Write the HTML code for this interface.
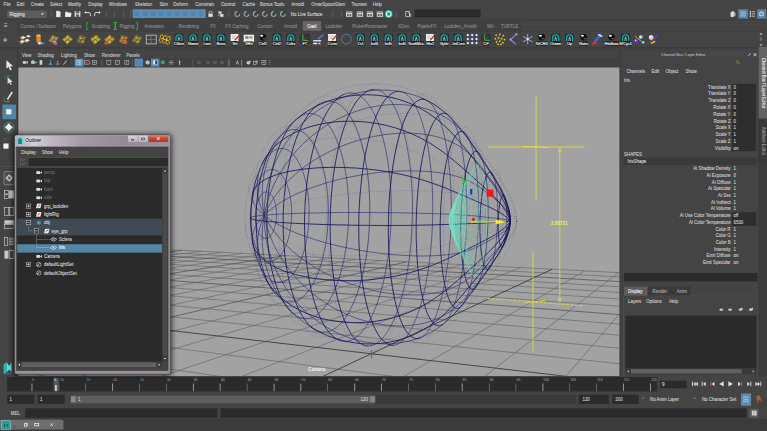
<!DOCTYPE html>
<html><head><meta charset="utf-8"><title>Maya</title>
<style>

html,body{margin:0;padding:0;background:#444;overflow:hidden}
body{width:767px;height:431px;position:relative}
#ui{position:absolute;left:0;top:0;width:1920px;height:1080px;transform-origin:0 0;transform:scale(0.399479,0.399074);opacity:.999;background:#444;font-family:"Liberation Sans",sans-serif;font-size:11px;color:#c4c4c4;overflow:hidden}
#ui div,#ui span,#ui svg{position:absolute;box-sizing:border-box}
.t{white-space:nowrap;transform:translateY(-50%) scaleX(.925);transform-origin:0 50%;line-height:1;-webkit-text-stroke:0.25px;font-size:12px}
.r{text-align:right;transform-origin:100% 50%}
.d{color:#8a8a8a}
.sep{background:#5a5a5a;width:2px}
#vp{left:45.6px;top:169.1px;width:1505.5px;height:772.5px}

</style></head><body>
<div id="ui">
<span class="t" style="left:9.3px;top:10.8px;color:#cfcfcf">File</span>
<span class="t" style="left:41.8px;top:10.8px;color:#cfcfcf">Edit</span>
<span class="t" style="left:77.1px;top:10.8px;color:#cfcfcf">Create</span>
<span class="t" style="left:125.2px;top:10.8px;color:#cfcfcf">Select</span>
<span class="t" style="left:170.2px;top:10.8px;color:#cfcfcf">Modify</span>
<span class="t" style="left:221.0px;top:10.8px;color:#cfcfcf">Display</span>
<span class="t" style="left:272.9px;top:10.8px;color:#cfcfcf">Windows</span>
<span class="t" style="left:338.4px;top:10.8px;color:#cfcfcf">Skeleton</span>
<span class="t" style="left:398.8px;top:10.8px;color:#cfcfcf">Skin</span>
<span class="t" style="left:433.8px;top:10.8px;color:#cfcfcf">Deform</span>
<span class="t" style="left:489.4px;top:10.8px;color:#cfcfcf">Constrain</span>
<span class="t" style="left:553.2px;top:10.8px;color:#cfcfcf">Control</span>
<span class="t" style="left:606.5px;top:10.8px;color:#cfcfcf">Cache</span>
<span class="t" style="left:650.8px;top:10.8px;color:#cfcfcf">Bonus Tools</span>
<span class="t" style="left:729.2px;top:10.8px;color:#cfcfcf">Arnold</span>
<span class="t" style="left:779.3px;top:10.8px;color:#cfcfcf">OmarSpoonSlam</span>
<span class="t" style="left:880.4px;top:10.8px;color:#cfcfcf">Tsunest</span>
<span class="t" style="left:933.0px;top:10.8px;color:#cfcfcf">Help</span>
<div style="left:18.0px;top:25.6px;width:98.9px;height:19.0px;background:#5d5d5d;border-radius:2px"></div>
<span class="t" style="left:23.8px;top:35.1px;color:#e0e0e0">Rigging</span>
<svg style="left:102.1px;top:32.6px;width:8px;height:6px" viewBox="0 0 8 6"><path d="M0 0H8L4 5Z" fill="#ddd"/></svg>
<div style="left:126.7px;top:26.3px;width:2.0px;height:17.5px;background:#606060"></div>
<div style="left:264.8px;top:26.3px;width:2.0px;height:17.5px;background:#606060"></div>
<div style="left:285.4px;top:26.3px;width:2.0px;height:17.5px;background:#606060"></div>
<div style="left:308.4px;top:26.3px;width:2.0px;height:17.5px;background:#606060"></div>
<div style="left:325.4px;top:26.3px;width:2.0px;height:17.5px;background:#606060"></div>
<svg style="left:137.4px;top:25.6px;width:18px;height:18px" viewBox="0 0 20 20"><path d="M4 1H12L16 5V19H4Z" fill="#e8e8e8"/><path d="M12 1V5H16" fill="#aaa"/></svg>
<svg style="left:162.0px;top:25.6px;width:18px;height:18px" viewBox="0 0 20 20"><path d="M1 4H8L10 6H18V18H1Z" fill="#d8d8d8"/><path d="M4 9H19L16 18H1Z" fill="#f0f0f0"/></svg>
<svg style="left:185.0px;top:25.6px;width:18px;height:18px" viewBox="0 0 20 20"><path d="M2 2H18V18H2Z" fill="#e0e0e0"/><rect x="5" y="2" width="10" height="6" fill="#555"/><rect x="6" y="11" width="8" height="7" fill="#555"/></svg>
<svg style="left:210.0px;top:25.6px;width:18px;height:18px" viewBox="0 0 20 20"><path d="M3 6H14Q18 6 18 11V16" stroke="#e0e0e0" stroke-width="2.6" fill="none"/><path d="M1 6L6 2V10Z" fill="#e0e0e0"/></svg>
<svg style="left:234.6px;top:25.6px;width:18px;height:18px" viewBox="0 0 20 20"><path d="M17 6H6Q2 6 2 11V16" stroke="#e0e0e0" stroke-width="2.6" fill="none"/><path d="M19 6L14 2V10Z" fill="#e0e0e0"/></svg>
<div style="left:331.7px;top:23.1px;width:183.2px;height:21.5px;background:#5b8cb3;border-radius:1px"></div>
<div style="left:335.4px;top:26.1px;width:15.0px;height:15.5px;background:#4f80a8;border:1px solid #74a4ca;opacity:.7"></div>
<div style="left:355.5px;top:26.1px;width:15.0px;height:15.5px;background:#4f80a8;border:1px solid #74a4ca;opacity:.7"></div>
<div style="left:375.5px;top:26.1px;width:15.0px;height:15.5px;background:#4f80a8;border:1px solid #74a4ca;opacity:.7"></div>
<div style="left:395.5px;top:26.1px;width:15.0px;height:15.5px;background:#4f80a8;border:1px solid #74a4ca;opacity:.7"></div>
<div style="left:415.5px;top:26.1px;width:15.0px;height:15.5px;background:#4f80a8;border:1px solid #74a4ca;opacity:.7"></div>
<div style="left:435.6px;top:26.1px;width:15.0px;height:15.5px;background:#4f80a8;border:1px solid #74a4ca;opacity:.7"></div>
<div style="left:455.6px;top:26.1px;width:15.0px;height:15.5px;background:#4f80a8;border:1px solid #74a4ca;opacity:.7"></div>
<div style="left:475.6px;top:26.1px;width:15.0px;height:15.5px;background:#4f80a8;border:1px solid #74a4ca;opacity:.7"></div>
<div style="left:495.6px;top:26.1px;width:15.0px;height:15.5px;background:#4f80a8;border:1px solid #74a4ca;opacity:.7"></div>
<svg style="left:517.9px;top:25.6px;width:18px;height:18px" viewBox="0 0 20 20"><rect x="4" y="9" width="12" height="9" fill="#e0e0e0"/><path d="M6 9V6Q6 2 10 2Q14 2 14 6V9" stroke="#e0e0e0" stroke-width="2" fill="none"/></svg>
<svg style="left:544.2px;top:25.6px;width:18px;height:18px" viewBox="0 0 20 20"><rect x="3" y="3" width="9" height="6" fill="#ddd"/><rect x="8" y="10" width="9" height="8" fill="#ddd"/><rect x="3" y="12" width="3" height="3" fill="#ddd"/></svg>
<div style="left:571.5px;top:26.3px;width:2.0px;height:17.5px;background:#606060"></div>
<svg style="left:585.0px;top:25.6px;width:18px;height:18px" viewBox="0 0 20 20"><path d="M5 5A7 7 0 1 1 5 15" stroke="#a8b8b8" stroke-width="2.6" fill="none" transform="rotate(135 10 10)"/><circle cx="6" cy="6" r="2.4" fill="#6aa"/></svg>
<svg style="left:608.1px;top:25.6px;width:18px;height:18px" viewBox="0 0 20 20"><path d="M5 5A7 7 0 1 1 5 15" stroke="#a8b8b8" stroke-width="2.6" fill="none" transform="rotate(135 10 10)"/><circle cx="6" cy="6" r="2.4" fill="#6aa"/></svg>
<svg style="left:630.6px;top:25.6px;width:18px;height:18px" viewBox="0 0 20 20"><path d="M5 5A7 7 0 1 1 5 15" stroke="#a8b8b8" stroke-width="2.6" fill="none" transform="rotate(135 10 10)"/><circle cx="6" cy="6" r="2.4" fill="#6aa"/></svg>
<svg style="left:653.6px;top:25.6px;width:18px;height:18px" viewBox="0 0 20 20"><path d="M5 5A7 7 0 1 1 5 15" stroke="#a8b8b8" stroke-width="2.6" fill="none" transform="rotate(135 10 10)"/><circle cx="6" cy="6" r="2.4" fill="#6aa"/></svg>
<svg style="left:676.4px;top:25.6px;width:18px;height:18px" viewBox="0 0 20 20"><path d="M5 5A7 7 0 1 1 5 15" stroke="#a8b8b8" stroke-width="2.6" fill="none" transform="rotate(135 10 10)"/><circle cx="6" cy="6" r="2.4" fill="#6aa"/></svg>
<svg style="left:699.4px;top:25.6px;width:18px;height:18px" viewBox="0 0 20 20"><path d="M5 5A7 7 0 1 1 5 15" stroke="#a8b8b8" stroke-width="2.6" fill="none" transform="rotate(135 10 10)"/><circle cx="6" cy="6" r="2.4" fill="#6aa"/></svg>
<span class="t" style="left:727.7px;top:35.1px;color:#d8d8d8">No Live Surface</span>
<div style="left:831.8px;top:26.3px;width:2.0px;height:17.5px;background:#606060"></div>
<div style="left:853.6px;top:26.3px;width:2.0px;height:17.5px;background:#606060"></div>
<div style="left:991.3px;top:26.3px;width:2.0px;height:17.5px;background:#606060"></div>
<svg style="left:865.4px;top:25.6px;width:18px;height:18px" viewBox="0 0 20 20"><rect x="1" y="3" width="18" height="15" fill="#d8d8d8"/><rect x="1" y="3" width="18" height="4" fill="#888"/><rect x="4" y="10" width="5" height="6" fill="#666"/><rect x="11" y="10" width="5" height="6" fill="#666"/></svg>
<svg style="left:891.7px;top:25.6px;width:18px;height:18px" viewBox="0 0 20 20"><rect x="1" y="3" width="18" height="15" fill="#d8d8d8"/><rect x="1" y="3" width="18" height="4" fill="#888"/><rect x="4" y="10" width="5" height="6" fill="#666"/><rect x="11" y="10" width="5" height="6" fill="#666"/></svg>
<svg style="left:917.2px;top:25.6px;width:18px;height:18px" viewBox="0 0 20 20"><rect x="1" y="3" width="18" height="15" fill="#d8d8d8"/><rect x="1" y="3" width="18" height="4" fill="#888"/><rect x="4" y="10" width="5" height="6" fill="#666"/><rect x="11" y="10" width="5" height="6" fill="#666"/></svg>
<svg style="left:942.2px;top:25.6px;width:18px;height:18px" viewBox="0 0 20 20"><rect x="1" y="3" width="18" height="15" fill="#d8d8d8"/><rect x="1" y="3" width="18" height="4" fill="#888"/><rect x="4" y="10" width="5" height="6" fill="#666"/><rect x="11" y="10" width="5" height="6" fill="#666"/></svg>
<svg style="left:962.0px;top:23.6px;width:22px;height:22px" viewBox="0 0 20 20"><circle cx="10" cy="10" r="9" fill="#1fa58e"/><circle cx="10" cy="10" r="5.5" fill="none" stroke="#e8fff8" stroke-width="2.4"/></svg>
<svg style="left:1013.6px;top:25.6px;width:18px;height:18px" viewBox="0 0 20 20"><rect x="2" y="3" width="10" height="14" fill="none" stroke="#ddd" stroke-width="2"/><path d="M9 7L17 12L13 13L15 18" stroke="#ddd" stroke-width="2" fill="none"/></svg>
<div style="left:1037.6px;top:24.1px;width:165.2px;height:20.0px;background:#2b2b2b;border-radius:1px"></div>
<svg style="left:1825.9px;top:25.6px;width:18px;height:18px" viewBox="0 0 20 20"><path d="M3 6L10 2L13 4V17L6 19L3 17Z" fill="#d8d8d8"/><path d="M13 4L17 7V15L13 17" fill="#aaa"/></svg>
<div style="left:1847.9px;top:23.1px;width:25.0px;height:24.1px;background:#587d9f"></div>
<svg style="left:1851.4px;top:25.6px;width:18px;height:18px" viewBox="0 0 20 20"><rect x="2" y="3" width="16" height="3" fill="#a9c6de"/><rect x="2" y="8.5" width="16" height="3" fill="#a9c6de"/><rect x="2" y="14" width="16" height="3" fill="#a9c6de"/></svg>
<svg style="left:1873.5px;top:25.6px;width:18px;height:18px" viewBox="0 0 20 20"><rect x="3" y="2" width="4" height="4" fill="#e0e0e0"/><rect x="3" y="8" width="4" height="4" fill="#e0e0e0"/><rect x="3" y="14" width="4" height="4" fill="#e0e0e0"/><rect x="9" y="3" width="9" height="2" fill="#e0e0e0"/><rect x="9" y="9" width="9" height="2" fill="#e0e0e0"/><rect x="9" y="15" width="9" height="2" fill="#e0e0e0"/></svg>
<div style="left:1894.5px;top:23.1px;width:23.0px;height:24.1px;background:#587d9f"></div>
<svg style="left:1897.0px;top:25.6px;width:18px;height:18px" viewBox="0 0 20 20"><path d="M10 2L17 6V14L10 18L3 14V6Z" fill="#a9c6de"/><circle cx="10" cy="10" r="3" fill="#4a6f92"/></svg>
<div style="left:0.0px;top:48.4px;width:1920.0px;height:1.3px;background:#3a3a3a"></div>
<span class="t" style="left:10.8px;top:64.1px;font-size:9px;color:#bbb">&#9776;</span>
<svg style="left:6.3px;top:92.7px;width:14px;height:14px" viewBox="0 0 14 14"><circle cx="7" cy="7" r="3.6" fill="none" stroke="#ccc" stroke-width="2.4" stroke-dasharray="2.2 1.6"/><circle cx="7" cy="7" r="2.6" fill="none" stroke="#ccc" stroke-width="1.6"/></svg>
<div style="left:42.6px;top:52.1px;width:1263.1px;height:26.1px;background:#404040"></div>
<div style="left:757.5px;top:52.6px;width:46.6px;height:24.1px;background:#686868;border-radius:2px 2px 0 0"></div>
<span class="t" style="left:50.8px;top:64.6px;color:#8c8c8c">Curves / Surfaces</span>
<span class="t" style="left:157.7px;top:64.6px;color:#8c8c8c">Polygons</span>
<span class="t" style="left:228.5px;top:64.6px;color:#8c8c8c">Sculpting</span>
<span class="t" style="left:298.6px;top:64.6px;color:#8c8c8c">Rigging</span>
<span class="t" style="left:361.0px;top:64.6px;color:#8c8c8c">Animation</span>
<span class="t" style="left:447.1px;top:64.6px;color:#8c8c8c">Rendering</span>
<span class="t" style="left:526.4px;top:64.6px;color:#8c8c8c">FX</span>
<span class="t" style="left:564.0px;top:64.6px;color:#8c8c8c">FX Caching</span>
<span class="t" style="left:644.1px;top:64.6px;color:#8c8c8c">Custom</span>
<span class="t" style="left:711.4px;top:64.6px;color:#8c8c8c">Arnold</span>
<span class="t" style="left:769.0px;top:64.6px;color:#f0f0f0">Gael</span>
<span class="t" style="left:815.1px;top:64.6px;color:#8c8c8c">Lookdev</span>
<span class="t" style="left:882.4px;top:64.6px;color:#8c8c8c">PickerPoromaster</span>
<span class="t" style="left:996.3px;top:64.6px;color:#8c8c8c">XGen</span>
<span class="t" style="left:1044.6px;top:64.6px;color:#8c8c8c">PipelinFX</span>
<span class="t" style="left:1111.9px;top:64.6px;color:#8c8c8c">Lookdev_Arnold</span>
<span class="t" style="left:1219.1px;top:64.6px;color:#8c8c8c">Wit</span>
<span class="t" style="left:1254.1px;top:64.6px;color:#8c8c8c">TURTLE</span>
<svg style="left:216.3px;top:54.6px;width:6px;height:20px" viewBox="0 0 6 20"><path d="M5 1H1V19H5" stroke="#22e022" stroke-width="2" fill="none"/></svg>
<svg style="left:283.1px;top:54.6px;width:6px;height:20px" viewBox="0 0 6 20"><path d="M1 1H5V19H1" stroke="#22e022" stroke-width="2" fill="none"/></svg>
<svg style="left:288.1px;top:54.6px;width:6px;height:20px" viewBox="0 0 6 20"><path d="M5 1H1V19H5" stroke="#22e022" stroke-width="2" fill="none"/></svg>
<svg style="left:339.2px;top:54.6px;width:6px;height:20px" viewBox="0 0 6 20"><path d="M1 1H5V19H1" stroke="#22e022" stroke-width="2" fill="none"/></svg>
<div style="left:42.6px;top:78.2px;width:1864.9px;height:1.3px;background:#3a3a3a"></div>
<div style="left:1305.7px;top:61.1px;width:613.3px;height:1.3px;background:#4e4e4e"></div>
<svg style="left:1900.0px;top:81.0px;width:10px;height:36px" viewBox="0 0 10 36"><path d="M1 6L5 1L9 6Z M1 30L5 35L9 30Z" fill="#bbb"/><rect x="2" y="13" width="6" height="2" fill="#999"/><rect x="2" y="18" width="6" height="2" fill="#999"/></svg>
<svg style="left:47.1px;top:81.5px;width:34px;height:34px" viewBox="0 0 34 34"><path d="M4 12L11 8L18 12L11 16Z M14 19L21 15L28 19L21 23Z M2 22L9 18L16 22L9 26Z M18 9L24 6L30 9L24 12Z" fill="#f3ead2"/><path d="M4 12L11 16V19L4 15Z M14 19L21 23V26L14 22Z M2 22L9 26V29L2 25Z" fill="#c69b58"/></svg>
<svg style="left:82.0px;top:81.5px;width:34px;height:34px" viewBox="0 0 34 34"><rect x="9" y="5" width="11" height="20" rx="4" fill="#e8862a"/><ellipse cx="14.5" cy="7" rx="5.5" ry="2.6" fill="#f8b66a"/><path d="M20 22L30 26L22 31L17 27Z" fill="#4f8fd0"/><path d="M12 26L18 23L22 26L16 30Z" fill="#f3f3f3"/></svg>
<svg style="left:116.9px;top:81.5px;width:34px;height:34px" viewBox="0 0 34 34"><g transform="rotate(0 17 17)"><path d="M4 21L14 5L30 12L20 29Z" fill="#9c8f5a"/><path d="M4 21L14 5L30 12L20 29Z M9 13L25 20.5 M12 25L22 8.5" stroke="#5f5430" stroke-width="1.8" fill="none"/><path d="M12 14L16 12L19 14L15 16Z M17 22L21 20L23 22L19 24Z" fill="#e6dc9a" opacity=".75"/></g><path d="M20 22L27 25L24 31L18 29Z" fill="#c35fc0"/></svg>
<svg style="left:151.8px;top:81.5px;width:34px;height:34px" viewBox="0 0 34 34"><g transform="rotate(18 17 17)"><path d="M4 21L14 5L30 12L20 29Z" fill="#b8a838"/><path d="M4 21L14 5L30 12L20 29Z M9 13L25 20.5 M12 25L22 8.5" stroke="#5a5220" stroke-width="1.8" fill="none"/><path d="M12 14L16 12L19 14L15 16Z M17 22L21 20L23 22L19 24Z" fill="#e6dc9a" opacity=".75"/></g></svg>
<svg style="left:186.8px;top:81.5px;width:34px;height:34px" viewBox="0 0 34 34"><g transform="rotate(-8 17 17)"><path d="M4 21L14 5L30 12L20 29Z" fill="#7f7840"/><path d="M4 21L14 5L30 12L20 29Z M9 13L25 20.5 M12 25L22 8.5" stroke="#5a5428" stroke-width="1.8" fill="none"/><path d="M12 14L16 12L19 14L15 16Z M17 22L21 20L23 22L19 24Z" fill="#e6dc9a" opacity=".75"/></g></svg>
<svg style="left:221.7px;top:81.5px;width:34px;height:34px" viewBox="0 0 34 34"><g transform="rotate(22 17 17)"><path d="M4 21L14 5L30 12L20 29Z" fill="#b5a53a"/><path d="M4 21L14 5L30 12L20 29Z M9 13L25 20.5 M12 25L22 8.5" stroke="#5f5622" stroke-width="1.8" fill="none"/><path d="M12 14L16 12L19 14L15 16Z M17 22L21 20L23 22L19 24Z" fill="#e6dc9a" opacity=".75"/></g></svg>
<svg style="left:256.6px;top:81.5px;width:34px;height:34px" viewBox="0 0 34 34"><g transform="rotate(15 17 17)"><path d="M4 21L14 5L30 12L20 29Z" fill="#b89a3a"/><path d="M4 21L14 5L30 12L20 29Z M9 13L25 20.5 M12 25L22 8.5" stroke="#6a5222" stroke-width="1.8" fill="none"/><path d="M12 14L16 12L19 14L15 16Z M17 22L21 20L23 22L19 24Z" fill="#e6dc9a" opacity=".75"/></g><path d="M6 22L14 26L10 31L4 28Z" fill="#c8632a"/></svg>
<svg style="left:291.5px;top:81.5px;width:34px;height:34px" viewBox="0 0 34 34"><g transform="rotate(-12 17 17)"><path d="M4 21L14 5L30 12L20 29Z" fill="#a8803c"/><path d="M4 21L14 5L30 12L20 29Z M9 13L25 20.5 M12 25L22 8.5" stroke="#6a4422" stroke-width="1.8" fill="none"/><path d="M12 14L16 12L19 14L15 16Z M17 22L21 20L23 22L19 24Z" fill="#e6dc9a" opacity=".75"/></g><path d="M16 20L28 22L24 29L14 27Z" fill="#c8632a"/></svg>
<svg style="left:326.4px;top:81.5px;width:34px;height:34px" viewBox="0 0 34 34"><g transform="rotate(0 17 17)"><path d="M4 21L14 5L30 12L20 29Z" fill="#8c8240"/><path d="M4 21L14 5L30 12L20 29Z M9 13L25 20.5 M12 25L22 8.5" stroke="#5c5426" stroke-width="1.8" fill="none"/><path d="M12 14L16 12L19 14L15 16Z M17 22L21 20L23 22L19 24Z" fill="#e6dc9a" opacity=".75"/></g></svg>
<svg style="left:361.4px;top:81.5px;width:34px;height:34px" viewBox="0 0 34 34"><rect x="5" y="6" width="25" height="22" fill="none" stroke="#d8d8d8" stroke-width="1.8"/><path d="M5 17H30M17 6V28" stroke="#9a9a9a" stroke-width="1.2"/></svg>
<svg style="left:396.3px;top:81.5px;width:34px;height:34px" viewBox="0 0 34 34"><g transform="rotate(14 17 17)"><path d="M4 8H29V26H4Z M4 17H29 M12 8V26 M21 8V26" stroke="#e0c030" stroke-width="2.6" fill="none"/><g fill="#7a5a10"><circle cx="4" cy="8" r="2.6"/><circle cx="12" cy="8" r="2.6"/><circle cx="21" cy="8" r="2.6"/><circle cx="29" cy="8" r="2.6"/><circle cx="4" cy="17" r="2.6"/><circle cx="29" cy="17" r="2.6"/><circle cx="4" cy="26" r="2.6"/><circle cx="12" cy="26" r="2.6"/><circle cx="21" cy="26" r="2.6"/><circle cx="29" cy="26" r="2.6"/></g></g></svg>
<svg style="left:431.2px;top:81.5px;width:34px;height:34px" viewBox="0 0 34 34"><g transform="translate(17 13) scale(.84) translate(-17 -14)"><rect x="3" y="1" width="28" height="27" rx="4" fill="#263034"/><path d="M8 25V14A9 9 0 0 1 26 14V25" stroke="#12a6a2" stroke-width="4" fill="none"/><path d="M14 23L17 11L20 23" stroke="#a8ece8" stroke-width="2" fill="none"/></g></svg><span class="t" style="left:448.2px;top:109.3px;font-size:10.5px;color:#fff;background:rgba(20,20,20,.55);padding:1px 0;letter-spacing:-0.2px;transform:translate(-50%,-50%) scaleX(.925);transform-origin:50% 50%">Clktrn</span>
<svg style="left:466.1px;top:81.5px;width:34px;height:34px" viewBox="0 0 34 34"><g transform="translate(17 13) scale(.84) translate(-17 -14)"><rect x="3" y="1" width="28" height="27" rx="4" fill="#263034"/><path d="M8 25V14A9 9 0 0 1 26 14V25" stroke="#12a6a2" stroke-width="4" fill="none"/><path d="M14 23L17 11L20 23" stroke="#a8ece8" stroke-width="2" fill="none"/></g></svg><span class="t" style="left:483.1px;top:109.3px;font-size:10.5px;color:#fff;background:rgba(20,20,20,.55);padding:1px 0;letter-spacing:-0.2px;transform:translate(-50%,-50%) scaleX(.925);transform-origin:50% 50%">Name</span>
<svg style="left:501.0px;top:81.5px;width:34px;height:34px" viewBox="0 0 34 34"><g transform="translate(17 13) scale(.84) translate(-17 -14)"><rect x="3" y="1" width="28" height="27" rx="4" fill="#263034"/><path d="M8 25V14A9 9 0 0 1 26 14V25" stroke="#12a6a2" stroke-width="4" fill="none"/><path d="M14 23L17 11L20 23" stroke="#a8ece8" stroke-width="2" fill="none"/></g></svg><span class="t" style="left:518.0px;top:109.3px;font-size:10.5px;color:#fff;background:rgba(20,20,20,.55);padding:1px 0;letter-spacing:-0.2px;transform:translate(-50%,-50%) scaleX(.925);transform-origin:50% 50%">Last</span>
<svg style="left:536.0px;top:81.5px;width:34px;height:34px" viewBox="0 0 34 34"><g transform="translate(17 13) scale(.84) translate(-17 -14)"><rect x="3" y="1" width="28" height="27" rx="4" fill="#263034"/><path d="M8 25V14A9 9 0 0 1 26 14V25" stroke="#12a6a2" stroke-width="4" fill="none"/><path d="M14 23L17 11L20 23" stroke="#a8ece8" stroke-width="2" fill="none"/></g></svg><span class="t" style="left:553.0px;top:109.3px;font-size:10.5px;color:#fff;background:rgba(20,20,20,.55);padding:1px 0;letter-spacing:-0.2px;transform:translate(-50%,-50%) scaleX(.925);transform-origin:50% 50%">Boss</span>
<svg style="left:570.9px;top:81.5px;width:34px;height:34px" viewBox="0 0 34 34"><g transform="translate(17 12) scale(.82) translate(-17 -14)"><path d="M4 3H28V25H4Z" fill="#f2f2f2"/><path d="M8 9H22M8 13H18M8 17H20" stroke="#999" stroke-width="1.4"/><path d="M16 20L28 6L31 9L19 23L15 24Z" fill="#c0392b"/><path d="M16 20L19 23L15 24Z" fill="#f1d9a0"/></g></svg><span class="t" style="left:587.9px;top:109.3px;font-size:10.5px;color:#fff;background:rgba(20,20,20,.55);padding:1px 0;letter-spacing:-0.2px;transform:translate(-50%,-50%) scaleX(.925);transform-origin:50% 50%">Srt</span>
<svg style="left:605.8px;top:81.5px;width:34px;height:34px" viewBox="0 0 34 34"><rect x="4" y="5" width="26" height="18" fill="#ececec"/><rect x="8" y="9" width="8" height="6" fill="#777"/><rect x="18" y="9" width="8" height="6" fill="#999"/></svg><span class="t" style="left:622.8px;top:109.3px;font-size:10.5px;color:#fff;background:rgba(20,20,20,.55);padding:1px 0;letter-spacing:-0.2px;transform:translate(-50%,-50%) scaleX(.925);transform-origin:50% 50%">SRtt</span>
<svg style="left:640.7px;top:81.5px;width:34px;height:34px" viewBox="0 0 34 34"><g transform="translate(17 11) scale(.85) translate(-17 -12)"><circle cx="17" cy="12" r="10" fill="#111"/><ellipse cx="13.5" cy="8" rx="4.5" ry="3.2" fill="#f4f4f4"/><ellipse cx="21" cy="17" rx="5" ry="2.2" fill="#777" opacity=".7"/></g></svg><span class="t" style="left:657.7px;top:109.3px;font-size:10.5px;color:#fff;background:rgba(20,20,20,.55);padding:1px 0;letter-spacing:-0.2px;transform:translate(-50%,-50%) scaleX(.925);transform-origin:50% 50%">Ctrl1</span>
<svg style="left:675.7px;top:81.5px;width:34px;height:34px" viewBox="0 0 34 34"><g transform="translate(17 13) scale(.84) translate(-17 -14)"><rect x="3" y="1" width="28" height="27" rx="4" fill="#263034"/><path d="M8 25V14A9 9 0 0 1 26 14V25" stroke="#12a6a2" stroke-width="4" fill="none"/><path d="M14 23L17 11L20 23" stroke="#a8ece8" stroke-width="2" fill="none"/></g></svg><span class="t" style="left:692.7px;top:109.3px;font-size:10.5px;color:#fff;background:rgba(20,20,20,.55);padding:1px 0;letter-spacing:-0.2px;transform:translate(-50%,-50%) scaleX(.925);transform-origin:50% 50%">Ctrl2</span>
<svg style="left:710.6px;top:81.5px;width:34px;height:34px" viewBox="0 0 34 34"><g transform="translate(17 13) scale(.84) translate(-17 -14)"><rect x="3" y="1" width="28" height="27" rx="4" fill="#263034"/><path d="M8 25V14A9 9 0 0 1 26 14V25" stroke="#12a6a2" stroke-width="4" fill="none"/><path d="M14 23L17 11L20 23" stroke="#a8ece8" stroke-width="2" fill="none"/></g></svg><span class="t" style="left:727.6px;top:109.3px;font-size:10.5px;color:#fff;background:rgba(20,20,20,.55);padding:1px 0;letter-spacing:-0.2px;transform:translate(-50%,-50%) scaleX(.925);transform-origin:50% 50%">Colrs</span>
<svg style="left:745.5px;top:81.5px;width:34px;height:34px" viewBox="0 0 34 34"><rect x="4" y="2" width="26" height="26" fill="#38303a"/><path d="M12 4V20H26" stroke="#4c4" stroke-width="2.4" fill="none"/><path d="M12 20L22 12" stroke="#c33" stroke-width="2.4"/></svg><span class="t" style="left:762.5px;top:109.3px;font-size:10.5px;color:#fff;background:rgba(20,20,20,.55);padding:1px 0;letter-spacing:-0.2px;transform:translate(-50%,-50%) scaleX(.925);transform-origin:50% 50%">FT</span>
<svg style="left:780.4px;top:81.5px;width:34px;height:34px" viewBox="0 0 34 34"><path d="M4 18H24V22H4Z" fill="#d8d8d8"/><path d="M4 25H14V29H4Z" fill="#f0f0f0"/><path d="M16 16L29 5" stroke="#5b78d8" stroke-width="3.4"/><path d="M17 25H22V29H17Z" fill="#ddd"/></svg>
<svg style="left:815.3px;top:81.5px;width:34px;height:34px" viewBox="0 0 34 34"><g transform="translate(17 12) scale(.82) translate(-17 -14)"><path d="M4 3H28V25H4Z" fill="#f2f2f2"/><path d="M8 9H22M8 13H18M8 17H20" stroke="#999" stroke-width="1.4"/><path d="M16 20L28 6L31 9L19 23L15 24Z" fill="#c0392b"/><path d="M16 20L19 23L15 24Z" fill="#f1d9a0"/></g></svg><span class="t" style="left:832.3px;top:109.3px;font-size:10.5px;color:#fff;background:rgba(20,20,20,.55);padding:1px 0;letter-spacing:-0.2px;transform:translate(-50%,-50%) scaleX(.925);transform-origin:50% 50%">Conn</span>
<svg style="left:850.3px;top:81.5px;width:34px;height:34px" viewBox="0 0 34 34"><circle cx="17" cy="16" r="12" fill="none" stroke="#4f7fb8" stroke-width="2.2"/></svg>
<svg style="left:885.2px;top:81.5px;width:34px;height:34px" viewBox="0 0 34 34"><g transform="translate(17 13) scale(.84) translate(-17 -14)"><rect x="3" y="1" width="28" height="27" rx="4" fill="#263034"/><path d="M8 25V14A9 9 0 0 1 26 14V25" stroke="#12a6a2" stroke-width="4" fill="none"/><path d="M14 23L17 11L20 23" stroke="#a8ece8" stroke-width="2" fill="none"/></g></svg><span class="t" style="left:902.2px;top:109.3px;font-size:10.5px;color:#fff;background:rgba(20,20,20,.55);padding:1px 0;letter-spacing:-0.2px;transform:translate(-50%,-50%) scaleX(.925);transform-origin:50% 50%">Cvl</span>
<svg style="left:920.1px;top:81.5px;width:34px;height:34px" viewBox="0 0 34 34"><g transform="translate(17 13) scale(.84) translate(-17 -14)"><rect x="3" y="1" width="28" height="27" rx="4" fill="#263034"/><path d="M8 25V14A9 9 0 0 1 26 14V25" stroke="#12a6a2" stroke-width="4" fill="none"/><path d="M14 23L17 11L20 23" stroke="#a8ece8" stroke-width="2" fill="none"/></g></svg><span class="t" style="left:937.1px;top:109.3px;font-size:10.5px;color:#fff;background:rgba(20,20,20,.55);padding:1px 0;letter-spacing:-0.2px;transform:translate(-50%,-50%) scaleX(.925);transform-origin:50% 50%">bcl6</span>
<svg style="left:955.0px;top:81.5px;width:34px;height:34px" viewBox="0 0 34 34"><g transform="translate(17 13) scale(.84) translate(-17 -14)"><rect x="3" y="1" width="28" height="27" rx="4" fill="#263034"/><path d="M8 25V14A9 9 0 0 1 26 14V25" stroke="#12a6a2" stroke-width="4" fill="none"/><path d="M14 23L17 11L20 23" stroke="#a8ece8" stroke-width="2" fill="none"/></g></svg><span class="t" style="left:972.0px;top:109.3px;font-size:10.5px;color:#fff;background:rgba(20,20,20,.55);padding:1px 0;letter-spacing:-0.2px;transform:translate(-50%,-50%) scaleX(.925);transform-origin:50% 50%">bcl5</span>
<svg style="left:989.9px;top:81.5px;width:34px;height:34px" viewBox="0 0 34 34"><g transform="translate(17 13) scale(.84) translate(-17 -14)"><rect x="3" y="1" width="28" height="27" rx="4" fill="#263034"/><path d="M8 25V14A9 9 0 0 1 26 14V25" stroke="#12a6a2" stroke-width="4" fill="none"/><path d="M14 23L17 11L20 23" stroke="#a8ece8" stroke-width="2" fill="none"/></g></svg><span class="t" style="left:1006.9px;top:109.3px;font-size:10.5px;color:#fff;background:rgba(20,20,20,.55);padding:1px 0;letter-spacing:-0.2px;transform:translate(-50%,-50%) scaleX(.925);transform-origin:50% 50%">bcl5</span>
<svg style="left:1024.9px;top:81.5px;width:34px;height:34px" viewBox="0 0 34 34"><g transform="translate(17 13) scale(.84) translate(-17 -14)"><rect x="3" y="1" width="28" height="27" rx="4" fill="#263034"/><path d="M8 25V14A9 9 0 0 1 26 14V25" stroke="#12a6a2" stroke-width="4" fill="none"/><path d="M14 23L17 11L20 23" stroke="#a8ece8" stroke-width="2" fill="none"/></g></svg><span class="t" style="left:1041.9px;top:109.3px;font-size:10.5px;color:#fff;background:rgba(20,20,20,.55);padding:1px 0;letter-spacing:-0.2px;transform:translate(-50%,-50%) scaleX(.925);transform-origin:50% 50%">SoeftMut.</span>
<svg style="left:1059.8px;top:81.5px;width:34px;height:34px" viewBox="0 0 34 34"><g transform="translate(17 12) scale(.82) translate(-17 -14)"><path d="M4 3H28V25H4Z" fill="#f2f2f2"/><path d="M8 9H22M8 13H18M8 17H20" stroke="#999" stroke-width="1.4"/><path d="M16 20L28 6L31 9L19 23L15 24Z" fill="#c0392b"/><path d="M16 20L19 23L15 24Z" fill="#f1d9a0"/></g></svg><span class="t" style="left:1076.8px;top:109.3px;font-size:10.5px;color:#fff;background:rgba(20,20,20,.55);padding:1px 0;letter-spacing:-0.2px;transform:translate(-50%,-50%) scaleX(.925);transform-origin:50% 50%">Hts1</span>
<svg style="left:1094.7px;top:81.5px;width:34px;height:34px" viewBox="0 0 34 34"><g transform="translate(17 13) scale(.84) translate(-17 -14)"><rect x="3" y="1" width="28" height="27" rx="4" fill="#263034"/><path d="M8 25V14A9 9 0 0 1 26 14V25" stroke="#12a6a2" stroke-width="4" fill="none"/><path d="M14 23L17 11L20 23" stroke="#a8ece8" stroke-width="2" fill="none"/></g></svg><span class="t" style="left:1111.7px;top:109.3px;font-size:10.5px;color:#fff;background:rgba(20,20,20,.55);padding:1px 0;letter-spacing:-0.2px;transform:translate(-50%,-50%) scaleX(.925);transform-origin:50% 50%">Splitr</span>
<svg style="left:1129.6px;top:81.5px;width:34px;height:34px" viewBox="0 0 34 34"><g transform="translate(17 13) scale(.84) translate(-17 -14)"><rect x="3" y="1" width="28" height="27" rx="4" fill="#263034"/><path d="M8 25V14A9 9 0 0 1 26 14V25" stroke="#12a6a2" stroke-width="4" fill="none"/><path d="M14 23L17 11L20 23" stroke="#a8ece8" stroke-width="2" fill="none"/></g></svg><span class="t" style="left:1146.6px;top:109.3px;font-size:10.5px;color:#fff;background:rgba(20,20,20,.55);padding:1px 0;letter-spacing:-0.2px;transform:translate(-50%,-50%) scaleX(.925);transform-origin:50% 50%">JntCors</span>
<svg style="left:1164.5px;top:81.5px;width:34px;height:34px" viewBox="0 0 34 34"><path d="M6 6H28V26H6Z M6 16H28 M17 6V26" stroke="#4f67c8" stroke-width="1.6" fill="none"/><g fill="#f4f4f4"><circle cx="6" cy="6" r="2.8"/><circle cx="17" cy="6" r="2.8"/><circle cx="28" cy="6" r="2.8"/><circle cx="6" cy="16" r="2.8"/><circle cx="17" cy="16" r="2.8"/><circle cx="28" cy="16" r="2.8"/><circle cx="6" cy="26" r="2.8"/><circle cx="17" cy="26" r="2.8"/><circle cx="28" cy="26" r="2.8"/></g></svg>
<svg style="left:1199.5px;top:81.5px;width:34px;height:34px" viewBox="0 0 34 34"><rect x="5" y="3" width="24" height="25" fill="#3a3238"/><path d="M13 4V19H27" stroke="#3c3" stroke-width="2.2" fill="none"/><path d="M13 19L6 26" stroke="#c33" stroke-width="2.4"/><path d="M13 19L22 10" stroke="#55c" stroke-width="2"/></svg><span class="t" style="left:1216.5px;top:109.3px;font-size:10.5px;color:#fff;background:rgba(20,20,20,.55);padding:1px 0;letter-spacing:-0.2px;transform:translate(-50%,-50%) scaleX(.925);transform-origin:50% 50%">CP</span>
<svg style="left:1234.4px;top:81.5px;width:34px;height:34px" viewBox="0 0 34 34"><g fill="#e8d040"><circle cx="8" cy="6" r="2.2"/><circle cx="17" cy="4" r="2.2"/><circle cx="26" cy="7" r="2.2"/><circle cx="6" cy="15" r="2.2"/><circle cx="14" cy="13" r="2.2"/><circle cx="22" cy="15" r="2.2"/><circle cx="29" cy="17" r="2.2"/><circle cx="9" cy="23" r="2.2"/><circle cx="17" cy="21" r="2.2"/><circle cx="25" cy="25" r="2.2"/><circle cx="13" cy="29" r="2.2"/><circle cx="20" cy="29" r="2.2"/></g><path d="M8 6L14 13L9 23M17 4L14 13L22 15L17 21L25 25M26 7L22 15" stroke="#a8962c" stroke-width="1" fill="none"/></svg>
<svg style="left:1269.3px;top:81.5px;width:34px;height:34px" viewBox="0 0 34 34"><path d="M24 4L9 17L22 29" stroke="#8d7fe0" stroke-width="3" fill="none"/><circle cx="24" cy="4" r="2.4" fill="#b7b0ee"/><circle cx="9" cy="17" r="2.4" fill="#b7b0ee"/></svg>
<svg style="left:1304.2px;top:81.5px;width:34px;height:34px" viewBox="0 0 34 34"><path d="M17 3V29 M5 9L29 23 M5 23L29 9" stroke="#9fc0f0" stroke-width="2.2"/><circle cx="17" cy="16" r="2.6" fill="#e8f0ff"/></svg>
<svg style="left:1339.1px;top:81.5px;width:34px;height:34px" viewBox="0 0 34 34"><g transform="translate(17 11) scale(.85) translate(-17 -12)"><circle cx="17" cy="12" r="10" fill="#111"/><ellipse cx="13.5" cy="8" rx="4.5" ry="3.2" fill="#f4f4f4"/><ellipse cx="21" cy="17" rx="5" ry="2.2" fill="#777" opacity=".7"/></g></svg><span class="t" style="left:1356.1px;top:109.3px;font-size:10.5px;color:#fff;background:rgba(20,20,20,.55);padding:1px 0;letter-spacing:-0.2px;transform:translate(-50%,-50%) scaleX(.925);transform-origin:50% 50%">NrCRtl</span>
<svg style="left:1374.1px;top:81.5px;width:34px;height:34px" viewBox="0 0 34 34"><g transform="translate(17 13) scale(.84) translate(-17 -14)"><rect x="3" y="1" width="28" height="27" rx="4" fill="#263034"/><path d="M8 25V14A9 9 0 0 1 26 14V25" stroke="#12a6a2" stroke-width="4" fill="none"/><path d="M14 23L17 11L20 23" stroke="#a8ece8" stroke-width="2" fill="none"/></g></svg><span class="t" style="left:1391.1px;top:109.3px;font-size:10.5px;color:#fff;background:rgba(20,20,20,.55);padding:1px 0;letter-spacing:-0.2px;transform:translate(-50%,-50%) scaleX(.925);transform-origin:50% 50%">Ozaen</span>
<svg style="left:1409.0px;top:81.5px;width:34px;height:34px" viewBox="0 0 34 34"><g transform="translate(17 13) scale(.84) translate(-17 -14)"><rect x="3" y="1" width="28" height="27" rx="4" fill="#263034"/><path d="M8 25V14A9 9 0 0 1 26 14V25" stroke="#12a6a2" stroke-width="4" fill="none"/><path d="M14 23L17 11L20 23" stroke="#a8ece8" stroke-width="2" fill="none"/></g></svg><span class="t" style="left:1426.0px;top:109.3px;font-size:10.5px;color:#fff;background:rgba(20,20,20,.55);padding:1px 0;letter-spacing:-0.2px;transform:translate(-50%,-50%) scaleX(.925);transform-origin:50% 50%">Up</span>
<svg style="left:1443.9px;top:81.5px;width:34px;height:34px" viewBox="0 0 34 34"><g transform="translate(17 11) scale(.85) translate(-17 -12)"><circle cx="17" cy="12" r="10" fill="#111"/><ellipse cx="13.5" cy="8" rx="4.5" ry="3.2" fill="#f4f4f4"/><ellipse cx="21" cy="17" rx="5" ry="2.2" fill="#777" opacity=".7"/></g></svg><span class="t" style="left:1460.9px;top:109.3px;font-size:10.5px;color:#fff;background:rgba(20,20,20,.55);padding:1px 0;letter-spacing:-0.2px;transform:translate(-50%,-50%) scaleX(.925);transform-origin:50% 50%">Nstro</span>
<svg style="left:1478.8px;top:81.5px;width:34px;height:34px" viewBox="0 0 34 34"><path d="M8 26L24 6" stroke="#3c68d8" stroke-width="6" stroke-linecap="round"/><path d="M20 5L27 9" stroke="#d0d8ff" stroke-width="4" stroke-linecap="round"/><path d="M5 28L13 24" stroke="#d83030" stroke-width="5" stroke-linecap="round"/></svg>
<svg style="left:1513.7px;top:81.5px;width:34px;height:34px" viewBox="0 0 34 34"><g transform="translate(17 11) scale(.85) translate(-17 -12)"><circle cx="17" cy="12" r="10" fill="#111"/><ellipse cx="13.5" cy="8" rx="4.5" ry="3.2" fill="#f4f4f4"/><ellipse cx="21" cy="17" rx="5" ry="2.2" fill="#777" opacity=".7"/></g></svg><span class="t" style="left:1530.7px;top:109.3px;font-size:10.5px;color:#fff;background:rgba(20,20,20,.55);padding:1px 0;letter-spacing:-0.2px;transform:translate(-50%,-50%) scaleX(.925);transform-origin:50% 50%">Hddlsas</span>
<svg style="left:1548.7px;top:81.5px;width:34px;height:34px" viewBox="0 0 34 34"><g transform="translate(17 13) scale(.84) translate(-17 -14)"><rect x="3" y="1" width="28" height="27" rx="4" fill="#263034"/><path d="M8 25V14A9 9 0 0 1 26 14V25" stroke="#12a6a2" stroke-width="4" fill="none"/><path d="M14 23L17 11L20 23" stroke="#a8ece8" stroke-width="2" fill="none"/></g></svg><span class="t" style="left:1565.7px;top:109.3px;font-size:10.5px;color:#fff;background:rgba(20,20,20,.55);padding:1px 0;letter-spacing:-0.2px;transform:translate(-50%,-50%) scaleX(.925);transform-origin:50% 50%">M'Cyc1</span>
<svg style="left:1583.6px;top:81.5px;width:34px;height:34px" viewBox="0 0 34 34"><path d="M6 24L28 6" stroke="#d04040" stroke-width="2"/><path d="M5 8L27 26" stroke="#e0d040" stroke-width="1.6"/><circle cx="9" cy="21" r="5.5" fill="#6a34c8"/><circle cx="20" cy="11" r="4.5" fill="#a7e6f8"/><circle cx="7" cy="19" r="1.8" fill="#fff"/><circle cx="26" cy="24" r="3.4" fill="#7ad4f0"/></svg>
<svg style="left:1618.5px;top:81.5px;width:34px;height:34px" viewBox="0 0 34 34"><path d="M5 26L27 8" stroke="#d04040" stroke-width="2"/><circle cx="11" cy="12" r="6" fill="#a7e6f8"/><circle cx="9" cy="10" r="2" fill="#fff"/><circle cx="23" cy="10" r="4.2" fill="#5a34c8"/><path d="M12 26L20 22" stroke="#e8c030" stroke-width="4" stroke-linecap="round"/></svg>
<div style="left:0.0px;top:119.3px;width:1920.0px;height:1.5px;background:#363636"></div>
<div style="left:44.1px;top:120.8px;width:1.5px;height:821.9px;background:#333"></div>
<div style="left:44.8px;top:146.3px;width:1506.5px;height:22.8px;background:#404040"></div>
<span class="t" style="left:54.8px;top:137.6px;color:#c8c8c8">View</span>
<span class="t" style="left:93.6px;top:137.6px;color:#c8c8c8">Shading</span>
<span class="t" style="left:152.7px;top:137.6px;color:#c8c8c8">Lighting</span>
<span class="t" style="left:210.3px;top:137.6px;color:#c8c8c8">Show</span>
<span class="t" style="left:254.6px;top:137.6px;color:#c8c8c8">Renderer</span>
<span class="t" style="left:316.2px;top:137.6px;color:#c8c8c8">Panels</span>
<svg style="left:56.3px;top:149.4px;width:15px;height:15px" viewBox="0 0 18 18"><rect x="1" y="5" width="11" height="8" fill="#cfcfcf"/><path d="M12 9L17 5V13Z" fill="#cfcfcf"/></svg>
<svg style="left:77.1px;top:149.4px;width:15px;height:15px" viewBox="0 0 18 18"><rect x="1" y="5" width="11" height="8" fill="#b8d0c8"/><path d="M12 9L17 5V13Z" fill="#b8d0c8"/><rect x="3" y="2" width="6" height="3" fill="#8cc"/></svg>
<svg style="left:95.1px;top:149.4px;width:15px;height:15px" viewBox="0 0 18 18"><rect x="5" y="2" width="8" height="14" fill="#cfcfcf"/></svg>
<svg style="left:118.9px;top:149.4px;width:15px;height:15px" viewBox="0 0 18 18"><path d="M9 2V12M3 15H15M5 12H13" stroke="#5aa0c8" stroke-width="2.4" fill="none"/></svg>
<svg style="left:137.2px;top:149.4px;width:15px;height:15px" viewBox="0 0 18 18"><path d="M9 3V13M3 14H15" stroke="#b0b8b0" stroke-width="2" fill="none"/></svg>
<svg style="left:155.2px;top:149.4px;width:15px;height:15px" viewBox="0 0 18 18"><path d="M3 15L13 3L15 5L5 16Z" fill="#cfcfcf"/></svg>
<div style="left:176.5px;top:149.1px;width:1.5px;height:16.0px;background:#666"></div>
<div style="left:187.2px;top:147.3px;width:21.5px;height:19.5px;background:#5b8cb3"></div>
<svg style="left:190.3px;top:149.4px;width:15px;height:15px" viewBox="0 0 18 18"><rect x="3" y="3" width="12" height="12" fill="none" stroke="#d0e4f4" stroke-width="1.6"/><rect x="6" y="6" width="6" height="6" fill="#a8c8e4"/></svg>
<svg style="left:210.3px;top:149.4px;width:15px;height:15px" viewBox="0 0 18 18"><rect x="2" y="4" width="14" height="10" fill="none" stroke="#cfcfcf" stroke-width="1.6"/><rect x="4" y="8" width="10" height="4" fill="#b04040"/></svg>
<svg style="left:228.8px;top:149.4px;width:15px;height:15px" viewBox="0 0 18 18"><rect x="3" y="3" width="12" height="12" fill="none" stroke="#cfcfcf" stroke-width="1.6"/><rect x="7" y="7" width="4" height="4" fill="#cfcfcf"/></svg>
<div style="left:254.1px;top:149.1px;width:1.5px;height:16.0px;background:#666"></div>
<svg style="left:265.4px;top:149.4px;width:15px;height:15px" viewBox="0 0 18 18"><rect x="3" y="3" width="12" height="12" fill="none" stroke="#cfcfcf" stroke-width="1.5"/></svg>
<svg style="left:287.4px;top:149.4px;width:15px;height:15px" viewBox="0 0 18 18"><rect x="3" y="3" width="12" height="12" fill="none" stroke="#cfcfcf" stroke-width="1.5"/><path d="M6 12L12 6" stroke="#cfcfcf" stroke-width="1.4"/></svg>
<svg style="left:309.7px;top:149.4px;width:15px;height:15px" viewBox="0 0 18 18"><rect x="3" y="3" width="12" height="12" fill="none" stroke="#cfcfcf" stroke-width="1.5"/><path d="M9 5V13" stroke="#cfcfcf" stroke-width="1.6"/></svg>
<div style="left:331.2px;top:149.1px;width:1.5px;height:16.0px;background:#666"></div>
<div style="left:336.9px;top:147.3px;width:21.5px;height:19.5px;background:#5b8cb3"></div>
<svg style="left:340.0px;top:149.4px;width:15px;height:15px" viewBox="0 0 18 18"><path d="M9 2L15 5.5V12.5L9 16L3 12.5V5.5Z" fill="none" stroke="#4a7aa0" stroke-width="1.4"/></svg>
<svg style="left:362.0px;top:149.4px;width:15px;height:15px" viewBox="0 0 18 18"><path d="M9 2L15 5.5V12.5L9 16L3 12.5V5.5Z" fill="#c8d0d0"/><path d="M9 9V16M3 5.5L9 9L15 5.5" stroke="#777" stroke-width="1" fill="none"/></svg>
<div style="left:378.0px;top:147.3px;width:20.5px;height:19.5px;background:#5b8cb3"></div>
<svg style="left:380.5px;top:149.4px;width:15px;height:15px" viewBox="0 0 18 18"><rect x="3" y="3" width="12" height="12" fill="#e8f0f8"/><path d="M9 3A6 6 0 0 1 9 15Z" fill="#335"/></svg>
<svg style="left:399.5px;top:149.4px;width:15px;height:15px" viewBox="0 0 18 18"><circle cx="9" cy="9" r="6.5" fill="#4f8f88"/></svg>
<svg style="left:421.3px;top:149.4px;width:15px;height:15px" viewBox="0 0 18 18"><circle cx="9" cy="9" r="2.4" fill="#cfcfcf"/><path d="M9 1V5M9 13V17M1 9H5M13 9H17M3.5 3.5L6 6M12 12L14.5 14.5M3.5 14.5L6 12M12 6L14.5 3.5" stroke="#cfcfcf" stroke-width="1.6"/></svg>
<svg style="left:442.1px;top:149.4px;width:15px;height:15px" viewBox="0 0 18 18"><path d="M9 2L12 8H6Z" fill="#cfcfcf"/><rect x="7.5" y="8" width="3" height="8" fill="#cfcfcf"/></svg>
<div style="left:480.6px;top:149.1px;width:1.5px;height:16.0px;background:#777"></div>
<svg style="left:490.6px;top:149.4px;width:15px;height:15px" viewBox="0 0 18 18"><rect x="4" y="4" width="10" height="10" fill="#585858"/></svg>
<svg style="left:512.7px;top:149.4px;width:15px;height:15px" viewBox="0 0 18 18"><rect x="4" y="4" width="10" height="10" fill="#585858"/></svg>
<svg style="left:530.7px;top:149.4px;width:15px;height:15px" viewBox="0 0 18 18"><rect x="4" y="4" width="10" height="10" fill="#585858"/></svg>
<svg style="left:548.2px;top:149.4px;width:15px;height:15px" viewBox="0 0 18 18"><rect x="4" y="4" width="10" height="10" fill="#585858"/></svg>
<div style="left:572.2px;top:149.1px;width:1.5px;height:16.0px;background:#999"></div>
<svg style="left:585.8px;top:149.4px;width:15px;height:15px" viewBox="0 0 18 18"><path d="M6 15L10 4L13 15" stroke="#cfcfcf" stroke-width="2" fill="none"/></svg>
<div style="left:604.0px;top:149.1px;width:1.5px;height:16.0px;background:#999"></div>
<svg style="left:614.6px;top:149.4px;width:15px;height:15px" viewBox="0 0 18 18"><circle cx="8" cy="10" r="5.5" fill="#cfcfcf"/><circle cx="12" cy="7" r="4" fill="#9ab"/></svg>
<svg style="left:633.3px;top:149.4px;width:15px;height:15px" viewBox="0 0 18 18"><rect x="2" y="6" width="9" height="9" fill="none" stroke="#cfcfcf" stroke-width="1.6"/><rect x="7" y="3" width="8" height="8" fill="#7a9"/></svg>
<svg style="left:652.6px;top:149.4px;width:15px;height:15px" viewBox="0 0 18 18"><rect x="3" y="3" width="12" height="12" fill="none" stroke="#cfcfcf" stroke-width="1.6"/><rect x="7" y="7" width="4" height="4" fill="#cfcfcf"/></svg>
<svg style="left:667.9px;top:149.4px;width:15px;height:15px" viewBox="0 0 18 18"><circle cx="9" cy="4" r="1.3" fill="#cfcfcf"/><circle cx="9" cy="9" r="1.3" fill="#cfcfcf"/><circle cx="9" cy="14" r="1.3" fill="#cfcfcf"/></svg>
<svg style="left:13.0px;top:149.9px;width:22px;height:28px" viewBox="0 0 22 28"><path d="M3 1V22L8.5 17.5L12.5 26.5L16.5 24.5L12.5 16H20Z" fill="#e6e6e6"/></svg>
<svg style="left:7.0px;top:186.5px;width:28px;height:30px" viewBox="0 0 28 30"><path d="M12 6V23L16.5 19.5L19.5 26L22.5 24.5L19.5 18.5H25Z" fill="#dcdcdc"/><path d="M20 5A9 5 0 1 0 7 12" stroke="#3fa8a0" stroke-width="2" fill="none" stroke-dasharray="3 2"/></svg>
<svg style="left:8.5px;top:225.6px;width:26px;height:32px" viewBox="0 0 26 32"><path d="M8 22L20 3L23.5 5.5L11 24.5Z" fill="#e0e0e0"/><path d="M4 20A8 5 0 1 0 16 26" stroke="#3fa8a0" stroke-width="2" fill="none"/></svg>
<div style="left:5.5px;top:262.1px;width:34.5px;height:37.1px;background:#5285a6;border-radius:3px"></div>
<svg style="left:14.3px;top:272.4px;width:16px;height:16px" viewBox="0 0 16 16"><rect x="1.5" y="1.5" width="13" height="13" fill="#f0f0f0"/></svg>
<svg style="left:6.0px;top:303.2px;width:32px;height:32px" viewBox="0 0 32 32"><circle cx="16" cy="16" r="12.5" fill="none" stroke="#3fa8a0" stroke-width="2"/><path d="M16 6L26 16L16 26L6 16Z" fill="#f0f0f0"/></svg>
<svg style="left:7.5px;top:344.8px;width:14px;height:8px" viewBox="0 0 14 8"><path d="M3 7V1M8 7V1" stroke="#999" stroke-width="1.2" stroke-dasharray="2 1.5"/></svg>
<svg style="left:6.5px;top:357.8px;width:16px;height:16px" viewBox="0 0 16 16"><rect x="1.5" y="1.5" width="13" height="13" fill="#f0f0f0"/></svg>
<div style="left:4.0px;top:417.0px;width:36.0px;height:1.3px;background:#6a6a6a"></div>
<div style="left:8.5px;top:428.5px;width:28.5px;height:35.1px;border:2px solid #8c8c8c;background:#4c4c4c;border-radius:3px"></div>
<svg style="left:12.8px;top:436.0px;width:20px;height:20px" viewBox="0 0 20 20"><circle cx="10" cy="10" r="6" fill="none" stroke="#e8e8e8" stroke-width="2.4"/><path d="M10 1V19M1 10H19" stroke="#e8e8e8" stroke-width="2"/><circle cx="10" cy="10" r="2.6" fill="#4c4c4c"/></svg>
<svg style="left:8.5px;top:474.1px;width:28px;height:26px" viewBox="0 0 28 26"><rect x="2" y="3" width="10" height="9" fill="none" stroke="#d0d0d0" stroke-width="1.6"/><rect x="2" y="14" width="10" height="9" fill="none" stroke="#d0d0d0" stroke-width="1.6"/><rect x="14" y="3" width="12" height="20" fill="#c8c8c8"/></svg>
<svg style="left:8.5px;top:516.7px;width:28px;height:26px" viewBox="0 0 28 26"><rect x="2" y="3" width="11" height="20" fill="none" stroke="#d0d0d0" stroke-width="1.6"/><rect x="15" y="3" width="11" height="20" fill="none" stroke="#d0d0d0" stroke-width="1.6"/></svg>
<svg style="left:8.5px;top:549.3px;width:28px;height:26px" viewBox="0 0 28 26"><rect x="2" y="3" width="24" height="9" fill="#c8c8c8"/><rect x="2" y="14" width="24" height="9" fill="none" stroke="#d0d0d0" stroke-width="1.6"/></svg>
<svg style="left:8.5px;top:591.9px;width:28px;height:26px" viewBox="0 0 28 26"><rect x="2" y="3" width="8" height="20" fill="none" stroke="#d0d0d0" stroke-width="1.6"/><path d="M13 5H26M13 9H26M13 13H26M13 17H26M13 21H26" stroke="#c8c8c8" stroke-width="1.6"/></svg>
<svg style="left:8.5px;top:625.0px;width:28px;height:26px" viewBox="0 0 28 26"><rect x="2" y="3" width="10" height="20" fill="#c8c8c8"/><rect x="14" y="3" width="12" height="20" fill="none" stroke="#d0d0d0" stroke-width="1.6"/></svg>
<svg style="left:6.0px;top:905.9px;width:26px;height:34px" viewBox="0 0 26 34"><path d="M3 6L11 2V26L3 32Z" fill="#2bb6b0"/><path d="M11 2L17 12L23 2V26L17 20L11 26Z" fill="#5fe0d6"/><path d="M3 32L11 26L17 30L23 26V32Z" fill="#0f7f80"/></svg>
<svg id="vp" viewBox="18.20 67.50 601.40 308.30" preserveAspectRatio="none">
<rect x="0" y="0" width="767" height="431" fill="#a2a2a2"/>
<path d="M-14402.2 5996.1 L-1368.4 312.5 M-9109.6 5996.1 L-1242.7 304.9 M1475.6 5996.1 L-1031.6 292.2 M6768.2 5996.1 L-942.1 286.8 M12060.8 5996.1 L-861.3 281.9 M17353.4 5996.1 L-787.9 277.5 M6548.2 1713.1 L-659.8 269.8 M4018.6 1049.1 L-603.5 266.4 M3022.0 787.6 L-551.6 263.3 M2489.0 647.7 L-503.5 260.4 M1930.6 501.1 L-417.5 255.2 M1766.2 457.9 L-378.9 252.9 M1641.3 425.2 L-342.7 250.7 M1543.3 399.5 L-308.9 248.6 M1399.4 361.7 L-247.2 244.9 M1345.0 347.4 L-219.0 243.2 M1298.8 335.3 L-192.4 241.6 M1259.0 324.8 L-167.3 240.1 M1194.1 307.8 L-120.9 237.3 M1167.3 300.7 L-99.5 236.0 M22866.7 5996.1 L1167.3 300.7 M20397.9 5996.1 L1108.3 297.7 M17929.2 5996.1 L1052.4 294.9 M15460.4 5996.1 L999.2 292.2 M10522.9 5996.1 L900.5 287.1 M8054.1 5996.1 L854.6 284.8 M5585.4 5996.1 L810.7 282.5 M3116.6 5996.1 L768.8 280.4 M-1820.9 5996.1 L690.4 276.4 M-4289.7 5996.1 L653.6 274.5 M-6758.4 5996.1 L618.3 272.7 M-9227.2 5996.1 L584.5 271.0 M-14164.7 5996.1 L520.6 267.7 M-7042.8 2786.9 L490.5 266.2 M-4780.3 1800.3 L461.5 264.7 M-3762.2 1356.4 L433.5 263.3 M-2809.8 941.1 L380.6 260.5 M-2548.9 827.3 L355.5 259.3 M-2356.3 743.3 L331.2 258.0 M-2208.3 678.8 L307.7 256.8 M-1995.8 586.1 L263.1 254.5 M-1917.0 551.7 L241.8 253.5 M-1850.6 522.8 L221.2 252.4 M-1794.0 498.1 L201.3 251.4 M-1702.4 458.2 L163.1 249.4 M-1664.9 441.8 L144.9 248.5 M-1631.6 427.3 L127.2 247.6 M-1601.9 414.4 L110.0 246.7 M-1551.2 392.2 L77.0 245.0 M-1529.3 382.7 L61.2 244.2 M-1509.4 374.0 L45.8 243.4 M-1491.2 366.1 L30.9 242.7 M-1458.9 352.0 L2.1 241.2 M-1444.7 345.8 L-11.7 240.5 M-1431.4 340.0 L-25.2 239.8 M-1419.1 334.6 L-38.4 239.1 M-1396.8 324.9 L-63.7 237.8 M-1386.7 320.5 L-75.9 237.2 M-1377.3 316.4 L-87.8 236.6 M-1368.4 312.5 L-99.5 236.0" stroke="#626262" stroke-width="0.6" fill="none"/>
<path d="M-3817.0 5996.1 L-1131.1 298.2 M22646.0 5996.1 L-721.0 273.5 M1464.4 378.7 L-277.1 246.7 M1224.4 315.7 L-143.5 238.7 M12991.7 5996.1 L948.7 289.6 M647.9 5996.1 L728.8 278.3 M-3183.3 1103.9 L406.6 261.9 M-2091.0 627.6 L285.1 255.7 M-1745.1 476.8 L181.9 250.4 M-1575.3 402.7 L93.3 245.9 M-1474.4 358.7 L16.3 241.9 M-1407.6 329.6 L-51.2 238.5" stroke="#4c4c4c" stroke-width="0.7" fill="none"/>
<path d="M2157.1 560.6 L-459.0 257.7 M-11696.0 5996.1 L551.9 269.3" stroke="#2e2e2e" stroke-width="0.8" fill="none"/>
<path d="M505.4 236.4 L505.6 235.3 L505.7 234.3 L505.8 233.2 L506.0 232.1 L506.1 230.9 L506.2 229.8 L506.3 228.6 L506.3 227.4 L506.4 226.2 L506.5 224.9 L506.5 223.7 L506.6 222.5 L506.6 221.2 L506.6 220.0 L506.7 218.7 L506.7 217.5 L506.7 216.3 L506.7 215.1 L506.6 213.8 L506.6 212.7 L506.6 211.5 L506.5 210.3 L506.5 209.2 L506.4 208.1 L506.3 207.1 L506.2 206.0 L506.1 205.0 M491.3 264.8 L491.7 263.7 L492.0 262.6 L492.4 261.3 L492.8 260.0 L493.2 258.6 L493.5 257.1 L493.9 255.5 L494.2 253.9 L494.5 252.2 L494.8 250.4 L495.1 248.6 L495.4 246.7 L495.6 244.7 L495.9 242.7 L496.1 240.7 L496.3 238.6 L496.5 236.5 L496.7 234.3 L496.8 232.1 L497.0 229.9 L497.1 227.7 L497.2 225.5 L497.3 223.2 L497.4 221.0 L497.4 218.7 L497.5 216.5 L497.5 214.2 L497.5 212.0 L497.4 209.8 L497.4 207.6 L497.3 205.5 L497.2 203.3 L497.1 201.2 L497.0 199.2 L496.9 197.2 L496.7 195.2 L496.5 193.3 L496.3 191.5 L496.1 189.7 L495.9 187.9 L495.7 186.3 L495.4 184.7 L495.1 183.2 L494.8 181.8 L494.5 180.4 L494.2 179.2 L493.9 178.0 L493.5 176.9 L493.2 176.0 M476.9 285.8 L477.5 284.7 L478.1 283.5 L478.8 282.1 L479.4 280.5 L480.0 278.9 L480.5 277.1 L481.1 275.2 L481.6 273.2 L482.2 271.1 L482.7 268.9 L483.2 266.5 L483.6 264.1 L484.1 261.6 L484.5 259.0 L484.9 256.4 L485.3 253.7 L485.7 250.9 L486.0 248.0 L486.3 245.1 L486.6 242.2 L486.8 239.2 L487.1 236.2 L487.3 233.1 L487.4 230.1 L487.6 227.0 L487.7 223.9 L487.8 220.8 L487.9 217.6 L487.9 214.5 L487.9 211.4 L487.9 208.4 L487.9 205.3 L487.8 202.3 L487.7 199.3 L487.6 196.3 L487.4 193.4 L487.2 190.5 L487.0 187.7 L486.8 185.0 L486.5 182.3 L486.2 179.7 L485.9 177.2 L485.6 174.8 L485.2 172.4 L484.8 170.2 L484.4 168.0 L483.9 166.0 L483.5 164.1 L483.0 162.3 L482.5 160.6 L481.9 159.0 L481.4 157.6 L480.8 156.3 L480.3 155.2 L479.7 154.1 M461.7 305.8 L462.6 304.7 L463.5 303.3 L464.4 301.8 L465.2 300.2 L466.1 298.3 L466.9 296.3 L467.7 294.1 L468.5 291.8 L469.3 289.4 L470.0 286.8 L470.7 284.0 L471.4 281.2 L472.1 278.2 L472.7 275.1 L473.3 272.0 L473.9 268.7 L474.4 265.3 L474.9 261.9 L475.4 258.4 L475.8 254.8 L476.2 251.1 L476.6 247.4 L476.9 243.7 L477.2 239.9 L477.5 236.0 L477.7 232.2 L477.9 228.3 L478.1 224.4 L478.2 220.5 L478.3 216.6 L478.3 212.7 L478.3 208.8 L478.3 205.0 L478.2 201.1 L478.1 197.3 L478.0 193.6 L477.8 189.8 L477.6 186.2 L477.3 182.6 L477.0 179.0 L476.7 175.6 L476.3 172.2 L476.0 168.9 L475.5 165.7 L475.0 162.5 L474.5 159.5 L474.0 156.7 L473.4 153.9 L472.8 151.3 L472.2 148.8 L471.5 146.4 L470.8 144.2 L470.1 142.1 L469.4 140.2 L468.6 138.5 L467.8 137.0 L467.0 135.6 L466.1 134.4 L465.2 133.4 M443.0 324.2 L444.2 323.2 L445.4 322.0 L446.6 320.6 L447.7 318.9 L448.9 317.0 L450.0 314.9 L451.1 312.6 L452.2 310.2 L453.2 307.5 L454.2 304.7 L455.2 301.7 L456.1 298.6 L457.0 295.3 L457.9 291.9 L458.7 288.4 L459.5 284.7 L460.3 280.9 L461.0 277.0 L461.6 273.0 L462.3 268.9 L462.9 264.8 L463.4 260.5 L463.9 256.2 L464.4 251.9 L464.8 247.4 L465.2 243.0 L465.5 238.5 L465.8 233.9 L466.0 229.4 L466.2 224.8 L466.3 220.2 L466.4 215.6 L466.5 211.1 L466.5 206.5 L466.4 202.0 L466.3 197.4 L466.2 193.0 L466.0 188.5 L465.8 184.1 L465.5 179.8 L465.2 175.5 L464.8 171.3 L464.4 167.2 L463.9 163.2 L463.4 159.3 L462.8 155.4 L462.2 151.7 L461.6 148.1 L460.9 144.7 L460.1 141.3 L459.4 138.2 L458.5 135.1 L457.7 132.3 L456.8 129.6 L455.8 127.0 L454.9 124.7 L453.9 122.6 L452.8 120.6 L451.7 118.9 L450.6 117.4 L449.5 116.1 L448.3 115.0 L447.2 114.2 M421.1 337.5 L422.6 336.5 L424.1 335.3 L425.6 333.9 L427.1 332.2 L428.5 330.2 L429.9 328.0 L431.3 325.7 L432.6 323.0 L433.9 320.2 L435.2 317.2 L436.4 314.0 L437.6 310.7 L438.7 307.1 L439.8 303.4 L440.8 299.6 L441.9 295.6 L442.8 291.5 L443.7 287.3 L444.6 282.9 L445.4 278.5 L446.1 273.9 L446.8 269.3 L447.5 264.6 L448.1 259.8 L448.6 254.9 L449.1 250.0 L449.6 245.1 L449.9 240.1 L450.3 235.0 L450.5 230.0 L450.8 224.9 L450.9 219.9 L451.0 214.8 L451.1 209.7 L451.1 204.6 L451.0 199.6 L450.9 194.6 L450.7 189.6 L450.4 184.7 L450.1 179.8 L449.8 175.0 L449.4 170.2 L448.9 165.6 L448.4 161.0 L447.8 156.5 L447.2 152.1 L446.5 147.8 L445.7 143.7 L444.9 139.6 L444.1 135.7 L443.2 132.0 L442.2 128.4 L441.2 124.9 L440.1 121.7 L439.0 118.6 L437.9 115.7 L436.7 113.0 L435.4 110.6 L434.1 108.3 L432.8 106.3 L431.4 104.5 L430.0 103.0 L428.6 101.7 L427.1 100.7 L425.6 99.9 L424.1 99.5 M419.6 338.1 L421.1 337.5 M398.0 344.0 L399.8 343.0 L401.6 341.6 L403.3 340.0 L405.0 338.2 L406.7 336.1 L408.3 333.8 L409.9 331.2 L411.4 328.4 L412.9 325.4 L414.4 322.2 L415.8 318.8 L417.2 315.2 L418.5 311.4 L419.8 307.5 L421.0 303.4 L422.1 299.2 L423.2 294.9 L424.3 290.4 L425.3 285.8 L426.2 281.1 L427.0 276.3 L427.9 271.4 L428.6 266.5 L429.3 261.4 L429.9 256.3 L430.4 251.1 L430.9 245.9 L431.4 240.7 L431.7 235.4 L432.0 230.1 L432.3 224.7 L432.4 219.4 L432.5 214.1 L432.6 208.7 L432.5 203.4 L432.4 198.1 L432.3 192.8 L432.1 187.6 L431.8 182.4 L431.4 177.3 L431.0 172.2 L430.5 167.2 L429.9 162.2 L429.3 157.4 L428.6 152.6 L427.9 148.0 L427.1 143.5 L426.2 139.1 L425.3 134.8 L424.3 130.6 L423.2 126.7 L422.1 122.8 L420.9 119.2 L419.6 115.7 L418.3 112.4 L417.0 109.3 L415.6 106.4 L414.1 103.8 L412.6 101.3 L411.0 99.2 L409.4 97.2 L407.8 95.5 L406.1 94.1 L404.4 93.0 L402.6 92.2 L400.8 91.6 L399.0 91.4 M394.4 345.2 L396.2 344.7 L398.0 344.0 M374.3 344.7 L376.2 343.6 L378.2 342.3 L380.1 340.7 L382.0 338.8 L383.8 336.7 L385.6 334.3 L387.4 331.7 L389.1 328.9 L390.8 325.8 L392.4 322.6 L394.0 319.2 L395.5 315.5 L396.9 311.8 L398.3 307.8 L399.7 303.7 L400.9 299.4 L402.1 295.0 L403.3 290.5 L404.4 285.9 L405.4 281.2 L406.3 276.3 L407.2 271.4 L408.0 266.4 L408.7 261.3 L409.4 256.1 L410.0 250.9 L410.5 245.7 L411.0 240.4 L411.4 235.0 L411.7 229.7 L411.9 224.3 L412.1 218.9 L412.2 213.5 L412.2 208.1 L412.2 202.8 L412.1 197.4 L411.9 192.1 L411.6 186.8 L411.3 181.6 L410.9 176.4 L410.4 171.3 L409.8 166.2 L409.2 161.2 L408.5 156.3 L407.7 151.5 L406.9 146.8 L406.0 142.3 L405.0 137.8 L403.9 133.5 L402.8 129.3 L401.6 125.3 L400.4 121.4 L399.0 117.7 L397.6 114.2 L396.2 110.8 L394.7 107.7 L393.1 104.8 L391.5 102.1 L389.8 99.6 L388.0 97.4 L386.2 95.4 L384.4 93.7 L382.5 92.3 L380.6 91.1 L378.6 90.3 L376.6 89.7 L374.6 89.5 L372.6 89.5 M368.2 346.1 L370.2 345.9 L372.3 345.4 L374.3 344.7 M351.1 340.2 L353.2 339.2 L355.3 338.0 L357.3 336.4 L359.3 334.7 L361.2 332.6 L363.1 330.3 L365.0 327.8 L366.8 325.1 L368.6 322.2 L370.3 319.1 L371.9 315.8 L373.5 312.3 L375.0 308.6 L376.5 304.8 L377.9 300.8 L379.2 296.7 L380.5 292.4 L381.7 288.0 L382.9 283.5 L383.9 278.9 L384.9 274.2 L385.8 269.4 L386.7 264.6 L387.5 259.6 L388.2 254.6 L388.8 249.5 L389.3 244.4 L389.8 239.3 L390.2 234.1 L390.5 228.9 L390.8 223.6 L391.0 218.4 L391.0 213.1 L391.1 207.9 L391.0 202.7 L390.9 197.5 L390.6 192.3 L390.4 187.1 L390.0 182.0 L389.5 177.0 L389.0 172.0 L388.4 167.1 L387.7 162.3 L387.0 157.5 L386.1 152.9 L385.2 148.3 L384.2 143.8 L383.2 139.5 L382.0 135.3 L380.8 131.3 L379.6 127.4 L378.2 123.6 L376.8 120.0 L375.3 116.6 L373.8 113.4 L372.1 110.4 L370.5 107.6 L368.7 105.0 L366.9 102.6 L365.1 100.5 L363.2 98.6 L361.2 96.9 L359.2 95.6 L357.2 94.5 L355.1 93.7 L353.0 93.1 L350.9 92.9 L348.7 93.0 L346.6 93.4 L344.4 94.1 M340.4 340.8 L342.6 341.3 L344.7 341.5 L346.9 341.3 L349.0 340.9 L351.1 340.2 M329.5 331.2 L331.6 330.4 L333.7 329.2 L335.7 327.9 L337.7 326.3 L339.7 324.4 L341.6 322.3 L343.4 320.1 L345.3 317.6 L347.0 314.9 L348.8 312.0 L350.4 308.9 L352.0 305.7 L353.6 302.3 L355.0 298.7 L356.5 295.0 L357.8 291.2 L359.1 287.2 L360.3 283.1 L361.4 278.9 L362.5 274.6 L363.5 270.2 L364.4 265.8 L365.3 261.2 L366.1 256.6 L366.8 251.9 L367.4 247.1 L368.0 242.3 L368.4 237.5 L368.8 232.6 L369.2 227.7 L369.4 222.8 L369.6 217.9 L369.6 212.9 L369.6 208.0 L369.6 203.1 L369.4 198.2 L369.2 193.3 L368.9 188.5 L368.5 183.7 L368.0 179.0 L367.5 174.3 L366.8 169.7 L366.1 165.2 L365.4 160.7 L364.5 156.4 L363.6 152.1 L362.5 148.0 L361.5 143.9 L360.3 140.0 L359.1 136.3 L357.8 132.6 L356.4 129.1 L354.9 125.8 L353.4 122.7 L351.9 119.7 L350.2 116.9 L348.5 114.3 L346.8 111.9 L344.9 109.8 L343.1 107.8 L341.2 106.1 L339.2 104.6 L337.2 103.4 L335.1 102.5 L333.1 101.8 L330.9 101.3 L328.8 101.2 L326.7 101.3 L324.5 101.7 L322.3 102.4 L320.1 103.5 M316.7 330.6 L318.8 331.4 L321.0 331.9 L323.1 332.2 L325.3 332.1 L327.4 331.8 L329.5 331.2 M310.2 318.2 L312.2 317.5 L314.1 316.6 L316.0 315.5 L317.9 314.1 L319.8 312.5 L321.6 310.7 L323.4 308.7 L325.1 306.6 L326.8 304.2 L328.5 301.7 L330.1 299.0 L331.6 296.1 L333.1 293.1 L334.5 290.0 L335.9 286.7 L337.2 283.3 L338.4 279.7 L339.6 276.1 L340.7 272.3 L341.7 268.5 L342.7 264.5 L343.6 260.5 L344.4 256.4 L345.1 252.2 L345.8 248.0 L346.4 243.7 L346.9 239.4 L347.4 235.0 L347.8 230.6 L348.1 226.2 L348.3 221.8 L348.4 217.3 L348.5 212.9 L348.5 208.5 L348.4 204.0 L348.3 199.6 L348.0 195.2 L347.7 190.9 L347.3 186.6 L346.8 182.3 L346.3 178.1 L345.7 174.0 L345.0 169.9 L344.2 165.9 L343.4 162.0 L342.5 158.2 L341.5 154.5 L340.4 150.9 L339.3 147.4 L338.1 144.0 L336.8 140.8 L335.5 137.7 L334.1 134.8 L332.7 132.0 L331.1 129.4 L329.6 126.9 L327.9 124.7 L326.2 122.6 L324.5 120.7 L322.7 119.1 L320.9 117.6 L319.0 116.4 L317.1 115.3 L315.1 114.5 L313.2 114.0 L311.2 113.7 L309.2 113.6 L307.1 113.8 L305.1 114.3 L303.0 115.0 L301.0 116.0 L298.9 117.2 L296.9 118.7 L294.8 120.5 M292.2 313.2 L294.1 314.8 L296.1 316.1 L298.1 317.2 L300.1 318.0 L302.1 318.5 L304.2 318.8 L306.2 318.9 L308.2 318.7 L310.2 318.2 M293.7 301.8 L295.4 301.3 L297.2 300.6 L298.9 299.7 L300.6 298.6 L302.2 297.4 L303.9 295.9 L305.5 294.3 L307.0 292.5 L308.5 290.6 L310.0 288.5 L311.5 286.3 L312.8 283.9 L314.2 281.4 L315.5 278.7 L316.7 276.0 L317.9 273.1 L319.0 270.1 L320.0 267.0 L321.0 263.8 L322.0 260.6 L322.8 257.2 L323.6 253.8 L324.4 250.3 L325.1 246.7 L325.7 243.1 L326.2 239.4 L326.7 235.7 L327.1 232.0 L327.4 228.2 L327.7 224.5 L327.9 220.7 L328.0 216.8 L328.1 213.0 L328.1 209.2 L328.0 205.4 L327.8 201.6 L327.6 197.9 L327.3 194.2 L327.0 190.5 L326.5 186.8 L326.0 183.3 L325.5 179.7 L324.8 176.3 L324.1 172.9 L323.3 169.5 L322.5 166.3 L321.6 163.2 L320.6 160.1 L319.6 157.2 L318.5 154.4 L317.3 151.6 L316.1 149.1 L314.9 146.6 L313.5 144.3 L312.2 142.1 L310.7 140.1 L309.3 138.3 L307.8 136.6 L306.2 135.1 L304.6 133.7 L303.0 132.5 L301.3 131.6 L299.6 130.8 L297.9 130.2 L296.1 129.8 L294.3 129.6 L292.5 129.7 L290.8 129.9 L289.0 130.4 L287.2 131.1 L285.4 132.0 L283.6 133.1 L281.8 134.4 L280.0 136.0 L278.3 137.8 L276.6 139.8 L274.9 142.0 M272.9 291.2 L274.5 293.3 L276.2 295.1 L277.9 296.8 L279.6 298.2 L281.3 299.4 L283.1 300.4 L284.8 301.2 L286.6 301.7 L288.4 302.0 L290.2 302.2 L291.9 302.1 L293.7 301.8 M280.5 282.6 L281.9 282.3 L283.4 281.8 L284.8 281.2 L286.1 280.4 L287.5 279.5 L288.8 278.4 L290.1 277.2 L291.4 275.9 L292.7 274.4 L293.9 272.8 L295.1 271.1 L296.2 269.3 L297.3 267.3 L298.4 265.3 L299.4 263.1 L300.4 260.9 L301.3 258.6 L302.2 256.1 L303.0 253.6 L303.8 251.1 L304.5 248.4 L305.2 245.7 L305.8 242.9 L306.4 240.1 L306.9 237.3 L307.4 234.4 L307.8 231.4 L308.1 228.4 L308.4 225.4 L308.6 222.4 L308.8 219.4 L308.9 216.4 L308.9 213.3 L308.9 210.3 L308.8 207.3 L308.7 204.3 L308.5 201.3 L308.2 198.3 L307.9 195.4 L307.5 192.5 L307.1 189.7 L306.6 186.9 L306.1 184.1 L305.5 181.5 L304.8 178.8 L304.1 176.3 L303.4 173.8 L302.5 171.5 L301.7 169.2 L300.8 167.0 L299.8 164.9 L298.8 162.9 L297.7 161.0 L296.6 159.2 L295.5 157.6 L294.3 156.0 L293.1 154.6 L291.9 153.4 L290.6 152.2 L289.3 151.2 L287.9 150.4 L286.6 149.7 L285.2 149.2 L283.8 148.8 L282.3 148.6 L280.9 148.5 L279.5 148.6 L278.0 148.9 L276.6 149.3 L275.1 149.9 L273.7 150.7 L272.3 151.6 L270.9 152.7 L269.5 154.0 L268.1 155.4 L266.7 157.0 L265.4 158.8 L264.1 160.7 L262.9 162.8 L261.7 165.0 L260.5 167.3 L259.4 169.8 L258.3 172.5 L257.3 175.2 M256.3 257.7 L257.2 260.4 L258.2 262.9 L259.3 265.4 L260.4 267.6 L261.5 269.7 L262.7 271.7 L263.9 273.5 L265.2 275.2 L266.5 276.7 L267.8 278.0 L269.2 279.2 L270.6 280.2 L272.0 281.0 L273.4 281.7 L274.8 282.2 L276.2 282.5 L277.7 282.7 L279.1 282.7 L280.5 282.6 M271.1 261.3 L272.1 261.1 L273.0 260.8 L274.0 260.5 L275.0 260.0 L276.0 259.4 L276.9 258.7 L277.9 258.0 L278.8 257.1 L279.7 256.1 L280.5 255.1 L281.4 253.9 L282.2 252.7 L283.0 251.4 L283.8 250.0 L284.5 248.5 L285.2 247.0 L285.9 245.4 L286.6 243.7 L287.2 242.0 L287.7 240.2 L288.3 238.4 L288.8 236.5 L289.2 234.5 L289.6 232.6 L290.0 230.6 L290.3 228.6 L290.6 226.5 L290.9 224.4 L291.1 222.3 L291.2 220.2 L291.4 218.1 L291.4 215.9 L291.5 213.8 L291.4 211.7 L291.4 209.6 L291.3 207.5 L291.1 205.4 L290.9 203.3 L290.7 201.3 L290.4 199.2 L290.1 197.3 L289.8 195.3 L289.4 193.4 L288.9 191.5 L288.4 189.7 L287.9 188.0 L287.3 186.3 L286.7 184.6 L286.1 183.1 L285.4 181.6 L284.7 180.1 L284.0 178.8 L283.2 177.5 L282.4 176.3 L281.6 175.2 L280.8 174.2 L279.9 173.3 L279.0 172.5 L278.1 171.7 L277.2 171.1 L276.2 170.6 L275.2 170.2 L274.2 169.9 L273.3 169.6 L272.3 169.6 L271.3 169.6 L270.2 169.7 L269.2 169.9 L268.2 170.3 L267.2 170.8 L266.2 171.3 L265.2 172.0 L264.3 172.8 L263.3 173.7 L262.4 174.7 L261.4 175.9 L260.5 177.1 L259.6 178.4 L258.8 179.9 L258.0 181.4 L257.2 183.0 L256.4 184.7 L255.7 186.5 L255.0 188.3 L254.4 190.3 L253.8 192.3 L253.3 194.4 L252.8 196.5 L252.3 198.7 L251.9 200.9 L251.6 203.2 L251.3 205.5 L251.0 207.8 L250.8 210.2 L250.7 212.6 L250.6 214.9 L250.6 217.3 L250.6 219.7 L250.7 222.1 L250.8 224.4 L251.0 226.7 L251.2 229.0 L251.5 231.3 L251.9 233.5 L252.3 235.6 L252.7 237.7 L253.2 239.8 L253.8 241.7 L254.4 243.6 L255.0 245.4 L255.7 247.2 L256.4 248.8 L257.1 250.4 L257.9 251.8 L258.7 253.2 L259.5 254.5 L260.4 255.7 L261.3 256.7 L262.2 257.7 L263.2 258.5 L264.1 259.2 L265.1 259.9 L266.1 260.4 L267.0 260.8 L268.0 261.1 L269.0 261.2 L270.0 261.3 L271.1 261.3 M265.5 238.6 L266.0 238.5 L266.5 238.4 L267.0 238.3 L267.6 238.1 L268.1 237.8 L268.6 237.5 L269.0 237.1 L269.5 236.7 L270.0 236.2 L270.5 235.7 L270.9 235.1 L271.3 234.5 L271.8 233.9 L272.2 233.2 L272.6 232.4 L273.0 231.6 L273.3 230.8 L273.7 230.0 L274.0 229.1 L274.3 228.2 L274.6 227.2 L274.8 226.3 L275.1 225.3 L275.3 224.2 L275.5 223.2 L275.7 222.1 L275.8 221.1 L276.0 220.0 L276.1 218.9 L276.2 217.8 L276.2 216.7 L276.3 215.6 L276.3 214.5 L276.3 213.4 L276.2 212.3 L276.2 211.2 L276.1 210.1 L276.0 209.0 L275.9 207.9 L275.7 206.9 L275.6 205.9 L275.4 204.8 L275.1 203.9 L274.9 202.9 L274.6 202.0 L274.4 201.1 L274.1 200.2 L273.7 199.4 L273.4 198.6 L273.0 197.8 L272.7 197.1 L272.3 196.4 L271.9 195.8 L271.4 195.2 L271.0 194.6 L270.5 194.2 L270.1 193.7 L269.6 193.3 L269.1 193.0 L268.6 192.7 L268.1 192.4 L267.6 192.3 L267.1 192.1 L266.6 192.0 L266.1 192.0 L265.6 192.1 L265.1 192.2 L264.5 192.3 L264.0 192.5 L263.5 192.8 L263.0 193.1 L262.5 193.5 L262.0 193.9 L261.5 194.4 L261.1 194.9 L260.6 195.5 L260.1 196.2 L259.7 196.8 L259.3 197.6 L258.9 198.3 L258.5 199.2 L258.1 200.0 L257.8 200.9 L257.4 201.9 L257.1 202.8 L256.8 203.8 L256.5 204.9 L256.3 205.9 L256.1 207.0 L255.9 208.1 L255.7 209.3 L255.6 210.4 L255.4 211.6 L255.3 212.7 L255.3 213.9 L255.2 215.1 L255.2 216.2 L255.2 217.4 L255.3 218.6 L255.3 219.7 L255.4 220.9 L255.6 222.0 L255.7 223.1 L255.9 224.2 L256.1 225.3 L256.3 226.3 L256.5 227.4 L256.8 228.3 L257.1 229.3 L257.4 230.2 L257.7 231.1 L258.1 231.9 L258.4 232.7 L258.8 233.5 L259.2 234.2 L259.7 234.8 L260.1 235.4 L260.5 236.0 L261.0 236.5 L261.5 237.0 L262.0 237.4 L262.4 237.7 L262.9 238.0 L263.4 238.2 L264.0 238.4 L264.5 238.5 L265.0 238.6 L265.5 238.6 M508.0 220.2 L506.7 219.9 L505.0 219.6 L503.2 219.3 L501.3 219.1 L499.4 218.8 L497.4 218.6 L495.5 218.3 L493.5 218.1 L491.6 217.9 L489.7 217.7 L487.9 217.4 L486.0 217.2 L484.2 217.0 L482.2 216.8 L480.3 216.6 L478.3 216.4 L476.2 216.1 L473.9 215.9 L471.6 215.7 L469.1 215.5 L466.4 215.3 L463.6 215.1 L460.7 215.0 L457.6 214.8 L454.4 214.6 L451.0 214.4 L447.5 214.3 L443.9 214.1 L440.2 214.0 L436.4 213.8 L432.5 213.7 L428.6 213.6 L424.6 213.5 L420.5 213.3 L416.4 213.2 L412.2 213.2 L408.0 213.1 L403.8 213.0 L399.6 212.9 L395.3 212.8 L391.1 212.8 L386.8 212.7 L382.5 212.7 L378.2 212.7 L373.9 212.6 L369.6 212.6 L365.4 212.6 L361.1 212.6 L356.9 212.6 L352.7 212.6 L348.5 212.6 L344.3 212.6 L340.2 212.6 L336.1 212.7 L332.1 212.7 L328.1 212.8 L324.1 212.8 L320.2 212.9 L316.4 213.0 L312.6 213.1 L308.9 213.1 L305.3 213.2 L301.7 213.3 L298.2 213.4 L294.8 213.6 L291.5 213.7 L288.2 213.8 L285.1 213.9 L282.0 214.1 L279.1 214.2 L276.3 214.4 L273.6 214.6 L271.0 214.7 L268.5 214.9 L266.2 215.1 L264.0 215.3 M506.5 210.3 L504.9 208.3 L503.0 206.4 L501.1 204.6 L499.1 202.8 L497.1 201.1 L495.1 199.5 L493.2 197.8 L491.2 196.3 L489.3 194.7 L487.4 193.2 L485.5 191.7 L483.6 190.2 L481.6 188.8 L479.6 187.3 L477.6 185.9 L475.4 184.6 L473.1 183.2 L470.7 181.9 L468.2 180.7 L465.5 179.5 L462.6 178.4 L459.6 177.3 L456.5 176.4 L453.2 175.5 L449.8 174.7 L446.2 173.9 L442.5 173.3 L438.8 172.7 L434.9 172.2 L431.0 171.8 L426.9 171.5 L422.9 171.3 L418.7 171.1 L414.6 171.0 L410.4 170.9 L406.1 170.9 L401.9 171.0 L397.6 171.2 L393.3 171.4 L389.0 171.7 L384.7 172.0 L380.3 172.4 L376.0 172.9 L371.7 173.4 L367.4 174.0 L363.1 174.7 L358.9 175.4 L354.7 176.1 L350.4 177.0 L346.3 177.8 L342.1 178.8 L338.0 179.7 L334.0 180.8 L330.0 181.9 L326.0 183.0 L322.1 184.2 L318.2 185.5 L314.5 186.8 L310.7 188.1 L307.1 189.5 L303.5 190.9 L300.0 192.4 L296.6 193.9 L293.3 195.5 L290.1 197.1 L287.0 198.8 L283.9 200.5 L281.0 202.2 L278.2 204.0 L275.5 205.8 L273.0 207.6 L270.5 209.5 L268.2 211.4 L266.0 213.3 L264.0 215.3 M504.0 198.7 L502.0 195.4 L499.9 192.2 L497.8 189.1 L495.7 186.2 L493.5 183.3 L491.4 180.5 L489.3 177.7 L487.2 175.0 L485.2 172.3 L483.1 169.6 L481.0 167.0 L478.9 164.4 L476.8 161.9 L474.5 159.3 L472.2 156.9 L469.7 154.5 L467.1 152.2 L464.4 150.0 L461.5 147.9 L458.5 145.9 L455.3 144.1 L452.0 142.3 L448.5 140.8 L444.9 139.4 L441.1 138.1 L437.3 137.0 L433.3 136.0 L429.3 135.2 L425.2 134.5 L421.0 134.0 L416.8 133.6 L412.5 133.3 L408.2 133.2 L403.9 133.2 L399.5 133.3 L395.1 133.6 L390.7 134.0 L386.4 134.4 L382.0 135.1 L377.6 135.8 L373.2 136.6 L368.9 137.6 L364.5 138.6 L360.2 139.8 L355.9 141.1 L351.7 142.4 L347.5 143.9 L343.3 145.5 L339.2 147.2 L335.2 148.9 L331.2 150.8 L327.2 152.8 L323.3 154.8 L319.5 157.0 L315.8 159.2 L312.1 161.5 L308.5 164.0 L305.0 166.4 L301.6 169.0 L298.3 171.7 L295.1 174.4 L292.0 177.2 L289.0 180.0 L286.1 183.0 L283.3 186.0 L280.6 189.0 L278.1 192.1 L275.7 195.3 L273.4 198.5 L271.2 201.8 L269.2 205.1 L267.3 208.5 L265.6 211.9 L264.0 215.3 M490.8 172.1 L488.4 168.4 L486.0 164.7 L483.7 161.1 L481.4 157.5 L479.0 153.9 L476.7 150.4 L474.3 146.9 L471.8 143.5 L469.3 140.1 L466.7 136.8 L463.9 133.6 L461.0 130.4 L458.0 127.4 L454.8 124.5 L451.5 121.8 L448.0 119.3 L444.3 117.0 L440.5 114.8 L436.6 112.9 L432.6 111.1 L428.4 109.6 L424.2 108.3 L419.9 107.2 L415.5 106.3 L411.0 105.5 L406.6 105.0 L402.1 104.7 L397.5 104.6 L393.0 104.6 L388.4 104.8 L383.9 105.2 L379.4 105.8 L374.9 106.5 L370.4 107.4 L365.9 108.4 L361.5 109.6 L357.1 111.0 L352.7 112.5 L348.4 114.2 L344.2 116.0 L340.0 117.9 L335.8 120.0 L331.8 122.2 L327.8 124.5 L323.9 127.0 L320.1 129.6 L316.4 132.3 L312.7 135.2 L309.2 138.1 L305.7 141.2 L302.4 144.4 L299.1 147.7 L296.0 151.1 L293.0 154.5 L290.1 158.1 L287.4 161.8 L284.7 165.5 L282.2 169.3 L279.8 173.2 L277.6 177.2 L275.5 181.2 L273.5 185.3 L271.7 189.5 L270.1 193.7 L268.5 197.9 L267.2 202.2 L266.0 206.5 L264.9 210.9 L264.0 215.3 M421.1 97.8 L416.5 96.0 L411.9 94.5 L407.2 93.2 L402.5 92.1 L397.7 91.3 L392.9 90.7 L388.1 90.3 L383.3 90.2 L378.5 90.2 L373.7 90.5 L369.0 91.0 L364.3 91.7 L359.6 92.6 L355.0 93.6 L350.4 94.9 L345.9 96.3 L341.5 97.9 L337.2 99.7 L332.9 101.7 L328.7 103.9 L324.7 106.1 L320.7 108.6 L316.8 111.2 L313.0 114.0 L309.4 116.9 L305.9 119.9 L302.4 123.1 L299.1 126.4 L296.0 129.8 L293.0 133.3 L290.1 137.0 L287.3 140.8 L284.7 144.6 L282.2 148.6 L279.9 152.6 L277.8 156.7 L275.8 160.9 L273.9 165.2 L272.2 169.6 L270.6 174.0 L269.3 178.4 L268.0 182.9 L267.0 187.5 L266.1 192.0 L265.3 196.6 L264.7 201.3 L264.3 205.9 L264.1 210.6 L264.0 215.3 M296.7 118.8 L293.4 121.7 L290.2 124.8 L287.2 127.9 L284.4 131.2 L281.7 134.5 L279.1 138.0 L276.8 141.6 L274.6 145.2 L272.6 149.0 L270.8 152.8 L269.1 156.7 L267.6 160.7 L266.3 164.7 L265.2 168.8 L264.2 172.9 L263.4 177.0 L262.8 181.2 L262.4 185.4 L262.1 189.7 L262.0 193.9 L262.1 198.2 L262.3 202.5 L262.7 206.8 L263.3 211.0 L264.0 215.3 M261.7 164.5 L260.4 167.5 L259.4 170.5 L258.5 173.6 L257.9 176.8 L257.4 179.9 L257.1 183.1 L257.0 186.3 L257.1 189.5 L257.4 192.8 L257.8 196.0 L258.5 199.2 L259.2 202.5 L260.2 205.7 L261.3 208.9 L262.6 212.1 L264.0 215.3 M252.3 194.0 L252.1 195.6 L252.1 197.2 L252.3 198.8 L252.7 200.5 L253.3 202.1 L254.0 203.8 L255.0 205.4 L256.1 207.1 L257.3 208.7 L258.8 210.4 L260.4 212.0 L262.1 213.7 L264.0 215.3 M250.0 218.0 L250.2 217.7 L250.6 217.5 L251.1 217.2 L251.9 217.0 L252.8 216.8 L253.9 216.5 L255.2 216.3 L256.7 216.1 L258.3 215.9 L260.0 215.7 L262.0 215.5 L264.0 215.3 M252.3 242.0 L252.1 239.9 L252.1 237.9 L252.3 235.8 L252.7 233.7 L253.3 231.6 L254.0 229.5 L255.0 227.4 L256.1 225.4 L257.3 223.3 L258.8 221.3 L260.4 219.3 L262.1 217.3 L264.0 215.3 M263.1 274.4 L261.7 271.1 L260.4 267.8 L259.4 264.4 L258.6 260.9 L257.9 257.5 L257.4 254.0 L257.2 250.5 L257.1 247.0 L257.2 243.4 L257.4 239.9 L257.9 236.3 L258.5 232.8 L259.2 229.2 L260.2 225.7 L261.3 222.2 L262.6 218.7 L264.0 215.3 M310.7 327.2 L306.9 324.6 L303.2 322.0 L299.6 319.1 L296.2 316.2 L293.0 313.1 L289.8 309.9 L286.9 306.5 L284.1 303.0 L281.4 299.5 L278.9 295.8 L276.6 292.0 L274.5 288.2 L272.5 284.3 L270.7 280.3 L269.0 276.2 L267.6 272.0 L266.3 267.8 L265.1 263.6 L264.2 259.3 L263.4 255.0 L262.8 250.6 L262.3 246.2 L262.1 241.8 L262.0 237.4 L262.1 233.0 L262.3 228.5 L262.7 224.1 L263.3 219.7 L264.0 215.3 M450.2 317.9 L446.7 321.1 L443.1 324.2 L439.3 327.1 L435.3 329.7 L431.3 332.2 L427.0 334.5 L422.7 336.5 L418.3 338.2 L413.8 339.8 L409.2 341.0 L404.6 342.1 L399.9 342.9 L395.2 343.4 L390.5 343.8 L385.8 343.9 L381.1 343.8 L376.4 343.5 L371.7 343.1 L367.0 342.4 L362.4 341.5 L357.9 340.4 L353.3 339.2 L348.9 337.7 L344.5 336.1 L340.2 334.3 L335.9 332.4 L331.7 330.3 L327.7 328.0 L323.7 325.6 L319.8 323.0 L316.0 320.3 L312.3 317.5 L308.7 314.5 L305.2 311.3 L301.9 308.1 L298.7 304.7 L295.6 301.2 L292.6 297.6 L289.7 293.9 L287.0 290.1 L284.5 286.2 L282.0 282.2 L279.8 278.2 L277.6 274.0 L275.6 269.8 L273.8 265.5 L272.1 261.1 L270.6 256.7 L269.2 252.2 L268.0 247.7 L266.9 243.1 L266.0 238.5 L265.3 233.9 L264.7 229.3 L264.3 224.6 L264.1 220.0 L264.0 215.3 M494.2 260.1 L491.7 263.6 L489.2 267.1 L486.7 270.5 L484.2 273.9 L481.8 277.2 L479.4 280.4 L477.0 283.7 L474.6 286.8 L472.1 290.0 L469.6 293.1 L467.0 296.2 L464.3 299.1 L461.5 302.0 L458.5 304.8 L455.4 307.5 L452.2 310.0 L448.9 312.4 L445.3 314.6 L441.7 316.6 L437.9 318.4 L434.0 320.0 L430.0 321.5 L425.8 322.7 L421.6 323.7 L417.4 324.5 L413.0 325.2 L408.7 325.6 L404.3 325.9 L399.8 326.0 L395.4 325.9 L390.9 325.6 L386.4 325.2 L382.0 324.6 L377.5 323.9 L373.1 323.0 L368.7 322.0 L364.3 320.8 L359.9 319.5 L355.6 318.0 L351.4 316.4 L347.1 314.7 L343.0 312.8 L338.9 310.8 L334.8 308.7 L330.9 306.4 L327.0 304.1 L323.1 301.6 L319.4 298.9 L315.7 296.2 L312.1 293.4 L308.6 290.5 L305.3 287.4 L302.0 284.3 L298.8 281.0 L295.7 277.7 L292.7 274.3 L289.9 270.8 L287.2 267.2 L284.6 263.6 L282.1 259.8 L279.7 256.0 L277.5 252.2 L275.4 248.3 L273.5 244.3 L271.7 240.3 L270.0 236.2 L268.5 232.1 L267.2 227.9 L266.0 223.7 L264.9 219.5 L264.0 215.3 M503.2 241.3 L501.2 244.1 L499.0 246.9 L496.8 249.5 L494.5 252.1 L492.3 254.6 L490.1 257.0 L487.9 259.3 L485.8 261.7 L483.7 264.0 L481.6 266.2 L479.4 268.5 L477.2 270.6 L475.0 272.8 L472.7 274.9 L470.3 277.0 L467.8 279.0 L465.2 280.9 L462.5 282.7 L459.6 284.4 L456.5 286.1 L453.3 287.5 L450.0 288.9 L446.5 290.1 L442.9 291.2 L439.1 292.2 L435.3 293.0 L431.4 293.6 L427.4 294.2 L423.3 294.6 L419.2 294.9 L415.0 295.0 L410.8 295.0 L406.5 294.9 L402.2 294.7 L397.9 294.4 L393.6 294.0 L389.3 293.5 L384.9 292.9 L380.6 292.1 L376.3 291.3 L372.0 290.3 L367.7 289.3 L363.4 288.2 L359.2 287.0 L355.0 285.6 L350.8 284.2 L346.6 282.7 L342.5 281.2 L338.5 279.5 L334.5 277.7 L330.5 275.9 L326.6 274.0 L322.8 272.0 L319.0 269.9 L315.3 267.7 L311.7 265.5 L308.2 263.2 L304.7 260.8 L301.4 258.4 L298.1 255.9 L294.9 253.3 L291.8 250.7 L288.8 248.0 L286.0 245.3 L283.2 242.5 L280.5 239.6 L278.0 236.7 L275.6 233.8 L273.3 230.8 L271.2 227.7 L269.2 224.7 L267.3 221.6 L265.6 218.4 L264.0 215.3 M506.2 229.7 L504.5 231.1 L502.6 232.5 L500.6 233.8 L498.6 235.1 L496.5 236.3 L494.5 237.5 L492.5 238.7 L490.5 239.8 L488.5 240.9 L486.6 242.0 L484.7 243.1 L482.7 244.1 L480.7 245.2 L478.7 246.2 L476.6 247.2 L474.4 248.1 L472.1 249.1 L469.7 249.9 L467.1 250.8 L464.4 251.6 L461.6 252.3 L458.5 253.0 L455.4 253.6 L452.1 254.1 L448.7 254.6 L445.1 255.0 L441.5 255.3 L437.7 255.6 L433.9 255.8 L429.9 256.0 L425.9 256.0 L421.9 256.1 L417.8 256.0 L413.6 255.9 L409.4 255.8 L405.2 255.6 L401.0 255.3 L396.7 255.0 L392.5 254.7 L388.2 254.3 L383.9 253.8 L379.6 253.3 L375.4 252.8 L371.1 252.2 L366.8 251.6 L362.6 250.9 L358.4 250.1 L354.2 249.4 L350.0 248.6 L345.8 247.7 L341.7 246.8 L337.7 245.9 L333.6 244.9 L329.6 243.9 L325.7 242.9 L321.8 241.8 L318.0 240.7 L314.2 239.5 L310.6 238.3 L306.9 237.1 L303.4 235.8 L299.9 234.5 L296.5 233.2 L293.2 231.8 L290.0 230.4 L286.9 229.0 L283.9 227.6 L281.0 226.1 L278.2 224.6 L275.5 223.1 L273.0 221.6 L270.5 220.0 L268.2 218.5 L266.0 216.9 L264.0 215.3" stroke="#23236e" stroke-width="0.7" fill="none" stroke-linejoin="round" opacity="0.85"/>
<path d="M501.8 247.2 L502.0 247.2 L502.2 247.0 L502.4 246.9 L502.6 246.6 L502.9 246.3 L503.1 245.9 L503.3 245.5 L503.5 245.0 L503.7 244.5 L503.9 243.9 L504.1 243.2 L504.3 242.5 L504.4 241.8 L504.6 241.0 L504.8 240.1 L505.0 239.3 L505.1 238.3 L505.3 237.4 L505.4 236.4 M506.1 205.0 L506.0 204.0 L505.9 203.1 L505.8 202.2 L505.7 201.4 L505.5 200.6 L505.4 199.8 L505.2 199.1 L505.1 198.5 L504.9 197.8 L504.7 197.3 L504.5 196.8 L504.4 196.4 L504.2 196.0 L504.0 195.7 L503.8 195.4 L503.6 195.2 L503.4 195.1 L503.2 195.0 L503.0 195.0 L502.7 195.0 L502.5 195.1 L502.3 195.3 L502.1 195.5 L501.9 195.8 L501.7 196.2 L501.5 196.6 L501.3 197.1 L501.0 197.7 L500.8 198.3 L500.6 198.9 L500.4 199.7 L500.2 200.4 L500.1 201.3 L499.9 202.1 L499.7 203.1 L499.5 204.0 L499.4 205.1 L499.2 206.1 L499.1 207.2 L498.9 208.3 L498.8 209.5 L498.7 210.7 L498.6 211.9 L498.5 213.2 L498.4 214.5 L498.3 215.7 L498.2 217.0 L498.2 218.4 L498.1 219.7 L498.1 221.0 L498.0 222.3 L498.0 223.7 L498.0 225.0 L498.0 226.3 L498.0 227.6 L498.1 228.8 L498.1 230.1 L498.1 231.3 L498.2 232.5 L498.3 233.7 L498.4 234.8 L498.4 235.9 L498.5 237.0 L498.6 238.0 L498.8 239.0 L498.9 239.9 L499.0 240.8 L499.2 241.7 L499.3 242.4 L499.5 243.2 L499.7 243.8 L499.8 244.5 L500.0 245.0 L500.2 245.5 L500.4 245.9 L500.6 246.3 L500.8 246.6 L501.0 246.9 L501.2 247.1 L501.4 247.2 L501.6 247.2 L501.8 247.2 M487.9 269.4 L488.3 269.2 L488.7 268.9 L489.2 268.5 L489.6 267.9 L490.0 267.3 L490.4 266.6 L490.8 265.7 L491.3 264.8 M493.2 176.0 L492.8 175.1 L492.4 174.3 L492.0 173.7 L491.6 173.1 L491.2 172.7 L490.8 172.4 L490.4 172.2 L490.0 172.1 L489.5 172.1 L489.1 172.2 L488.6 172.5 L488.2 172.9 L487.8 173.4 L487.3 174.0 L486.9 174.7 L486.5 175.6 L486.0 176.6 L485.6 177.7 L485.2 178.9 L484.8 180.2 L484.4 181.6 L484.0 183.1 L483.6 184.7 L483.2 186.5 L482.9 188.3 L482.5 190.2 L482.2 192.2 L481.9 194.3 L481.6 196.4 L481.3 198.6 L481.1 200.9 L480.9 203.2 L480.6 205.6 L480.5 208.0 L480.3 210.5 L480.1 213.0 L480.0 215.5 L479.9 218.0 L479.8 220.6 L479.8 223.1 L479.7 225.6 L479.7 228.1 L479.8 230.6 L479.8 233.1 L479.9 235.5 L480.0 237.9 L480.1 240.2 L480.2 242.5 L480.4 244.8 L480.5 246.9 L480.7 249.0 L481.0 251.0 L481.2 252.9 L481.5 254.7 L481.7 256.5 L482.0 258.1 L482.4 259.7 L482.7 261.1 L483.0 262.4 L483.4 263.7 L483.7 264.8 L484.1 265.8 L484.5 266.6 L484.9 267.4 L485.3 268.0 L485.7 268.5 L486.1 268.9 L486.6 269.2 L487.0 269.4 L487.4 269.4 L487.9 269.4 M473.6 289.1 L474.2 288.8 L474.9 288.3 L475.6 287.6 L476.2 286.8 L476.9 285.8 M479.7 154.1 L479.0 153.3 L478.4 152.6 L477.8 152.1 L477.1 151.7 L476.5 151.5 L475.8 151.4 L475.1 151.5 L474.4 151.8 L473.7 152.3 L473.1 152.9 L472.4 153.7 L471.7 154.7 L471.0 155.8 L470.3 157.1 L469.7 158.6 L469.0 160.3 L468.4 162.1 L467.7 164.1 L467.1 166.2 L466.5 168.5 L465.9 171.0 L465.4 173.5 L464.8 176.3 L464.3 179.1 L463.8 182.1 L463.4 185.1 L462.9 188.3 L462.5 191.6 L462.2 195.0 L461.8 198.4 L461.5 201.9 L461.3 205.5 L461.1 209.1 L460.9 212.7 L460.7 216.4 L460.6 220.1 L460.5 223.8 L460.5 227.4 L460.5 231.1 L460.5 234.7 L460.6 238.3 L460.7 241.8 L460.9 245.2 L461.1 248.6 L461.3 251.9 L461.6 255.1 L461.9 258.2 L462.2 261.2 L462.6 264.0 L463.0 266.8 L463.4 269.4 L463.9 271.8 L464.3 274.1 L464.8 276.3 L465.4 278.3 L465.9 280.2 L466.5 281.8 L467.1 283.4 L467.7 284.7 L468.3 285.9 L468.9 286.9 L469.6 287.7 L470.2 288.4 L470.9 288.9 L471.6 289.2 L472.2 289.3 L472.9 289.3 L473.6 289.1 M458.9 308.0 L459.9 307.5 L460.8 306.7 L461.7 305.8 M465.2 133.4 L464.4 132.6 L463.5 132.0 L462.5 131.7 L461.6 131.5 L460.7 131.5 L459.7 131.8 L458.7 132.3 L457.8 133.0 L456.8 133.9 L455.9 135.1 L454.9 136.5 L453.9 138.1 L453.0 139.9 L452.1 142.0 L451.1 144.3 L450.2 146.8 L449.4 149.5 L448.5 152.4 L447.7 155.5 L446.9 158.8 L446.1 162.3 L445.4 166.0 L444.7 169.8 L444.0 173.8 L443.4 178.0 L442.8 182.2 L442.3 186.6 L441.8 191.1 L441.4 195.7 L441.1 200.4 L440.7 205.1 L440.5 209.9 L440.3 214.8 L440.1 219.6 L440.0 224.4 L440.0 229.2 L440.0 234.0 L440.1 238.8 L440.2 243.5 L440.4 248.1 L440.6 252.6 L440.9 257.0 L441.3 261.3 L441.7 265.4 L442.1 269.5 L442.6 273.3 L443.2 277.0 L443.8 280.5 L444.4 283.9 L445.1 287.0 L445.8 290.0 L446.5 292.7 L447.3 295.3 L448.1 297.6 L448.9 299.7 L449.8 301.5 L450.6 303.2 L451.5 304.6 L452.4 305.8 L453.3 306.8 L454.2 307.6 L455.2 308.1 L456.1 308.4 L457.1 308.5 L458.0 308.4 L458.9 308.0 M441.8 325.0 L443.0 324.2 M447.2 114.2 L446.0 113.6 L444.7 113.3 L443.5 113.3 L442.2 113.5 L441.0 113.9 L439.7 114.7 L438.4 115.7 L437.1 117.0 L435.9 118.5 L434.6 120.4 L433.3 122.5 L432.1 124.9 L430.9 127.6 L429.7 130.5 L428.5 133.7 L427.3 137.2 L426.2 140.9 L425.2 144.9 L424.1 149.1 L423.1 153.5 L422.2 158.2 L421.3 163.0 L420.5 168.1 L419.7 173.3 L419.0 178.6 L418.4 184.1 L417.8 189.8 L417.4 195.5 L416.9 201.3 L416.6 207.2 L416.3 213.1 L416.1 219.0 L416.0 224.9 L416.0 230.8 L416.0 236.7 L416.2 242.5 L416.4 248.3 L416.6 253.9 L417.0 259.4 L417.4 264.8 L417.9 270.0 L418.5 275.1 L419.1 280.0 L419.8 284.6 L420.6 289.1 L421.4 293.4 L422.3 297.4 L423.2 301.1 L424.1 304.6 L425.2 307.9 L426.2 310.9 L427.3 313.6 L428.4 316.1 L429.6 318.2 L430.7 320.1 L431.9 321.8 L433.1 323.1 L434.3 324.2 L435.6 325.0 L436.8 325.5 L438.1 325.8 L439.3 325.8 L440.5 325.5 L441.8 325.0 M424.1 99.5 L422.6 99.3 L421.0 99.4 L419.4 99.9 L417.8 100.6 L416.2 101.6 L414.6 103.0 L413.0 104.7 L411.4 106.7 L409.9 109.0 L408.3 111.6 L406.8 114.6 L405.2 117.8 L403.8 121.4 L402.3 125.3 L400.9 129.5 L399.6 133.9 L398.3 138.7 L397.0 143.7 L395.8 149.0 L394.7 154.5 L393.7 160.2 L392.7 166.1 L391.9 172.2 L391.1 178.5 L390.4 184.9 L389.7 191.4 L389.2 198.1 L388.8 204.8 L388.5 211.5 L388.3 218.3 L388.2 225.1 L388.1 231.9 L388.2 238.6 L388.4 245.2 L388.7 251.8 L389.1 258.2 L389.5 264.5 L390.1 270.6 L390.8 276.6 L391.5 282.4 L392.3 287.9 L393.3 293.2 L394.2 298.2 L395.3 303.0 L396.4 307.5 L397.6 311.8 L398.9 315.7 L400.2 319.3 L401.5 322.7 L402.9 325.7 L404.3 328.4 L405.8 330.7 L407.3 332.8 L408.8 334.6 L410.3 336.0 L411.8 337.1 L413.4 337.9 L414.9 338.4 L416.5 338.6 L418.0 338.5 L419.6 338.1 M399.0 91.4 L397.1 91.4 L395.3 91.8 L393.4 92.6 L391.5 93.6 L389.6 95.0 L387.8 96.7 L385.9 98.8 L384.0 101.2 L382.2 104.0 L380.4 107.0 L378.6 110.5 L376.8 114.3 L375.1 118.4 L373.5 122.8 L371.9 127.5 L370.3 132.5 L368.9 137.9 L367.5 143.5 L366.2 149.3 L365.0 155.4 L363.8 161.7 L362.8 168.3 L361.9 175.0 L361.1 181.8 L360.4 188.8 L359.8 195.9 L359.3 203.1 L358.9 210.3 L358.7 217.6 L358.6 224.9 L358.6 232.1 L358.7 239.3 L358.9 246.4 L359.3 253.4 L359.8 260.3 L360.4 267.0 L361.1 273.6 L361.9 279.9 L362.8 286.1 L363.8 292.0 L364.9 297.6 L366.1 303.0 L367.4 308.1 L368.7 312.9 L370.2 317.3 L371.7 321.5 L373.2 325.3 L374.8 328.9 L376.5 332.0 L378.2 334.8 L379.9 337.3 L381.7 339.5 L383.5 341.3 L385.3 342.8 L387.1 343.9 L388.9 344.7 L390.8 345.2 L392.6 345.3 L394.4 345.2 M372.6 89.5 L370.5 89.9 L368.4 90.6 L366.3 91.7 L364.2 93.0 L362.1 94.8 L360.1 96.8 L358.0 99.3 L355.9 102.0 L353.9 105.2 L352.0 108.6 L350.0 112.4 L348.1 116.6 L346.3 121.0 L344.5 125.8 L342.8 130.9 L341.2 136.3 L339.7 141.9 L338.2 147.8 L336.9 154.0 L335.7 160.4 L334.5 167.0 L333.5 173.8 L332.6 180.7 L331.9 187.8 L331.2 194.9 L330.7 202.2 L330.3 209.5 L330.1 216.9 L330.0 224.3 L330.0 231.6 L330.1 238.9 L330.4 246.1 L330.8 253.2 L331.4 260.1 L332.1 266.9 L332.9 273.6 L333.8 280.0 L334.8 286.2 L336.0 292.2 L337.2 297.9 L338.6 303.3 L340.0 308.4 L341.5 313.3 L343.2 317.8 L344.8 322.0 L346.6 325.9 L348.4 329.4 L350.2 332.6 L352.1 335.5 L354.1 338.0 L356.1 340.2 L358.1 342.0 L360.1 343.5 L362.1 344.6 L364.1 345.4 L366.2 345.9 L368.2 346.1 M344.4 94.1 L342.2 95.2 L340.0 96.5 L337.8 98.2 L335.6 100.2 L333.4 102.6 L331.3 105.3 L329.2 108.3 L327.1 111.7 L325.1 115.4 L323.1 119.4 L321.2 123.7 L319.3 128.4 L317.6 133.3 L315.9 138.5 L314.3 143.9 L312.8 149.7 L311.4 155.6 L310.1 161.8 L309.0 168.1 L307.9 174.7 L307.0 181.4 L306.2 188.2 L305.6 195.1 L305.0 202.1 L304.7 209.2 L304.4 216.3 L304.3 223.4 L304.4 230.4 L304.5 237.4 L304.9 244.4 L305.3 251.2 L305.9 257.9 L306.6 264.5 L307.5 270.9 L308.5 277.1 L309.6 283.1 L310.8 288.9 L312.1 294.4 L313.5 299.7 L315.0 304.7 L316.6 309.4 L318.3 313.8 L320.1 317.8 L321.9 321.6 L323.8 325.1 L325.8 328.2 L327.8 331.0 L329.8 333.4 L331.9 335.6 L334.0 337.4 L336.2 338.8 L338.3 340.0 L340.4 340.8 M320.1 103.5 L317.9 104.8 L315.7 106.4 L313.6 108.4 L311.4 110.6 L309.3 113.1 L307.2 116.0 L305.2 119.2 L303.2 122.6 L301.2 126.3 L299.4 130.4 L297.6 134.7 L295.8 139.2 L294.2 144.1 L292.6 149.1 L291.2 154.4 L289.8 159.9 L288.6 165.6 L287.4 171.5 L286.4 177.5 L285.5 183.6 L284.8 189.9 L284.1 196.3 L283.6 202.7 L283.3 209.2 L283.0 215.7 L283.0 222.3 L283.0 228.8 L283.2 235.2 L283.5 241.6 L284.0 247.9 L284.6 254.1 L285.3 260.2 L286.1 266.1 L287.1 271.8 L288.2 277.3 L289.4 282.7 L290.7 287.8 L292.1 292.7 L293.6 297.3 L295.2 301.7 L296.9 305.8 L298.6 309.6 L300.4 313.1 L302.3 316.4 L304.3 319.3 L306.3 322.0 L308.3 324.3 L310.4 326.3 L312.5 328.1 L314.6 329.5 L316.7 330.6 M294.8 120.5 L292.8 122.6 L290.9 124.9 L288.9 127.4 L287.0 130.3 L285.2 133.4 L283.4 136.7 L281.7 140.3 L280.0 144.1 L278.4 148.2 L276.9 152.4 L275.5 156.9 L274.1 161.6 L272.9 166.4 L271.8 171.4 L270.7 176.6 L269.8 181.8 L269.0 187.2 L268.3 192.7 L267.7 198.3 L267.3 204.0 L267.0 209.6 L266.8 215.3 L266.7 221.0 L266.7 226.7 L266.9 232.4 L267.2 238.0 L267.7 243.5 L268.2 248.9 L268.9 254.2 L269.7 259.4 L270.5 264.5 L271.6 269.4 L272.7 274.1 L273.9 278.6 L275.2 282.9 L276.6 287.0 L278.0 290.9 L279.6 294.6 L281.2 298.0 L282.9 301.2 L284.7 304.1 L286.5 306.7 L288.3 309.1 L290.2 311.3 L292.2 313.2 M274.9 142.0 L273.3 144.4 L271.7 147.0 L270.1 149.9 L268.7 152.9 L267.2 156.1 L265.9 159.5 L264.6 163.0 L263.4 166.8 L262.2 170.6 L261.2 174.7 L260.2 178.8 L259.3 183.1 L258.5 187.5 L257.9 191.9 L257.3 196.5 L256.8 201.1 L256.4 205.7 L256.1 210.4 L256.0 215.1 L255.9 219.8 L256.0 224.5 L256.1 229.1 L256.4 233.7 L256.7 238.3 L257.2 242.8 L257.8 247.2 L258.5 251.5 L259.2 255.7 L260.1 259.7 L261.0 263.7 L262.1 267.4 L263.2 271.0 L264.4 274.5 L265.7 277.8 L267.0 280.9 L268.4 283.7 L269.9 286.4 L271.4 288.9 L272.9 291.2 M257.3 175.2 L256.4 178.1 L255.5 181.1 L254.7 184.2 L253.9 187.3 L253.3 190.6 L252.7 193.9 L252.1 197.3 L251.7 200.8 L251.3 204.3 L251.0 207.8 L250.8 211.4 L250.7 215.0 L250.6 218.5 L250.7 222.1 L250.8 225.6 L251.0 229.1 L251.3 232.6 L251.7 236.0 L252.1 239.4 L252.6 242.7 L253.2 245.9 L253.9 249.0 L254.6 252.0 L255.4 254.9 L256.3 257.7 M510.1 221.3 L510.2 221.0 L509.9 220.7 L509.2 220.5 L508.0 220.2 M510.1 221.3 L510.2 219.0 L509.8 216.7 L509.1 214.5 L507.9 212.3 L506.5 210.3 M510.1 221.3 L510.0 217.3 L509.5 213.3 L508.6 209.5 L507.3 205.8 L505.8 202.2 L504.0 198.7 M510.1 221.3 L509.8 216.2 L509.0 211.1 L507.9 206.2 L506.3 201.4 L504.5 196.8 L502.5 192.3 L500.3 188.0 L497.9 183.8 L495.6 179.8 L493.2 175.9 L490.8 172.1 M510.1 221.3 L509.5 215.8 L508.4 210.4 L506.9 205.2 L505.1 200.0 L502.9 195.0 L500.6 190.1 L498.0 185.4 L495.4 180.8 L492.7 176.4 L489.9 172.1 L487.2 167.8 L484.5 163.7 L481.8 159.6 L479.1 155.5 L476.4 151.5 L473.7 147.4 L471.0 143.4 L468.2 139.5 L465.4 135.5 L462.5 131.6 L459.4 127.8 L456.3 124.1 L453.0 120.5 L449.5 117.0 L445.9 113.6 L442.1 110.4 L438.2 107.5 L434.1 104.7 L429.9 102.2 L425.5 99.9 L421.1 97.8 M510.1 221.3 L509.1 216.3 L507.7 211.4 L505.9 206.6 L503.7 201.8 L501.2 197.2 L498.5 192.6 L495.6 188.2 L492.6 183.9 L489.5 179.8 L486.4 175.7 L483.3 171.6 L480.2 167.7 L477.1 163.7 L474.1 159.8 L471.0 155.9 L467.9 152.0 L464.7 148.1 L461.5 144.3 L458.2 140.4 L454.8 136.6 L451.3 132.8 L447.7 129.1 L443.9 125.5 L439.9 122.0 L435.8 118.6 L431.5 115.5 L427.1 112.5 L422.5 109.7 L417.7 107.1 L412.9 104.8 L408.0 102.7 L403.0 100.9 L397.9 99.3 L392.8 97.9 L387.6 96.8 L382.5 96.0 L377.3 95.4 L372.2 95.0 L367.1 94.8 L362.0 94.9 L357.0 95.2 L352.0 95.7 L347.1 96.4 L342.3 97.3 L337.6 98.3 L333.0 99.6 L328.5 101.1 L324.1 102.7 L319.8 104.5 L315.6 106.5 L311.5 108.7 L307.6 111.0 L303.8 113.5 L300.2 116.1 L296.7 118.8 M510.1 221.3 L508.8 217.6 L507.1 213.9 L505.0 210.3 L502.5 206.7 L499.7 203.1 L496.6 199.7 L493.4 196.3 L490.1 193.0 L486.7 189.8 L483.2 186.6 L479.7 183.5 L476.3 180.4 L472.8 177.3 L469.4 174.2 L465.9 171.1 L462.4 168.0 L458.8 165.0 L455.2 161.9 L451.5 158.8 L447.6 155.7 L443.7 152.7 L439.5 149.7 L435.2 146.8 L430.8 143.9 L426.2 141.2 L421.4 138.6 L416.4 136.1 L411.3 133.8 L406.1 131.7 L400.8 129.8 L395.4 128.0 L389.9 126.5 L384.4 125.1 L378.9 124.0 L373.4 123.1 L367.8 122.3 L362.3 121.8 L356.9 121.5 L351.5 121.3 L346.2 121.3 L340.9 121.5 L335.8 121.9 L330.8 122.4 L325.9 123.2 L321.1 124.0 L316.4 125.1 L311.9 126.2 L307.5 127.6 L303.3 129.0 L299.2 130.6 L295.3 132.4 L291.6 134.3 L288.1 136.2 L284.7 138.3 L281.6 140.6 L278.6 142.9 L275.8 145.3 L273.2 147.8 L270.8 150.4 L268.6 153.1 L266.5 155.8 L264.7 158.7 L263.1 161.6 L261.7 164.5 M510.1 221.3 L508.6 219.4 L506.7 217.6 L504.3 215.7 L501.6 213.8 L498.6 212.0 L495.3 210.2 L491.8 208.5 L488.2 206.7 L484.5 205.1 L480.8 203.4 L477.1 201.7 L473.4 200.1 L469.7 198.5 L465.9 196.8 L462.2 195.2 L458.3 193.6 L454.5 191.9 L450.5 190.3 L446.5 188.6 L442.3 186.9 L438.0 185.3 L433.5 183.7 L428.8 182.1 L424.0 180.5 L419.0 179.0 L413.8 177.6 L408.5 176.2 L403.1 174.9 L397.5 173.7 L391.8 172.6 L386.0 171.6 L380.2 170.7 L374.4 169.9 L368.6 169.3 L362.7 168.7 L357.0 168.2 L351.2 167.9 L345.5 167.6 L340.0 167.5 L334.5 167.4 L329.1 167.5 L323.8 167.6 L318.7 167.8 L313.7 168.2 L308.9 168.6 L304.2 169.1 L299.7 169.6 L295.4 170.3 L291.3 171.0 L287.4 171.8 L283.6 172.7 L280.1 173.7 L276.7 174.7 L273.6 175.8 L270.7 176.9 L268.0 178.1 L265.5 179.3 L263.2 180.6 L261.1 182.0 L259.3 183.4 L257.6 184.8 L256.2 186.2 L255.0 187.7 L254.0 189.3 L253.2 190.8 L252.6 192.4 L252.3 194.0 M510.1 221.3 L508.5 221.5 L506.5 221.8 L504.0 222.0 L501.2 222.2 L498.0 222.4 L494.6 222.6 L491.1 222.8 L487.4 222.9 L483.6 223.1 L479.8 223.3 L475.9 223.4 L472.1 223.6 L468.3 223.7 L464.4 223.9 L460.5 224.0 L456.6 224.2 L452.6 224.3 L448.5 224.5 L444.3 224.6 L440.0 224.7 L435.5 224.9 L430.9 225.0 L426.1 225.1 L421.2 225.2 L416.0 225.3 L410.7 225.4 L405.3 225.5 L399.7 225.5 L394.0 225.5 L388.1 225.6 L382.3 225.6 L376.4 225.5 L370.4 225.5 L364.5 225.4 L358.6 225.3 L352.7 225.3 L346.9 225.1 L341.1 225.0 L335.5 224.9 L329.9 224.7 L324.5 224.6 L319.3 224.4 L314.1 224.2 L309.1 224.0 L304.3 223.8 L299.7 223.6 L295.2 223.4 L290.9 223.2 L286.8 222.9 L282.9 222.7 L279.3 222.5 L275.8 222.2 L272.5 221.9 L269.5 221.7 L266.7 221.4 L264.1 221.2 L261.7 220.9 L259.6 220.6 L257.6 220.4 L255.9 220.1 L254.4 219.8 L253.2 219.6 L252.1 219.3 L251.3 219.0 L250.6 218.8 L250.2 218.5 L250.0 218.2 L250.0 218.0 M510.1 221.3 L508.5 223.6 L506.5 225.9 L504.1 228.2 L501.3 230.4 L498.2 232.6 L494.9 234.7 L491.3 236.8 L487.7 238.8 L484.0 240.8 L480.2 242.7 L476.5 244.6 L472.7 246.5 L468.9 248.4 L465.1 250.2 L461.3 252.1 L457.5 254.0 L453.6 255.9 L449.6 257.8 L445.5 259.7 L441.3 261.6 L437.0 263.4 L432.5 265.2 L427.8 267.0 L423.0 268.7 L418.0 270.4 L412.8 271.9 L407.5 273.4 L402.0 274.7 L396.5 275.9 L390.8 277.0 L385.1 277.9 L379.3 278.7 L373.5 279.4 L367.7 280.0 L361.9 280.4 L356.2 280.6 L350.5 280.8 L344.9 280.8 L339.3 280.6 L333.9 280.4 L328.5 280.1 L323.3 279.6 L318.2 279.0 L313.3 278.3 L308.5 277.5 L303.9 276.6 L299.5 275.7 L295.2 274.6 L291.1 273.4 L287.2 272.2 L283.5 270.9 L279.9 269.4 L276.6 268.0 L273.5 266.4 L270.6 264.8 L267.9 263.1 L265.4 261.4 L263.2 259.6 L261.1 257.8 L259.3 255.9 L257.7 254.0 L256.2 252.1 L255.0 250.1 L254.0 248.1 L253.3 246.1 L252.7 244.1 L252.3 242.0 M510.1 221.3 L508.7 225.3 L506.8 229.3 L504.6 233.3 L502.0 237.1 L499.0 240.9 L495.9 244.5 L492.5 248.1 L489.1 251.5 L485.6 254.9 L482.1 258.2 L478.5 261.5 L475.0 264.7 L471.4 267.9 L467.9 271.1 L464.4 274.3 L460.8 277.5 L457.2 280.7 L453.5 283.9 L449.7 287.0 L445.8 290.2 L441.8 293.3 L437.6 296.3 L433.3 299.3 L428.8 302.1 L424.2 304.9 L419.4 307.5 L414.5 309.9 L409.4 312.1 L404.2 314.1 L398.9 315.9 L393.6 317.6 L388.2 318.9 L382.7 320.1 L377.2 321.0 L371.8 321.8 L366.3 322.3 L360.9 322.6 L355.5 322.7 L350.2 322.6 L344.9 322.3 L339.8 321.8 L334.7 321.1 L329.8 320.3 L324.9 319.3 L320.2 318.1 L315.6 316.8 L311.2 315.3 L306.9 313.6 L302.7 311.8 L298.7 309.9 L294.9 307.8 L291.3 305.6 L287.8 303.2 L284.5 300.8 L281.3 298.2 L278.4 295.5 L275.6 292.8 L273.1 289.9 L270.7 287.0 L268.5 283.9 L266.5 280.8 L264.7 277.6 L263.1 274.4 M510.1 221.3 L508.9 226.4 L507.4 231.5 L505.4 236.4 L503.0 241.3 L500.4 246.0 L497.5 250.5 L494.5 254.9 L491.3 259.2 L488.1 263.4 L484.9 267.4 L481.7 271.4 L478.5 275.4 L475.3 279.2 L472.2 283.1 L469.0 286.9 L465.8 290.8 L462.6 294.6 L459.3 298.4 L455.9 302.2 L452.5 305.9 L448.9 309.6 L445.2 313.2 L441.3 316.6 L437.4 320.0 L433.2 323.2 L428.9 326.2 L424.5 329.0 L419.9 331.6 L415.2 334.0 L410.4 336.1 L405.5 337.9 L400.5 339.5 L395.5 340.9 L390.5 342.0 L385.4 342.8 L380.3 343.5 L375.2 343.8 L370.2 344.0 L365.2 343.9 L360.2 343.6 L355.3 343.0 L350.4 342.3 L345.6 341.4 L340.9 340.2 L336.3 338.9 L331.8 337.4 L327.3 335.7 L323.0 333.8 L318.8 331.8 L314.7 329.6 L310.7 327.2 M510.1 221.3 L509.3 226.7 L508.0 232.0 L506.3 237.2 L504.3 242.3 L502.0 247.2 L499.5 251.9 L496.8 256.4 L494.0 260.8 L491.2 265.0 L488.3 269.2 L485.5 273.2 L482.6 277.2 L479.8 281.1 L477.1 284.9 L474.3 288.8 L471.5 292.6 L468.7 296.3 L465.8 300.1 L462.9 303.8 L459.9 307.4 L456.8 311.0 L453.6 314.5 L450.2 317.9 M510.1 221.3 L509.6 226.2 L508.7 231.0 L507.3 235.6 L505.7 240.1 L503.7 244.4 L501.5 248.6 L499.1 252.5 L496.7 256.4 L494.2 260.1 M510.1 221.3 L509.9 224.9 L509.3 228.4 L508.2 231.9 L506.8 235.1 L505.1 238.3 L503.2 241.3 M510.1 221.3 L510.1 223.1 L509.7 224.9 L508.9 226.5 L507.7 228.1 L506.2 229.7" stroke="#16165c" stroke-width="0.85" fill="none" stroke-linejoin="round"/>
<path d="M493.1 271.8 L493.6 271.6 L494.0 271.3 L494.4 270.8 L494.9 270.3 L495.3 269.6 L495.7 268.8 L496.2 267.9 L496.6 266.9 L497.0 265.8 L497.4 264.6 L497.8 263.3 L498.1 262.0 L498.5 260.5 L498.9 258.9 L499.2 257.3 L499.5 255.6 L499.9 253.8 L500.2 251.9 L500.5 250.0 L500.7 248.0 L501.0 245.9 L501.3 243.9 L501.5 241.7 L501.7 239.5 L501.9 237.3 L502.1 235.1 L502.2 232.8 L502.4 230.5 L502.5 228.2 L502.6 225.8 L502.7 223.5 L502.8 221.1 L502.8 218.8 L502.9 216.4 L502.9 214.1 L502.9 211.8 L502.8 209.4 L502.8 207.2 L502.7 204.9 L502.7 202.7 L502.6 200.5 L502.4 198.3 L502.3 196.2 L502.1 194.2 L502.0 192.2 L501.8 190.2 L501.6 188.4 L501.3 186.6 L501.1 184.8 L500.8 183.2 L500.6 181.6 L500.3 180.1 L500.0 178.7 L499.6 177.4 L499.3 176.1 L499.0 175.0 L498.6 174.0 L498.2 173.1 L497.8 172.3 L497.4 171.6 L497.0 171.0 L496.6 170.5 L496.2 170.2 L495.8 170.0 L495.4 169.9 L494.9 169.9 L494.5 170.0 L494.0 170.3 L493.6 170.7 L493.1 171.2 L492.7 171.8 L492.3 172.6 L491.8 173.5 L491.4 174.5 L490.9 175.7 L490.5 176.9 L490.1 178.3 L489.7 179.8 L489.3 181.4 L488.9 183.1 L488.5 184.9 L488.2 186.8 L487.8 188.8 L487.5 190.9 L487.2 193.1 L486.9 195.3 L486.6 197.6 L486.3 200.0 L486.1 202.5 L485.9 205.0 L485.7 207.5 L485.5 210.1 L485.4 212.7 L485.2 215.4 L485.1 218.0 L485.1 220.7 L485.0 223.4 L485.0 226.0 L485.0 228.7 L485.0 231.3 L485.0 233.9 L485.1 236.4 L485.2 238.9 L485.3 241.4 L485.4 243.8 L485.6 246.1 L485.8 248.4 L486.0 250.6 L486.2 252.7 L486.4 254.7 L486.7 256.6 L487.0 258.4 L487.3 260.1 L487.6 261.7 L487.9 263.2 L488.2 264.6 L488.6 265.9 L489.0 267.1 L489.4 268.1 L489.8 269.0 L490.2 269.8 L490.6 270.5 L491.0 271.0 L491.4 271.4 L491.8 271.7 L492.3 271.9 L492.7 271.9 L493.1 271.8 M462.8 312.3 L463.7 311.7 L464.7 310.9 L465.6 309.9 L466.5 308.7 L467.4 307.2 L468.3 305.7 L469.2 303.9 L470.1 301.9 L470.9 299.8 L471.8 297.5 L472.6 295.1 L473.3 292.5 L474.1 289.8 L474.8 286.9 L475.5 283.9 L476.2 280.8 L476.8 277.6 L477.4 274.3 L478.0 270.9 L478.6 267.4 L479.1 263.8 L479.6 260.1 L480.0 256.3 L480.4 252.5 L480.8 248.7 L481.2 244.8 L481.5 240.8 L481.7 236.8 L482.0 232.8 L482.2 228.7 L482.3 224.7 L482.5 220.6 L482.5 216.6 L482.6 212.5 L482.6 208.5 L482.6 204.4 L482.5 200.4 L482.4 196.5 L482.3 192.5 L482.1 188.6 L481.9 184.8 L481.6 181.0 L481.3 177.3 L481.0 173.7 L480.6 170.2 L480.2 166.7 L479.8 163.4 L479.3 160.1 L478.8 157.0 L478.3 154.0 L477.7 151.1 L477.1 148.3 L476.4 145.7 L475.8 143.2 L475.0 140.9 L474.3 138.7 L473.5 136.7 L472.8 134.9 L471.9 133.2 L471.1 131.8 L470.2 130.5 L469.3 129.5 L468.4 128.6 L467.5 128.0 L466.6 127.6 L465.6 127.4 L464.6 127.4 L463.7 127.6 L462.7 128.1 L461.7 128.8 L460.7 129.8 L459.7 131.0 L458.7 132.4 L457.7 134.1 L456.8 136.0 L455.8 138.2 L454.9 140.5 L453.9 143.1 L453.0 146.0 L452.2 149.0 L451.3 152.3 L450.5 155.8 L449.7 159.4 L448.9 163.3 L448.2 167.3 L447.5 171.5 L446.9 175.9 L446.3 180.4 L445.7 185.0 L445.2 189.7 L444.8 194.6 L444.4 199.5 L444.1 204.5 L443.8 209.5 L443.6 214.6 L443.4 219.7 L443.3 224.8 L443.3 229.8 L443.3 234.9 L443.4 239.9 L443.5 244.8 L443.7 249.7 L444.0 254.4 L444.3 259.0 L444.6 263.6 L445.0 267.9 L445.5 272.1 L446.0 276.2 L446.6 280.1 L447.2 283.8 L447.8 287.3 L448.5 290.6 L449.3 293.6 L450.0 296.5 L450.8 299.2 L451.6 301.6 L452.5 303.7 L453.3 305.7 L454.2 307.4 L455.1 308.9 L456.1 310.1 L457.0 311.1 L458.0 311.9 L458.9 312.4 L459.9 312.7 L460.8 312.8 L461.8 312.6 L462.8 312.3 M423.1 343.0 L424.7 342.0 L426.2 340.7 L427.8 339.1 L429.3 337.3 L430.8 335.2 L432.2 332.9 L433.6 330.4 L435.0 327.6 L436.3 324.7 L437.6 321.5 L438.9 318.1 L440.1 314.6 L441.3 310.9 L442.4 307.0 L443.5 303.0 L444.5 298.8 L445.5 294.5 L446.5 290.1 L447.3 285.6 L448.2 280.9 L448.9 276.2 L449.7 271.4 L450.3 266.4 L451.0 261.5 L451.5 256.4 L452.0 251.3 L452.5 246.2 L452.9 241.0 L453.2 235.7 L453.5 230.5 L453.7 225.2 L453.9 219.9 L454.0 214.6 L454.0 209.4 L454.0 204.1 L453.9 198.9 L453.8 193.6 L453.6 188.5 L453.4 183.3 L453.1 178.3 L452.7 173.2 L452.3 168.3 L451.8 163.4 L451.3 158.6 L450.7 154.0 L450.1 149.4 L449.3 144.9 L448.6 140.5 L447.8 136.3 L446.9 132.2 L446.0 128.3 L445.0 124.5 L443.9 120.9 L442.9 117.5 L441.7 114.3 L440.5 111.2 L439.3 108.4 L438.0 105.8 L436.7 103.4 L435.3 101.3 L433.9 99.4 L432.4 97.7 L430.9 96.3 L429.4 95.2 L427.9 94.4 L426.3 93.9 L424.7 93.7 L423.1 93.8 L421.4 94.2 L419.8 94.9 L418.1 96.0 L416.4 97.4 L414.8 99.1 L413.1 101.1 L411.5 103.5 L409.8 106.2 L408.2 109.3 L406.7 112.7 L405.1 116.4 L403.6 120.5 L402.1 124.9 L400.7 129.5 L399.4 134.5 L398.1 139.8 L396.8 145.3 L395.7 151.1 L394.6 157.1 L393.6 163.3 L392.6 169.7 L391.8 176.3 L391.1 183.1 L390.4 190.0 L389.9 197.0 L389.4 204.0 L389.1 211.2 L388.9 218.3 L388.7 225.5 L388.7 232.6 L388.8 239.7 L389.0 246.7 L389.3 253.6 L389.7 260.4 L390.2 267.0 L390.8 273.5 L391.5 279.7 L392.3 285.8 L393.1 291.6 L394.1 297.1 L395.1 302.4 L396.2 307.5 L397.4 312.2 L398.7 316.6 L400.0 320.7 L401.3 324.5 L402.7 328.0 L404.2 331.1 L405.7 333.9 L407.2 336.3 L408.7 338.5 L410.3 340.3 L411.9 341.7 L413.5 342.8 L415.1 343.6 L416.7 344.1 L418.3 344.3 L419.9 344.2 L421.5 343.7 L423.1 343.0 M374.1 350.4 L376.2 349.2 L378.2 347.8 L380.2 346.1 L382.2 344.1 L384.1 341.8 L386.0 339.3 L387.8 336.6 L389.6 333.6 L391.4 330.4 L393.0 327.0 L394.7 323.4 L396.2 319.6 L397.7 315.6 L399.2 311.5 L400.6 307.2 L401.9 302.7 L403.1 298.1 L404.3 293.4 L405.4 288.6 L406.5 283.7 L407.4 278.6 L408.4 273.5 L409.2 268.3 L410.0 263.0 L410.7 257.6 L411.3 252.2 L411.8 246.7 L412.3 241.2 L412.7 235.7 L413.0 230.1 L413.3 224.5 L413.5 218.9 L413.6 213.3 L413.6 207.7 L413.5 202.2 L413.4 196.6 L413.2 191.1 L413.0 185.6 L412.6 180.1 L412.2 174.7 L411.7 169.4 L411.1 164.2 L410.5 159.0 L409.7 153.9 L408.9 148.9 L408.1 144.0 L407.1 139.2 L406.1 134.6 L405.0 130.0 L403.9 125.7 L402.6 121.5 L401.3 117.4 L399.9 113.5 L398.5 109.8 L397.0 106.3 L395.4 103.0 L393.8 100.0 L392.1 97.1 L390.3 94.5 L388.5 92.1 L386.6 90.0 L384.7 88.2 L382.8 86.7 L380.7 85.4 L378.7 84.5 L376.6 83.8 L374.5 83.5 L372.3 83.5 L370.2 83.9 L368.0 84.6 L365.8 85.6 L363.6 87.0 L361.4 88.8 L359.2 90.9 L357.0 93.4 L354.9 96.3 L352.8 99.5 L350.7 103.1 L348.6 107.1 L346.6 111.4 L344.7 116.1 L342.8 121.0 L341.0 126.4 L339.3 132.0 L337.7 137.9 L336.2 144.1 L334.8 150.6 L333.5 157.3 L332.3 164.3 L331.2 171.4 L330.2 178.7 L329.4 186.1 L328.7 193.7 L328.2 201.4 L327.8 209.1 L327.5 216.8 L327.4 224.6 L327.4 232.3 L327.6 240.0 L327.9 247.6 L328.4 255.0 L328.9 262.4 L329.7 269.5 L330.5 276.5 L331.5 283.2 L332.6 289.8 L333.8 296.0 L335.1 302.0 L336.6 307.7 L338.1 313.1 L339.7 318.2 L341.4 322.9 L343.2 327.3 L345.0 331.3 L346.9 335.0 L348.9 338.3 L350.9 341.3 L352.9 343.8 L355.0 346.1 L357.1 347.9 L359.2 349.4 L361.4 350.6 L363.5 351.4 L365.7 351.8 L367.8 352.0 L369.9 351.8 L372.0 351.2 L374.1 350.4 M327.4 336.2 L329.6 335.2 L331.8 334.0 L333.9 332.6 L336.0 330.9 L338.1 328.9 L340.1 326.7 L342.0 324.3 L343.9 321.7 L345.8 318.9 L347.6 315.8 L349.3 312.6 L351.0 309.2 L352.6 305.7 L354.1 302.0 L355.6 298.1 L357.0 294.1 L358.4 290.0 L359.6 285.7 L360.8 281.3 L361.9 276.9 L363.0 272.3 L363.9 267.6 L364.8 262.9 L365.6 258.1 L366.4 253.2 L367.0 248.2 L367.6 243.2 L368.1 238.2 L368.5 233.2 L368.8 228.1 L369.1 223.0 L369.3 217.9 L369.3 212.7 L369.3 207.6 L369.3 202.5 L369.1 197.4 L368.9 192.4 L368.5 187.4 L368.1 182.4 L367.6 177.5 L367.1 172.6 L366.4 167.8 L365.7 163.1 L364.9 158.5 L364.0 154.0 L363.0 149.5 L362.0 145.2 L360.8 141.0 L359.6 136.9 L358.3 133.0 L357.0 129.2 L355.5 125.5 L354.0 122.1 L352.5 118.8 L350.8 115.6 L349.1 112.7 L347.3 110.0 L345.5 107.5 L343.6 105.2 L341.6 103.1 L339.6 101.3 L337.5 99.7 L335.4 98.4 L333.3 97.4 L331.1 96.6 L328.9 96.1 L326.6 95.9 L324.4 96.0 L322.1 96.4 L319.8 97.1 L317.5 98.2 L315.1 99.5 L312.8 101.2 L310.6 103.2 L308.3 105.5 L306.0 108.1 L303.8 111.1 L301.7 114.4 L299.6 118.0 L297.5 121.9 L295.5 126.1 L293.6 130.5 L291.8 135.3 L290.0 140.4 L288.4 145.7 L286.8 151.2 L285.4 157.0 L284.1 162.9 L282.9 169.1 L281.8 175.4 L280.8 181.9 L280.0 188.5 L279.3 195.2 L278.8 201.9 L278.4 208.8 L278.2 215.6 L278.1 222.5 L278.2 229.3 L278.4 236.1 L278.7 242.8 L279.2 249.4 L279.8 255.9 L280.6 262.3 L281.5 268.5 L282.5 274.5 L283.7 280.3 L285.0 285.9 L286.4 291.3 L287.9 296.4 L289.5 301.2 L291.2 305.8 L292.9 310.1 L294.8 314.1 L296.7 317.7 L298.7 321.1 L300.8 324.1 L302.9 326.9 L305.0 329.3 L307.2 331.4 L309.4 333.2 L311.7 334.6 L313.9 335.7 L316.2 336.6 L318.5 337.1 L320.7 337.3 L323.0 337.2 L325.2 336.8 L327.4 336.2 M290.1 305.4 L291.9 304.8 L293.8 304.1 L295.6 303.1 L297.3 302.0 L299.1 300.7 L300.8 299.2 L302.5 297.5 L304.1 295.6 L305.7 293.6 L307.3 291.4 L308.8 289.0 L310.2 286.5 L311.6 283.9 L313.0 281.2 L314.2 278.3 L315.5 275.3 L316.6 272.2 L317.8 268.9 L318.8 265.6 L319.8 262.2 L320.7 258.7 L321.5 255.2 L322.3 251.5 L323.0 247.8 L323.7 244.1 L324.2 240.3 L324.7 236.4 L325.1 232.5 L325.5 228.6 L325.8 224.7 L326.0 220.8 L326.1 216.8 L326.2 212.8 L326.2 208.9 L326.1 204.9 L325.9 201.0 L325.7 197.1 L325.4 193.2 L325.0 189.4 L324.5 185.6 L324.0 181.9 L323.4 178.2 L322.7 174.6 L322.0 171.1 L321.2 167.6 L320.3 164.3 L319.4 161.0 L318.4 157.8 L317.3 154.7 L316.1 151.8 L314.9 149.0 L313.6 146.3 L312.3 143.7 L310.9 141.3 L309.5 139.0 L308.0 136.9 L306.4 135.0 L304.8 133.2 L303.2 131.6 L301.5 130.2 L299.8 128.9 L298.0 127.9 L296.3 127.1 L294.4 126.4 L292.6 126.0 L290.7 125.8 L288.8 125.8 L286.9 126.1 L285.0 126.5 L283.1 127.2 L281.2 128.1 L279.4 129.3 L277.5 130.7 L275.6 132.3 L273.8 134.1 L272.0 136.2 L270.2 138.5 L268.5 141.0 L266.8 143.7 L265.1 146.7 L263.6 149.8 L262.1 153.2 L260.6 156.7 L259.2 160.4 L258.0 164.3 L256.7 168.4 L255.6 172.6 L254.6 176.9 L253.7 181.4 L252.8 186.0 L252.1 190.7 L251.5 195.4 L251.0 200.2 L250.6 205.1 L250.3 210.0 L250.1 214.9 L250.1 219.9 L250.1 224.8 L250.3 229.7 L250.6 234.5 L251.0 239.3 L251.5 244.0 L252.1 248.6 L252.8 253.1 L253.6 257.5 L254.5 261.7 L255.5 265.8 L256.6 269.8 L257.8 273.5 L259.1 277.1 L260.4 280.6 L261.9 283.8 L263.3 286.8 L264.9 289.6 L266.5 292.2 L268.2 294.6 L269.9 296.7 L271.6 298.6 L273.4 300.3 L275.2 301.8 L277.0 303.0 L278.9 304.0 L280.7 304.8 L282.6 305.4 L284.5 305.7 L286.4 305.8 L288.2 305.7 L290.1 305.4 M266.5 263.1 L267.6 262.9 L268.7 262.7 L269.7 262.3 L270.7 261.8 L271.7 261.1 L272.7 260.4 L273.7 259.6 L274.7 258.7 L275.6 257.7 L276.6 256.6 L277.5 255.4 L278.3 254.1 L279.2 252.7 L280.0 251.3 L280.7 249.7 L281.5 248.1 L282.2 246.5 L282.9 244.7 L283.5 242.9 L284.1 241.1 L284.7 239.2 L285.2 237.2 L285.7 235.2 L286.1 233.2 L286.5 231.1 L286.8 229.0 L287.1 226.8 L287.4 224.7 L287.6 222.5 L287.8 220.3 L287.9 218.1 L288.0 215.9 L288.0 213.6 L288.0 211.4 L287.9 209.2 L287.8 207.0 L287.7 204.9 L287.5 202.7 L287.2 200.6 L286.9 198.5 L286.6 196.4 L286.2 194.4 L285.8 192.4 L285.3 190.5 L284.8 188.6 L284.3 186.8 L283.7 185.0 L283.1 183.3 L282.4 181.6 L281.7 180.1 L281.0 178.6 L280.2 177.2 L279.4 175.8 L278.5 174.6 L277.7 173.5 L276.8 172.4 L275.9 171.4 L274.9 170.6 L273.9 169.8 L273.0 169.1 L271.9 168.6 L270.9 168.1 L269.9 167.8 L268.8 167.6 L267.8 167.5 L266.7 167.5 L265.7 167.6 L264.6 167.9 L263.5 168.2 L262.5 168.7 L261.4 169.3 L260.4 170.0 L259.3 170.9 L258.3 171.8 L257.3 172.9 L256.4 174.0 L255.4 175.3 L254.5 176.7 L253.6 178.2 L252.7 179.8 L251.9 181.4 L251.1 183.2 L250.3 185.1 L249.6 187.0 L248.9 189.0 L248.3 191.1 L247.7 193.3 L247.2 195.5 L246.7 197.8 L246.3 200.2 L245.9 202.5 L245.6 204.9 L245.3 207.4 L245.1 209.8 L245.0 212.3 L244.9 214.8 L244.9 217.3 L244.9 219.8 L245.0 222.2 L245.1 224.7 L245.3 227.1 L245.6 229.5 L245.9 231.9 L246.3 234.2 L246.7 236.4 L247.2 238.6 L247.7 240.7 L248.3 242.8 L248.9 244.8 L249.6 246.7 L250.3 248.5 L251.0 250.2 L251.8 251.8 L252.6 253.3 L253.5 254.8 L254.4 256.1 L255.3 257.3 L256.3 258.4 L257.2 259.4 L258.2 260.3 L259.2 261.0 L260.2 261.7 L261.3 262.2 L262.3 262.6 L263.4 262.9 L264.4 263.1 L265.5 263.2 L266.5 263.1 M260.8 239.5 L261.3 239.4 L261.9 239.3 L262.4 239.1 L262.9 238.9 L263.5 238.6 L264.0 238.3 L264.5 237.9 L265.0 237.5 L265.5 237.0 L266.0 236.4 L266.5 235.8 L266.9 235.2 L267.4 234.5 L267.8 233.8 L268.2 233.0 L268.6 232.2 L269.0 231.3 L269.4 230.5 L269.7 229.5 L270.0 228.6 L270.3 227.6 L270.6 226.6 L270.9 225.6 L271.1 224.5 L271.3 223.4 L271.5 222.3 L271.7 221.2 L271.8 220.1 L271.9 218.9 L272.0 217.8 L272.1 216.6 L272.1 215.5 L272.1 214.3 L272.1 213.2 L272.1 212.0 L272.0 210.9 L272.0 209.7 L271.8 208.6 L271.7 207.5 L271.6 206.4 L271.4 205.3 L271.2 204.3 L270.9 203.3 L270.7 202.3 L270.4 201.3 L270.1 200.4 L269.8 199.5 L269.4 198.6 L269.1 197.8 L268.7 197.0 L268.3 196.2 L267.9 195.5 L267.5 194.9 L267.0 194.2 L266.6 193.7 L266.1 193.2 L265.6 192.7 L265.1 192.3 L264.6 191.9 L264.1 191.6 L263.6 191.4 L263.0 191.2 L262.5 191.0 L261.9 191.0 L261.4 190.9 L260.8 191.0 L260.3 191.1 L259.8 191.2 L259.2 191.4 L258.7 191.7 L258.1 192.0 L257.6 192.4 L257.1 192.9 L256.6 193.4 L256.1 193.9 L255.6 194.6 L255.1 195.2 L254.6 195.9 L254.2 196.7 L253.8 197.5 L253.4 198.4 L253.0 199.2 L252.6 200.2 L252.2 201.2 L251.9 202.2 L251.6 203.2 L251.3 204.3 L251.0 205.4 L250.8 206.5 L250.6 207.7 L250.4 208.9 L250.3 210.1 L250.1 211.3 L250.0 212.5 L250.0 213.7 L249.9 214.9 L249.9 216.2 L249.9 217.4 L250.0 218.6 L250.0 219.8 L250.1 221.0 L250.3 222.2 L250.4 223.4 L250.6 224.5 L250.8 225.6 L251.0 226.7 L251.3 227.8 L251.6 228.8 L251.9 229.8 L252.2 230.7 L252.6 231.7 L252.9 232.5 L253.3 233.4 L253.7 234.1 L254.2 234.9 L254.6 235.6 L255.1 236.2 L255.5 236.8 L256.0 237.3 L256.5 237.8 L257.0 238.2 L257.5 238.5 L258.1 238.8 L258.6 239.1 L259.1 239.3 L259.7 239.4 L260.2 239.5 L260.8 239.5 M516.5 221.5 L516.6 220.1 L516.2 218.7 L515.4 217.4 L514.2 216.1 L512.7 214.8 L510.9 213.6 L509.0 212.5 L507.0 211.4 L504.9 210.3 L502.8 209.3 L500.8 208.3 L498.7 207.3 L496.7 206.4 L494.7 205.4 L492.7 204.5 L490.7 203.6 L488.7 202.7 L486.7 201.9 L484.6 201.0 L482.5 200.2 L480.3 199.3 L477.9 198.5 L475.4 197.7 L472.8 197.0 L470.0 196.3 L467.1 195.6 L464.0 195.0 L460.7 194.4 L457.3 193.8 L453.8 193.3 L450.1 192.8 L446.4 192.4 L442.5 192.1 L438.5 191.7 L434.4 191.5 L430.3 191.2 L426.1 191.0 L421.9 190.9 L417.6 190.8 L413.2 190.7 L408.8 190.7 L404.4 190.7 L400.0 190.7 L395.6 190.8 L391.1 190.9 L386.7 191.1 L382.2 191.3 L377.8 191.5 L373.3 191.8 L368.8 192.1 L364.4 192.4 L360.0 192.8 L355.6 193.2 L351.2 193.6 L346.9 194.0 L342.5 194.5 L338.3 195.1 L334.0 195.6 L329.8 196.2 L325.7 196.9 L321.6 197.5 L317.5 198.2 L313.5 198.9 L309.6 199.7 L305.8 200.4 L302.0 201.2 L298.3 202.1 L294.6 202.9 L291.1 203.8 L287.7 204.7 L284.3 205.7 L281.1 206.6 L277.9 207.6 L274.9 208.6 L271.9 209.7 L269.1 210.7 L266.5 211.8 L263.9 212.9 L261.5 214.0 L259.2 215.2 M516.5 221.5 L516.3 216.6 L515.6 211.8 L514.5 207.1 L513.1 202.5 L511.3 198.2 L509.2 194.0 L507.0 189.9 L504.7 186.0 L502.3 182.2 L499.9 178.6 L497.6 175.0 L495.2 171.6 L492.9 168.2 L490.6 164.8 L488.3 161.5 L486.0 158.2 L483.6 155.0 L481.3 151.8 L478.9 148.6 L476.4 145.5 L473.8 142.5 L471.1 139.5 L468.2 136.6 L465.2 133.9 L462.0 131.3 L458.7 128.8 L455.2 126.5 L451.6 124.4 L447.8 122.5 L443.9 120.7 L439.8 119.1 L435.7 117.8 L431.4 116.6 L427.1 115.6 L422.6 114.8 L418.2 114.1 L413.6 113.7 L409.1 113.4 L404.5 113.2 L399.8 113.3 L395.2 113.5 L390.6 113.8 L385.9 114.3 L381.3 115.0 L376.7 115.8 L372.1 116.7 L367.5 117.8 L362.9 119.0 L358.4 120.3 L353.9 121.8 L349.5 123.5 L345.1 125.2 L340.8 127.1 L336.5 129.1 L332.2 131.2 L328.1 133.4 L324.0 135.8 L320.0 138.3 L316.1 140.8 L312.2 143.5 L308.5 146.3 L304.8 149.2 L301.2 152.2 L297.8 155.3 L294.4 158.5 L291.2 161.8 L288.0 165.2 L285.0 168.6 L282.1 172.2 L279.3 175.8 L276.7 179.4 L274.2 183.2 L271.8 187.0 L269.5 190.9 L267.4 194.8 L265.5 198.8 L263.7 202.8 L262.0 206.9 L260.6 211.0 L259.2 215.2 M516.5 221.5 L515.7 215.9 L514.4 210.4 L512.7 204.9 L510.6 199.6 L508.1 194.5 L505.5 189.4 L502.6 184.6 L499.6 179.8 L496.6 175.2 L493.6 170.7 L490.5 166.3 L487.5 161.9 L484.4 157.6 L481.4 153.4 L478.4 149.1 L475.3 144.9 L472.3 140.7 L469.1 136.5 L465.9 132.3 L462.6 128.2 L459.2 124.1 L455.6 120.1 L451.9 116.2 L448.0 112.5 L443.9 108.9 L439.7 105.5 L435.3 102.4 L430.8 99.4 L426.1 96.7 L421.3 94.2 L416.4 92.0 L411.4 90.1 L406.3 88.4 L401.2 87.0 L396.0 85.9 L390.8 85.0 L385.6 84.4 L380.4 84.0 L375.2 83.8 L370.0 83.9 L364.9 84.2 L359.8 84.8 L354.8 85.5 L349.9 86.5 L345.0 87.7 L340.2 89.1 L335.5 90.6 L330.8 92.4 L326.3 94.3 L321.9 96.5 L317.6 98.8 L313.4 101.3 L309.4 103.9 L305.5 106.7 L301.7 109.7 L298.0 112.8 L294.5 116.0 L291.2 119.4 L288.0 122.9 L284.9 126.6 L282.0 130.3 L279.3 134.2 L276.7 138.1 L274.3 142.2 L272.1 146.4 L270.0 150.6 L268.1 154.9 L266.4 159.3 L264.8 163.8 L263.5 168.3 L262.3 172.8 L261.2 177.4 L260.4 182.1 L259.7 186.8 L259.2 191.5 L258.8 196.2 L258.7 200.9 L258.7 205.7 L258.9 210.4 L259.2 215.2 M516.5 221.5 L515.1 218.5 L513.2 215.5 L510.9 212.5 L508.2 209.6 L505.1 206.7 L501.8 203.9 L498.3 201.2 L494.6 198.5 L490.9 195.8 L487.2 193.2 L483.4 190.6 L479.6 188.1 L475.8 185.5 L472.1 183.0 L468.2 180.4 L464.4 177.9 L460.5 175.3 L456.5 172.7 L452.4 170.2 L448.1 167.6 L443.8 165.0 L439.2 162.5 L434.5 160.1 L429.6 157.7 L424.5 155.4 L419.3 153.2 L413.8 151.1 L408.3 149.1 L402.5 147.3 L396.7 145.7 L390.8 144.2 L384.9 142.9 L378.9 141.7 L372.9 140.7 L366.9 139.9 L360.9 139.3 L355.0 138.8 L349.1 138.5 L343.3 138.3 L337.6 138.3 L332.0 138.5 L326.5 138.8 L321.2 139.2 L316.0 139.8 L311.0 140.5 L306.1 141.4 L301.3 142.4 L296.8 143.5 L292.4 144.7 L288.3 146.0 L284.3 147.5 L280.5 149.0 L276.9 150.7 L273.6 152.4 L270.4 154.2 L267.5 156.2 L264.7 158.2 L262.2 160.2 L259.9 162.4 L257.9 164.6 L256.0 166.9 L254.4 169.2 L253.0 171.6 L251.7 174.0 L250.8 176.5 L250.0 178.9 L249.4 181.5 L249.0 184.0 L248.9 186.6 L248.9 189.2 L249.1 191.8 L249.5 194.4 L250.1 197.0 L250.9 199.6 L251.9 202.2 L253.0 204.9 L254.3 207.5 L255.8 210.0 L257.4 212.6 L259.2 215.2 M516.5 221.5 L514.9 222.8 L512.8 224.2 L510.2 225.5 L507.3 226.8 L504.0 228.1 L500.5 229.4 L496.8 230.6 L492.9 231.7 L489.0 232.9 L485.0 234.0 L481.0 235.1 L477.0 236.3 L473.0 237.4 L469.0 238.5 L464.9 239.6 L460.8 240.7 L456.7 241.8 L452.4 242.9 L448.0 244.0 L443.5 245.1 L438.9 246.2 L434.0 247.3 L429.0 248.3 L423.8 249.3 L418.5 250.3 L412.9 251.2 L407.2 252.0 L401.4 252.8 L395.4 253.5 L389.3 254.1 L383.2 254.6 L377.0 255.0 L370.8 255.4 L364.5 255.6 L358.3 255.8 L352.2 255.9 L346.1 255.9 L340.1 255.9 L334.2 255.7 L328.4 255.5 L322.7 255.2 L317.2 254.9 L311.8 254.5 L306.6 254.0 L301.6 253.4 L296.7 252.8 L292.0 252.2 L287.6 251.5 L283.3 250.7 L279.2 249.9 L275.4 249.0 L271.8 248.1 L268.4 247.2 L265.2 246.2 L262.2 245.1 L259.5 244.1 L257.0 243.0 L254.8 241.9 L252.8 240.8 L251.0 239.6 L249.4 238.4 L248.1 237.2 L247.0 236.0 L246.1 234.8 L245.5 233.5 L245.0 232.3 L244.8 231.0 L244.8 229.8 L245.0 228.5 L245.3 227.3 L245.9 226.0 L246.7 224.8 L247.7 223.5 L248.8 222.3 L250.1 221.1 L251.6 219.9 L253.3 218.7 L255.1 217.5 L257.1 216.3 L259.2 215.2 M516.5 221.5 L515.2 226.4 L513.4 231.2 L511.2 236.0 L508.6 240.6 L505.7 245.1 L502.5 249.5 L499.1 253.8 L495.7 258.0 L492.2 262.0 L488.6 266.0 L485.1 269.9 L481.5 273.7 L478.0 277.5 L474.5 281.3 L471.0 285.1 L467.4 288.9 L463.8 292.7 L460.1 296.4 L456.4 300.2 L452.5 303.9 L448.5 307.5 L444.4 311.1 L440.1 314.6 L435.7 317.9 L431.0 321.1 L426.3 324.2 L421.3 327.0 L416.3 329.6 L411.1 331.9 L405.8 334.1 L400.4 335.9 L394.9 337.5 L389.4 338.9 L383.9 340.0 L378.3 340.8 L372.8 341.4 L367.3 341.8 L361.8 341.9 L356.4 341.8 L351.0 341.4 L345.7 340.9 L340.5 340.1 L335.4 339.1 L330.4 338.0 L325.5 336.6 L320.8 335.0 L316.1 333.3 L311.6 331.4 L307.3 329.3 L303.0 327.1 L299.0 324.6 L295.1 322.1 L291.3 319.4 L287.7 316.5 L284.3 313.5 L281.1 310.4 L278.0 307.2 L275.2 303.8 L272.5 300.4 L270.0 296.8 L267.7 293.2 L265.5 289.5 L263.6 285.7 L261.9 281.8 L260.3 277.8 L258.9 273.8 L257.8 269.8 L256.8 265.7 L256.0 261.5 L255.4 257.4 L254.9 253.2 L254.7 249.0 L254.7 244.7 L254.8 240.5 L255.1 236.2 L255.6 232.0 L256.2 227.8 L257.1 223.5 L258.1 219.3 L259.2 215.2 M516.5 221.5 L515.8 227.0 L514.6 232.4 L513.1 237.6 L511.1 242.7 L508.9 247.6 L506.4 252.3 L503.7 256.9 L501.0 261.2 L498.2 265.5 L495.3 269.6 L492.5 273.6 L489.7 277.5 L487.0 281.3 L484.3 285.1 L481.5 288.9 L478.8 292.6 L476.1 296.3 L473.3 300.0 L470.4 303.6 L467.5 307.1 L464.5 310.6 L461.3 314.0 L458.0 317.2 L454.6 320.4 L451.0 323.3 L447.3 326.1 L443.4 328.7 L439.3 331.0 L435.2 333.2 L430.9 335.1 L426.5 336.7 L422.0 338.2 L417.4 339.4 L412.8 340.4 L408.1 341.1 L403.3 341.6 L398.6 342.0 L393.8 342.1 L389.0 342.0 L384.2 341.7 L379.5 341.2 L374.7 340.5 L370.0 339.6 L365.3 338.6 L360.7 337.4 L356.1 336.0 L351.5 334.4 L347.0 332.7 L342.6 330.8 L338.2 328.8 L333.9 326.6 L329.7 324.2 L325.5 321.8 L321.5 319.1 L317.5 316.4 L313.6 313.5 L309.9 310.4 L306.2 307.3 L302.7 304.0 L299.2 300.6 L295.9 297.1 L292.7 293.4 L289.6 289.7 L286.7 285.9 L283.8 282.0 L281.1 278.0 L278.6 273.9 L276.2 269.7 L273.9 265.4 L271.8 261.1 L269.8 256.7 L268.0 252.3 L266.4 247.8 L264.9 243.2 L263.5 238.6 L262.3 234.0 L261.3 229.3 L260.4 224.6 L259.8 219.9 L259.2 215.2 M516.5 221.5 L516.4 224.4 L515.8 227.2 L514.8 229.9 L513.4 232.5 L511.7 235.0 L509.8 237.3 L507.7 239.6 L505.5 241.7 L503.3 243.8 L501.0 245.8 L498.8 247.7 L496.6 249.6 L494.4 251.5 L492.2 253.3 L490.1 255.1 L488.0 256.8 L485.8 258.5 L483.6 260.2 L481.4 261.9 L479.1 263.5 L476.7 265.1 L474.2 266.6 L471.6 268.1 L468.8 269.5 L465.9 270.8 L462.8 272.0 L459.6 273.1 L456.2 274.2 L452.7 275.1 L449.0 275.9 L445.2 276.6 L441.3 277.2 L437.3 277.6 L433.2 278.0 L429.1 278.3 L424.9 278.5 L420.6 278.6 L416.3 278.6 L411.9 278.5 L407.5 278.3 L403.1 278.0 L398.7 277.6 L394.2 277.2 L389.7 276.7 L385.3 276.1 L380.8 275.4 L376.3 274.7 L371.9 273.8 L367.5 272.9 L363.0 272.0 L358.7 270.9 L354.3 269.8 L349.9 268.6 L345.6 267.4 L341.4 266.1 L337.1 264.7 L333.0 263.2 L328.8 261.7 L324.8 260.1 L320.7 258.5 L316.8 256.8 L312.9 255.0 L309.1 253.2 L305.3 251.4 L301.7 249.4 L298.1 247.5 L294.6 245.4 L291.2 243.3 L287.9 241.2 L284.7 239.0 L281.6 236.8 L278.6 234.6 L275.7 232.3 L273.0 229.9 L270.4 227.5 L267.9 225.1 L265.5 222.7 L263.3 220.2 L261.2 217.7 L259.2 215.2" stroke="#2a2a78" stroke-width="0.6" fill="none" stroke-dasharray="0.7 1.7" opacity="0.55"/>
<path d="M450.5 226.4 L450.6 226.4 L450.7 226.3 L450.9 226.2 L451.0 226.0 L451.1 225.8 L451.2 225.5 L451.4 225.2 L451.5 224.9 L451.6 224.5 L451.7 224.1 L451.8 223.6 L451.9 223.1 L451.9 222.6 L452.0 222.1 L452.0 221.6 L452.1 221.0 L452.1 220.4 L452.1 219.9 L452.1 219.3 L452.1 218.7 L452.1 218.2 L452.1 217.6 L452.1 217.1 L452.0 216.6 L452.0 216.1 L451.9 215.7 L451.8 215.3 L451.7 214.9 L451.6 214.5 L451.5 214.2 L451.4 213.9 L451.3 213.7 L451.2 213.5 L451.1 213.4 L451.0 213.3 L450.8 213.3 L450.7 213.3 L450.6 213.4 L450.4 213.5 L450.3 213.6 L450.2 213.9 L450.1 214.1 L449.9 214.4 L449.8 214.8 L449.7 215.1 L449.6 215.6 L449.5 216.0 L449.4 216.5 L449.4 217.0 L449.3 217.5 L449.2 218.1 L449.2 218.7 L449.2 219.2 L449.2 219.8 L449.1 220.4 L449.1 221.0 L449.2 221.5 L449.2 222.1 L449.2 222.6 L449.3 223.1 L449.3 223.6 L449.4 224.1 L449.5 224.5 L449.6 224.9 L449.7 225.2 L449.8 225.5 L449.9 225.8 L450.0 226.0 L450.1 226.2 L450.2 226.3 L450.4 226.4 L450.5 226.4 M452.4 231.9 L452.7 231.9 L452.9 231.7 L453.1 231.5 L453.4 231.2 L453.6 230.8 L453.8 230.3 L454.0 229.7 L454.2 229.1 L454.4 228.4 L454.6 227.6 L454.8 226.8 L454.9 225.9 L455.0 225.0 L455.1 224.0 L455.2 223.0 L455.3 222.0 L455.4 221.0 L455.4 220.0 L455.4 218.9 L455.4 217.9 L455.4 216.9 L455.4 215.9 L455.3 214.9 L455.2 214.0 L455.1 213.1 L455.0 212.3 L454.8 211.5 L454.7 210.8 L454.5 210.1 L454.3 209.6 L454.2 209.1 L454.0 208.6 L453.7 208.3 L453.5 208.1 L453.3 207.9 L453.1 207.8 L452.8 207.9 L452.6 208.0 L452.3 208.2 L452.1 208.5 L451.9 208.9 L451.7 209.3 L451.4 209.9 L451.2 210.5 L451.0 211.2 L450.8 212.0 L450.7 212.8 L450.5 213.7 L450.4 214.7 L450.3 215.7 L450.2 216.7 L450.1 217.7 L450.0 218.8 L450.0 219.8 L450.0 220.9 L450.0 222.0 L450.0 223.0 L450.1 224.0 L450.1 225.0 L450.2 225.9 L450.3 226.8 L450.4 227.7 L450.6 228.5 L450.8 229.2 L450.9 229.8 L451.1 230.4 L451.3 230.9 L451.5 231.3 L451.7 231.6 L452.0 231.8 L452.2 231.9 L452.4 231.9 M454.7 237.5 L455.0 237.4 L455.4 237.2 L455.7 236.8 L456.1 236.4 L456.4 235.8 L456.7 235.0 L457.0 234.2 L457.3 233.3 L457.5 232.2 L457.8 231.1 L458.0 229.9 L458.2 228.7 L458.4 227.3 L458.6 225.9 L458.7 224.5 L458.8 223.0 L458.9 221.5 L459.0 220.0 L459.0 218.6 L459.0 217.1 L458.9 215.6 L458.9 214.2 L458.8 212.8 L458.7 211.4 L458.5 210.1 L458.4 208.9 L458.2 207.8 L458.0 206.8 L457.7 205.8 L457.5 205.0 L457.2 204.2 L456.9 203.6 L456.6 203.1 L456.3 202.7 L455.9 202.5 L455.6 202.4 L455.3 202.4 L454.9 202.6 L454.6 202.9 L454.2 203.3 L453.9 203.9 L453.6 204.5 L453.3 205.3 L453.0 206.3 L452.7 207.3 L452.4 208.4 L452.2 209.6 L452.0 210.9 L451.8 212.3 L451.6 213.7 L451.4 215.2 L451.3 216.7 L451.2 218.3 L451.2 219.9 L451.2 221.4 L451.2 223.0 L451.2 224.5 L451.3 226.0 L451.4 227.4 L451.5 228.8 L451.7 230.1 L451.8 231.4 L452.0 232.5 L452.3 233.5 L452.5 234.5 L452.8 235.3 L453.1 236.0 L453.4 236.5 L453.7 237.0 L454.0 237.3 L454.4 237.5 L454.7 237.5 M457.2 243.1 L457.7 243.0 L458.1 242.6 L458.5 242.2 L459.0 241.5 L459.4 240.7 L459.8 239.8 L460.2 238.7 L460.5 237.5 L460.9 236.1 L461.2 234.6 L461.5 233.1 L461.8 231.4 L462.0 229.6 L462.2 227.8 L462.4 225.9 L462.5 224.0 L462.6 222.1 L462.7 220.1 L462.7 218.2 L462.7 216.2 L462.7 214.3 L462.6 212.4 L462.5 210.6 L462.4 208.9 L462.2 207.2 L462.0 205.6 L461.7 204.1 L461.4 202.7 L461.1 201.5 L460.8 200.4 L460.4 199.4 L460.1 198.6 L459.7 197.9 L459.3 197.4 L458.8 197.1 L458.4 196.9 L458.0 197.0 L457.5 197.2 L457.1 197.5 L456.6 198.1 L456.2 198.8 L455.8 199.7 L455.4 200.7 L455.0 201.9 L454.6 203.3 L454.3 204.8 L453.9 206.4 L453.6 208.1 L453.4 209.9 L453.2 211.8 L453.0 213.8 L452.8 215.8 L452.7 217.8 L452.6 219.9 L452.6 222.0 L452.6 224.0 L452.7 226.0 L452.7 228.0 L452.9 229.9 L453.0 231.7 L453.2 233.5 L453.5 235.1 L453.8 236.6 L454.1 237.9 L454.4 239.2 L454.7 240.2 L455.1 241.1 L455.5 241.9 L455.9 242.4 L456.3 242.8 L456.8 243.0 L457.2 243.1 M459.9 248.7 L460.5 248.5 L461.0 248.1 L461.5 247.5 L462.1 246.7 L462.6 245.7 L463.1 244.5 L463.5 243.1 L464.0 241.6 L464.4 239.9 L464.8 238.1 L465.1 236.2 L465.5 234.1 L465.8 231.9 L466.0 229.7 L466.2 227.4 L466.4 225.0 L466.5 222.6 L466.6 220.2 L466.6 217.8 L466.6 215.4 L466.6 213.1 L466.5 210.8 L466.4 208.5 L466.2 206.3 L466.0 204.3 L465.7 202.3 L465.4 200.5 L465.1 198.7 L464.7 197.2 L464.3 195.8 L463.9 194.6 L463.4 193.6 L463.0 192.7 L462.5 192.1 L461.9 191.7 L461.4 191.5 L460.9 191.5 L460.3 191.7 L459.8 192.2 L459.2 192.8 L458.7 193.7 L458.2 194.8 L457.7 196.1 L457.2 197.6 L456.8 199.2 L456.3 201.1 L455.9 203.1 L455.6 205.2 L455.3 207.5 L455.0 209.8 L454.7 212.3 L454.5 214.8 L454.4 217.4 L454.3 219.9 L454.3 222.5 L454.3 225.1 L454.3 227.6 L454.5 230.1 L454.6 232.4 L454.8 234.7 L455.1 236.9 L455.4 238.9 L455.7 240.7 L456.1 242.4 L456.5 243.9 L456.9 245.2 L457.4 246.3 L457.9 247.2 L458.4 247.9 L458.9 248.4 L459.4 248.7 L459.9 248.7 M463.4 255.4 L464.1 255.2 L464.7 254.7 L465.4 253.9 L466.0 252.9 L466.6 251.6 L467.2 250.2 L467.8 248.5 L468.3 246.6 L468.8 244.5 L469.3 242.3 L469.7 239.9 L470.1 237.3 L470.4 234.7 L470.7 231.9 L471.0 229.1 L471.2 226.2 L471.3 223.3 L471.4 220.4 L471.5 217.4 L471.5 214.5 L471.4 211.6 L471.3 208.7 L471.2 206.0 L471.0 203.3 L470.7 200.8 L470.4 198.4 L470.1 196.1 L469.7 194.0 L469.2 192.1 L468.7 190.4 L468.2 188.8 L467.7 187.6 L467.1 186.5 L466.5 185.7 L465.9 185.2 L465.3 184.9 L464.6 184.9 L464.0 185.1 L463.3 185.7 L462.6 186.5 L462.0 187.5 L461.4 188.9 L460.8 190.4 L460.2 192.3 L459.6 194.3 L459.1 196.6 L458.6 199.1 L458.2 201.7 L457.8 204.5 L457.4 207.4 L457.1 210.5 L456.9 213.6 L456.7 216.8 L456.6 220.0 L456.6 223.2 L456.6 226.4 L456.6 229.5 L456.8 232.6 L457.0 235.5 L457.2 238.3 L457.5 241.0 L457.9 243.5 L458.3 245.8 L458.7 247.8 L459.2 249.7 L459.8 251.3 L460.3 252.7 L460.9 253.7 L461.5 254.6 L462.2 255.1 L462.8 255.4 L463.4 255.4 M468.5 264.5 L469.2 264.1 L470.0 263.5 L470.8 262.5 L471.6 261.2 L472.3 259.6 L473.0 257.7 L473.7 255.5 L474.3 253.2 L474.9 250.6 L475.5 247.8 L476.0 244.8 L476.5 241.6 L476.9 238.3 L477.3 234.9 L477.6 231.4 L477.8 227.8 L478.0 224.2 L478.1 220.5 L478.2 216.9 L478.2 213.2 L478.1 209.6 L478.0 206.1 L477.8 202.7 L477.6 199.4 L477.3 196.2 L476.9 193.2 L476.5 190.3 L476.0 187.7 L475.5 185.3 L474.9 183.1 L474.3 181.2 L473.7 179.6 L473.0 178.2 L472.3 177.2 L471.5 176.5 L470.7 176.1 L469.9 176.0 L469.2 176.3 L468.3 176.9 L467.5 177.9 L466.8 179.2 L466.0 180.8 L465.2 182.8 L464.5 185.1 L463.8 187.6 L463.2 190.5 L462.6 193.6 L462.0 196.9 L461.5 200.5 L461.1 204.2 L460.7 208.0 L460.4 212.0 L460.2 216.0 L460.1 220.1 L460.0 224.1 L460.0 228.2 L460.1 232.2 L460.3 236.0 L460.5 239.7 L460.8 243.3 L461.2 246.6 L461.6 249.8 L462.1 252.6 L462.7 255.2 L463.3 257.5 L464.0 259.5 L464.6 261.2 L465.4 262.5 L466.1 263.5 L466.9 264.2 L467.7 264.5 L468.5 264.5 M475.2 275.9 L476.2 275.4 L477.1 274.5 L478.0 273.2 L479.0 271.5 L479.8 269.4 L480.7 267.1 L481.5 264.3 L482.3 261.3 L483.0 258.1 L483.7 254.6 L484.3 250.8 L484.8 246.9 L485.3 242.8 L485.7 238.5 L486.1 234.2 L486.4 229.8 L486.6 225.3 L486.8 220.7 L486.9 216.2 L486.9 211.7 L486.8 207.2 L486.7 202.9 L486.5 198.6 L486.2 194.5 L485.8 190.5 L485.4 186.8 L484.9 183.2 L484.4 179.9 L483.8 176.9 L483.1 174.1 L482.4 171.7 L481.6 169.6 L480.8 167.9 L479.9 166.5 L479.0 165.6 L478.1 165.0 L477.1 164.9 L476.2 165.1 L475.2 165.9 L474.2 167.0 L473.3 168.6 L472.3 170.6 L471.4 173.0 L470.5 175.9 L469.7 179.1 L468.9 182.7 L468.1 186.6 L467.5 190.8 L466.9 195.3 L466.3 200.0 L465.9 204.8 L465.5 209.9 L465.2 215.0 L465.1 220.2 L465.0 225.4 L465.0 230.5 L465.1 235.6 L465.3 240.5 L465.6 245.2 L465.9 249.7 L466.4 253.9 L466.9 257.9 L467.6 261.5 L468.2 264.7 L469.0 267.6 L469.8 270.0 L470.6 272.1 L471.5 273.7 L472.4 274.9 L473.3 275.7 L474.3 276.0 L475.2 275.9 M450.1 225.3 L451.6 229.8 L453.4 234.4 L455.3 238.9 L457.4 243.5 L459.6 248.1 L462.0 252.7 L464.4 257.3 L467.0 261.9 L469.6 266.6 L472.4 271.2 L475.2 275.9 M450.5 225.1 L452.2 229.5 L454.2 233.8 L456.4 238.2 L458.7 242.6 L461.2 246.9 L463.8 251.3 L466.5 255.7 L469.2 260.0 L472.1 264.4 L475.0 268.8 L478.0 273.2 M450.8 224.6 L452.8 228.5 L455.0 232.4 L457.5 236.2 L460.0 240.1 L462.7 244.0 L465.5 247.9 L468.4 251.7 L471.3 255.6 L474.4 259.4 L477.5 263.2 L480.7 267.1 M451.1 223.7 L453.3 226.9 L455.8 230.1 L458.4 233.2 L461.1 236.4 L464.0 239.5 L467.0 242.6 L470.0 245.7 L473.2 248.8 L476.4 251.9 L479.7 255.0 L483.0 258.1 M451.3 222.6 L453.7 224.8 L456.3 227.1 L459.1 229.3 L462.0 231.6 L465.1 233.8 L468.2 236.0 L471.4 238.2 L474.7 240.4 L478.0 242.6 L481.4 244.7 L484.8 246.9 M451.4 221.3 L454.0 222.5 L456.7 223.7 L459.6 224.9 L462.7 226.1 L465.8 227.2 L469.0 228.4 L472.3 229.6 L475.7 230.7 L479.1 231.9 L482.6 233.1 L486.1 234.2 M451.5 219.9 L454.1 219.9 L456.9 220.0 L459.9 220.1 L463.0 220.1 L466.2 220.2 L469.4 220.3 L472.8 220.4 L476.2 220.5 L479.7 220.6 L483.2 220.6 L486.8 220.7 M451.5 218.5 L454.1 217.4 L456.9 216.3 L459.9 215.3 L463.0 214.2 L466.2 213.2 L469.4 212.2 L472.8 211.2 L476.2 210.2 L479.7 209.2 L483.2 208.2 L486.8 207.2 M451.4 217.1 L453.9 215.0 L456.7 212.9 L459.6 210.8 L462.6 208.7 L465.8 206.6 L469.0 204.6 L472.3 202.5 L475.7 200.5 L479.1 198.5 L482.6 196.5 L486.2 194.5 M451.3 216.0 L453.7 212.9 L456.3 209.9 L459.1 206.9 L462.0 203.8 L465.0 200.8 L468.1 197.9 L471.4 194.9 L474.6 192.0 L478.0 189.0 L481.4 186.1 L484.9 183.2 M451.0 215.1 L453.2 211.3 L455.7 207.6 L458.3 203.8 L461.0 200.0 L463.9 196.3 L466.9 192.6 L470.0 188.9 L473.1 185.2 L476.4 181.5 L479.7 177.8 L483.1 174.1 M450.7 214.6 L452.7 210.3 L454.9 206.0 L457.3 201.8 L459.9 197.5 L462.6 193.3 L465.4 189.1 L468.3 184.8 L471.3 180.6 L474.4 176.4 L477.5 172.1 L480.8 167.9 M450.4 214.4 L452.2 209.9 L454.1 205.5 L456.3 201.0 L458.6 196.5 L461.1 192.1 L463.7 187.6 L466.3 183.1 L469.1 178.6 L472.0 174.1 L475.0 169.5 L478.1 165.0 M450.1 214.5 L451.6 210.2 L453.3 205.9 L455.2 201.5 L457.3 197.1 L459.5 192.8 L461.8 188.3 L464.3 183.9 L466.9 179.4 L469.6 174.9 L472.3 170.4 L475.2 165.9 M449.8 215.1 L451.0 211.2 L452.5 207.3 L454.1 203.3 L455.9 199.3 L457.9 195.3 L460.0 191.3 L462.3 187.2 L464.6 183.1 L467.1 179.0 L469.7 174.8 L472.3 170.6 M449.5 215.9 L450.5 212.7 L451.7 209.5 L453.2 206.3 L454.8 203.0 L456.5 199.7 L458.4 196.3 L460.4 193.0 L462.6 189.6 L464.8 186.1 L467.2 182.6 L469.7 179.1 M449.3 217.1 L450.1 214.8 L451.1 212.5 L452.4 210.2 L453.8 207.9 L455.4 205.5 L457.1 203.1 L458.9 200.7 L460.9 198.3 L463.0 195.8 L465.2 193.3 L467.5 190.8 M449.1 218.4 L449.8 217.2 L450.7 216.0 L451.8 214.9 L453.1 213.7 L454.5 212.4 L456.1 211.2 L457.8 210.0 L459.7 208.7 L461.6 207.4 L463.7 206.2 L465.9 204.8 M449.0 219.8 L449.6 219.8 L450.5 219.8 L451.5 219.9 L452.8 219.9 L454.1 219.9 L455.6 220.0 L457.3 220.0 L459.0 220.1 L460.9 220.1 L462.9 220.1 L465.1 220.2 M449.0 221.2 L449.6 222.4 L450.5 223.6 L451.6 224.9 L452.8 226.1 L454.2 227.4 L455.7 228.7 L457.3 230.1 L459.1 231.4 L461.0 232.8 L463.0 234.2 L465.1 235.6 M449.1 222.6 L449.8 224.9 L450.7 227.2 L451.9 229.6 L453.2 231.9 L454.6 234.4 L456.2 236.8 L457.9 239.3 L459.8 241.9 L461.7 244.4 L463.8 247.0 L465.9 249.7 M449.3 223.7 L450.1 226.9 L451.2 230.2 L452.5 233.5 L453.9 236.9 L455.5 240.3 L457.2 243.7 L459.0 247.2 L461.0 250.7 L463.1 254.2 L465.3 257.8 L467.6 261.5 M449.5 224.6 L450.6 228.5 L451.8 232.5 L453.3 236.5 L454.9 240.6 L456.7 244.7 L458.6 248.8 L460.6 253.0 L462.7 257.2 L465.0 261.4 L467.3 265.7 L469.8 270.0 M449.8 225.1 L451.1 229.5 L452.6 233.9 L454.2 238.4 L456.1 242.8 L458.1 247.3 L460.2 251.8 L462.4 256.4 L464.8 261.0 L467.2 265.6 L469.8 270.2 L472.4 274.9" stroke="#58e6bc" stroke-width="0.5" fill="none" opacity="0.8"/>
<path d="M449.4 222.6 L449.5 222.5 L449.5 222.5 L449.6 222.5 L449.6 222.4 L449.7 222.3 L449.7 222.2 L449.8 222.1 L449.8 221.9 L449.9 221.8 L449.9 221.6 L449.9 221.4 L450.0 221.2 L450.0 221.0 L450.0 220.8 L450.1 220.5 L450.1 220.3 L450.1 220.1 L450.1 219.8 L450.1 219.6 L450.1 219.4 L450.1 219.1 L450.1 218.9 L450.1 218.7 L450.0 218.5 L450.0 218.3 L450.0 218.1 L450.0 217.9 L449.9 217.7 L449.9 217.6 L449.8 217.5 L449.8 217.3 L449.8 217.3 L449.7 217.2 L449.6 217.1 L449.6 217.1 L449.5 217.1 L449.5 217.1 L449.4 217.1 L449.4 217.2 L449.3 217.2 L449.3 217.3 L449.2 217.4 L449.2 217.6 L449.1 217.7 L449.1 217.9 L449.0 218.0 L449.0 218.2 L449.0 218.4 L448.9 218.6 L448.9 218.9 L448.9 219.1 L448.9 219.3 L448.9 219.6 L448.8 219.8 L448.8 220.0 L448.8 220.3 L448.8 220.5 L448.9 220.7 L448.9 221.0 L448.9 221.2 L448.9 221.4 L448.9 221.6 L449.0 221.7 L449.0 221.9 L449.1 222.1 L449.1 222.2 L449.1 222.3 L449.2 222.4 L449.2 222.5 L449.3 222.5 L449.3 222.5 L449.4 222.6 M450.1 225.3 L450.3 225.3 L450.4 225.2 L450.5 225.1 L450.6 225.0 L450.7 224.8 L450.8 224.6 L450.9 224.3 L451.0 224.0 L451.1 223.7 L451.1 223.4 L451.2 223.0 L451.3 222.6 L451.3 222.2 L451.4 221.7 L451.4 221.3 L451.5 220.8 L451.5 220.3 L451.5 219.9 L451.5 219.4 L451.5 218.9 L451.5 218.5 L451.5 218.0 L451.5 217.6 L451.4 217.1 L451.4 216.7 L451.3 216.4 L451.3 216.0 L451.2 215.7 L451.1 215.4 L451.0 215.1 L450.9 214.9 L450.8 214.7 L450.7 214.6 L450.6 214.5 L450.5 214.4 L450.4 214.4 L450.3 214.4 L450.2 214.4 L450.1 214.5 L450.0 214.7 L449.9 214.9 L449.8 215.1 L449.7 215.3 L449.6 215.6 L449.5 215.9 L449.4 216.3 L449.3 216.7 L449.3 217.1 L449.2 217.5 L449.2 217.9 L449.1 218.4 L449.1 218.8 L449.1 219.3 L449.0 219.8 L449.0 220.3 L449.0 220.8 L449.0 221.2 L449.1 221.7 L449.1 222.1 L449.1 222.6 L449.2 223.0 L449.2 223.3 L449.3 223.7 L449.4 224.0 L449.5 224.3 L449.5 224.6 L449.6 224.8 L449.7 225.0 L449.8 225.1 L449.9 225.2 L450.0 225.3 L450.1 225.3 M451.0 228.1 L451.2 228.0 L451.4 227.9 L451.5 227.8 L451.7 227.6 L451.8 227.3 L452.0 227.0 L452.1 226.6 L452.3 226.1 L452.4 225.7 L452.5 225.1 L452.6 224.6 L452.7 224.0 L452.8 223.3 L452.9 222.7 L453.0 222.0 L453.0 221.3 L453.1 220.6 L453.1 219.9 L453.1 219.2 L453.1 218.5 L453.1 217.8 L453.0 217.1 L453.0 216.5 L452.9 215.8 L452.9 215.2 L452.8 214.7 L452.7 214.1 L452.6 213.6 L452.5 213.2 L452.3 212.8 L452.2 212.5 L452.1 212.2 L451.9 212.0 L451.8 211.8 L451.6 211.7 L451.4 211.6 L451.3 211.7 L451.1 211.8 L451.0 211.9 L450.8 212.1 L450.6 212.4 L450.5 212.7 L450.3 213.1 L450.2 213.5 L450.1 214.0 L449.9 214.5 L449.8 215.1 L449.7 215.7 L449.6 216.3 L449.6 217.0 L449.5 217.7 L449.4 218.4 L449.4 219.1 L449.4 219.8 L449.4 220.5 L449.4 221.3 L449.4 222.0 L449.4 222.7 L449.5 223.3 L449.5 224.0 L449.6 224.6 L449.7 225.1 L449.8 225.7 L449.9 226.2 L450.0 226.6 L450.1 227.0 L450.3 227.3 L450.4 227.6 L450.6 227.8 L450.7 228.0 L450.9 228.0 L451.0 228.1 M452.0 230.8 L452.2 230.8 L452.4 230.7 L452.7 230.4 L452.9 230.2 L453.1 229.8 L453.3 229.3 L453.5 228.8 L453.7 228.2 L453.8 227.6 L454.0 226.9 L454.1 226.1 L454.3 225.4 L454.4 224.5 L454.5 223.6 L454.6 222.7 L454.6 221.8 L454.7 220.9 L454.7 219.9 L454.7 219.0 L454.7 218.1 L454.7 217.1 L454.7 216.2 L454.6 215.4 L454.5 214.5 L454.4 213.7 L454.3 213.0 L454.2 212.3 L454.1 211.6 L453.9 211.0 L453.8 210.5 L453.6 210.0 L453.4 209.7 L453.2 209.4 L453.0 209.1 L452.8 209.0 L452.6 208.9 L452.4 209.0 L452.1 209.1 L451.9 209.3 L451.7 209.5 L451.5 209.9 L451.3 210.3 L451.1 210.8 L450.9 211.4 L450.7 212.0 L450.6 212.7 L450.4 213.5 L450.3 214.3 L450.2 215.1 L450.1 216.0 L450.0 217.0 L449.9 217.9 L449.8 218.9 L449.8 219.8 L449.8 220.8 L449.8 221.8 L449.8 222.7 L449.9 223.6 L449.9 224.5 L450.0 225.4 L450.1 226.2 L450.2 227.0 L450.3 227.7 L450.5 228.3 L450.6 228.9 L450.8 229.4 L451.0 229.8 L451.2 230.2 L451.4 230.5 L451.6 230.7 L451.8 230.8 L452.0 230.8 M453.1 233.6 L453.4 233.5 L453.6 233.4 L453.9 233.1 L454.1 232.7 L454.4 232.3 L454.7 231.7 L454.9 231.1 L455.1 230.3 L455.3 229.5 L455.5 228.7 L455.7 227.7 L455.9 226.7 L456.0 225.7 L456.1 224.6 L456.3 223.5 L456.3 222.3 L456.4 221.2 L456.4 220.0 L456.5 218.8 L456.5 217.6 L456.4 216.5 L456.4 215.4 L456.3 214.3 L456.2 213.2 L456.1 212.2 L456.0 211.3 L455.8 210.4 L455.6 209.6 L455.5 208.8 L455.3 208.2 L455.0 207.6 L454.8 207.1 L454.6 206.8 L454.3 206.5 L454.1 206.3 L453.8 206.2 L453.5 206.2 L453.3 206.4 L453.0 206.6 L452.7 206.9 L452.5 207.4 L452.2 207.9 L452.0 208.5 L451.7 209.3 L451.5 210.1 L451.3 210.9 L451.1 211.9 L450.9 212.9 L450.8 214.0 L450.6 215.1 L450.5 216.2 L450.4 217.4 L450.4 218.6 L450.3 219.8 L450.3 221.1 L450.3 222.3 L450.3 223.4 L450.4 224.6 L450.5 225.7 L450.6 226.8 L450.7 227.8 L450.8 228.8 L451.0 229.7 L451.2 230.5 L451.4 231.2 L451.6 231.8 L451.8 232.4 L452.1 232.8 L452.3 233.2 L452.6 233.4 L452.8 233.6 L453.1 233.6 M454.2 236.4 L454.5 236.3 L454.9 236.1 L455.2 235.8 L455.5 235.3 L455.8 234.8 L456.1 234.1 L456.4 233.3 L456.6 232.4 L456.9 231.5 L457.1 230.4 L457.4 229.3 L457.5 228.1 L457.7 226.9 L457.9 225.5 L458.0 224.2 L458.1 222.8 L458.2 221.4 L458.2 220.0 L458.2 218.6 L458.2 217.2 L458.2 215.9 L458.2 214.5 L458.1 213.2 L458.0 211.9 L457.8 210.7 L457.7 209.6 L457.5 208.5 L457.3 207.6 L457.1 206.7 L456.8 205.9 L456.6 205.2 L456.3 204.6 L456.0 204.2 L455.7 203.8 L455.4 203.6 L455.1 203.5 L454.8 203.5 L454.4 203.7 L454.1 203.9 L453.8 204.3 L453.5 204.9 L453.2 205.5 L452.9 206.3 L452.6 207.1 L452.3 208.1 L452.1 209.1 L451.9 210.3 L451.6 211.5 L451.5 212.8 L451.3 214.1 L451.2 215.5 L451.1 216.9 L451.0 218.4 L450.9 219.9 L450.9 221.3 L450.9 222.8 L450.9 224.2 L451.0 225.6 L451.1 226.9 L451.2 228.2 L451.4 229.5 L451.5 230.6 L451.7 231.7 L451.9 232.7 L452.2 233.5 L452.4 234.3 L452.7 234.9 L453.0 235.5 L453.3 235.9 L453.6 236.2 L453.9 236.4 L454.2 236.4 M455.4 239.2 L455.8 239.1 L456.2 238.8 L456.5 238.4 L456.9 237.9 L457.3 237.3 L457.6 236.5 L457.9 235.6 L458.2 234.5 L458.5 233.4 L458.8 232.2 L459.0 230.9 L459.3 229.5 L459.5 228.0 L459.7 226.5 L459.8 224.9 L459.9 223.3 L460.0 221.7 L460.1 220.1 L460.1 218.4 L460.1 216.8 L460.0 215.2 L460.0 213.6 L459.9 212.1 L459.8 210.6 L459.6 209.2 L459.4 207.9 L459.2 206.7 L459.0 205.5 L458.7 204.5 L458.4 203.6 L458.1 202.8 L457.8 202.1 L457.5 201.6 L457.1 201.2 L456.8 200.9 L456.4 200.8 L456.0 200.8 L455.7 201.0 L455.3 201.3 L454.9 201.7 L454.6 202.3 L454.2 203.1 L453.9 204.0 L453.5 205.0 L453.2 206.1 L452.9 207.3 L452.7 208.7 L452.4 210.1 L452.2 211.6 L452.0 213.2 L451.9 214.8 L451.7 216.5 L451.7 218.2 L451.6 219.9 L451.6 221.6 L451.6 223.3 L451.6 225.0 L451.7 226.6 L451.8 228.2 L451.9 229.7 L452.1 231.1 L452.3 232.5 L452.5 233.7 L452.8 234.8 L453.1 235.9 L453.4 236.7 L453.7 237.5 L454.0 238.1 L454.3 238.6 L454.7 238.9 L455.1 239.1 L455.4 239.2 M456.7 242.0 L457.1 241.8 L457.5 241.6 L458.0 241.1 L458.4 240.5 L458.8 239.7 L459.1 238.8 L459.5 237.8 L459.9 236.6 L460.2 235.3 L460.5 233.9 L460.8 232.4 L461.0 230.8 L461.3 229.2 L461.5 227.4 L461.6 225.7 L461.8 223.8 L461.9 222.0 L461.9 220.1 L462.0 218.3 L462.0 216.4 L461.9 214.6 L461.9 212.8 L461.7 211.0 L461.6 209.4 L461.4 207.8 L461.2 206.3 L461.0 204.8 L460.7 203.5 L460.4 202.3 L460.1 201.3 L459.8 200.4 L459.4 199.6 L459.0 199.0 L458.6 198.5 L458.2 198.2 L457.8 198.0 L457.4 198.1 L457.0 198.3 L456.6 198.6 L456.1 199.1 L455.7 199.8 L455.3 200.7 L454.9 201.7 L454.6 202.8 L454.2 204.1 L453.9 205.5 L453.6 207.0 L453.3 208.7 L453.0 210.4 L452.8 212.2 L452.6 214.1 L452.5 216.0 L452.4 217.9 L452.3 219.9 L452.3 221.9 L452.3 223.8 L452.3 225.7 L452.4 227.6 L452.6 229.4 L452.7 231.1 L452.9 232.8 L453.1 234.3 L453.4 235.8 L453.7 237.0 L454.0 238.2 L454.3 239.2 L454.7 240.1 L455.1 240.8 L455.5 241.3 L455.9 241.7 L456.3 241.9 L456.7 242.0 M458.0 244.8 L458.5 244.6 L459.0 244.3 L459.4 243.8 L459.9 243.1 L460.3 242.2 L460.7 241.2 L461.2 240.0 L461.6 238.7 L461.9 237.3 L462.3 235.7 L462.6 234.0 L462.9 232.2 L463.1 230.3 L463.3 228.4 L463.5 226.4 L463.7 224.3 L463.8 222.3 L463.9 220.2 L463.9 218.1 L463.9 216.0 L463.8 213.9 L463.8 211.9 L463.6 210.0 L463.5 208.1 L463.3 206.3 L463.1 204.6 L462.8 203.0 L462.5 201.5 L462.2 200.2 L461.8 199.0 L461.5 198.0 L461.1 197.1 L460.6 196.4 L460.2 195.8 L459.7 195.5 L459.3 195.3 L458.8 195.3 L458.3 195.5 L457.9 195.9 L457.4 196.5 L456.9 197.3 L456.5 198.2 L456.0 199.3 L455.6 200.6 L455.2 202.1 L454.9 203.7 L454.5 205.4 L454.2 207.2 L453.9 209.2 L453.7 211.2 L453.5 213.3 L453.3 215.5 L453.2 217.7 L453.1 219.9 L453.1 222.1 L453.1 224.3 L453.1 226.5 L453.2 228.6 L453.4 230.7 L453.6 232.6 L453.8 234.5 L454.0 236.2 L454.3 237.8 L454.6 239.3 L455.0 240.6 L455.4 241.7 L455.8 242.7 L456.2 243.5 L456.6 244.1 L457.1 244.5 L457.5 244.7 L458.0 244.8 M459.4 247.6 L459.9 247.4 L460.4 247.0 L460.9 246.4 L461.4 245.7 L461.9 244.7 L462.4 243.6 L462.8 242.3 L463.3 240.8 L463.7 239.2 L464.1 237.4 L464.4 235.5 L464.7 233.6 L465.0 231.5 L465.2 229.3 L465.4 227.1 L465.6 224.8 L465.7 222.5 L465.8 220.2 L465.8 217.9 L465.8 215.6 L465.8 213.3 L465.7 211.1 L465.6 208.9 L465.4 206.8 L465.2 204.8 L464.9 202.9 L464.7 201.2 L464.3 199.5 L464.0 198.1 L463.6 196.7 L463.2 195.6 L462.7 194.6 L462.3 193.8 L461.8 193.2 L461.3 192.8 L460.8 192.6 L460.3 192.6 L459.8 192.8 L459.2 193.2 L458.7 193.9 L458.2 194.7 L457.7 195.8 L457.2 197.0 L456.8 198.5 L456.3 200.1 L455.9 201.8 L455.5 203.7 L455.2 205.8 L454.9 208.0 L454.6 210.2 L454.4 212.6 L454.2 215.0 L454.1 217.4 L454.0 219.9 L453.9 222.4 L453.9 224.9 L454.0 227.3 L454.1 229.6 L454.2 231.9 L454.4 234.1 L454.7 236.2 L455.0 238.1 L455.3 239.9 L455.6 241.5 L456.0 243.0 L456.5 244.2 L456.9 245.3 L457.4 246.2 L457.9 246.8 L458.4 247.3 L458.9 247.5 L459.4 247.6" stroke="#7ff0d0" stroke-width="0.8" fill="none" opacity="0.45"/>
<path d="M470 222 L497 222" stroke="#e8e03a" stroke-width="1"/>
<path d="M495.5 219.8 L507 222 L495.5 224.2Z" fill="#f2ea30"/>
<circle cx="473.2" cy="219.4" r="1.6" fill="#e02020"/>
<rect x="462.3" y="178" width="2" height="5.4" fill="#30d030"/>
<rect x="470" y="189" width="2.1" height="5.6" fill="#2030e0"/>
<rect x="486.4" y="189.6" width="7" height="7.2" fill="#f01818"/>
<path d="M371.3 350.5V358.5M367.5 353.9H375" stroke="#2a7a3a" stroke-width="0.8"/>
<path d="M535.9 96.6V200.6M488 147H584.6" stroke="#e4e03c" stroke-width="0.8"/>
<path d="M522 146.4L548 147.6" stroke="#e4e03c" stroke-width="1.2" opacity=".8"/>
<path d="M559.6 148V302" stroke="#e4e03c" stroke-width="0.8"/>
<path d="M558 152.5L559.6 148.5L561.2 152.5" stroke="#e4e03c" stroke-width="0.7" fill="none"/>
<path d="M558 298L559.6 302L561.2 298" stroke="#e4e03c" stroke-width="0.7" fill="none"/>
<path d="M532.8 252.6V351.7" stroke="#e4e03c" stroke-width="0.8"/>
<path d="M487 298.4L583 306" stroke="#e4e03c" stroke-width="0.8" stroke-dasharray="3 1.4"/>
<path d="M524 303L545 300.6" stroke="#e4e03c" stroke-width="1" opacity=".8"/>
<text x="559" y="225.4" font-family="Liberation Sans, sans-serif" font-size="4.6" font-weight="bold" fill="#f0ec50" text-anchor="middle">2.88731</text>
<text x="316.6" y="371.4" font-family="Liberation Sans, sans-serif" font-size="4.6" font-weight="bold" fill="#f4f4f4" text-anchor="middle">Camera</text>
</svg>
<div style="left:1551.0px;top:120.8px;width:8.5px;height:821.9px;background:#444"></div>
<div style="left:1554.0px;top:120.8px;width:1.3px;height:821.9px;background:#363636"></div>
<div style="left:1560.8px;top:129.3px;width:305.4px;height:14.0px;background:repeating-linear-gradient(90deg,#505050 0 2px,#444 2px 5px);opacity:.6"></div>
<span class="t" style="left:1649.6px;top:136.8px;color:#b8b8b8;font-size:10px;background:#444;padding:0 6px">Channel Box / Layer Editor</span>
<svg style="left:1869.7px;top:130.8px;width:12px;height:12px" viewBox="0 0 12 12"><path d="M3 9L8 4M6 2L10 6M2 10L4 8" stroke="#d0d0d0" stroke-width="1.8" fill="none"/></svg>
<svg style="left:1884.0px;top:130.8px;width:12px;height:12px" viewBox="0 0 12 12"><path d="M2 2L10 10M10 2L2 10" stroke="#e0e0e0" stroke-width="2"/></svg>
<svg style="left:1840.4px;top:147.9px;width:14px;height:14px" viewBox="0 0 14 14"><path d="M5 2V10H12" stroke="#3c3" stroke-width="1.6" fill="none"/><path d="M5 10L2 13" stroke="#c33" stroke-width="1.6"/><circle cx="9" cy="5" r="1.3" fill="#c44"/></svg>
<span class="t" style="left:1568.3px;top:180.2px;color:#cfcfcf">Channels</span>
<span class="t" style="left:1630.9px;top:180.2px;color:#cfcfcf">Edit</span>
<span class="t" style="left:1666.4px;top:180.2px;color:#cfcfcf">Object</span>
<span class="t" style="left:1715.7px;top:180.2px;color:#cfcfcf">Show</span>
<span class="t" style="left:1562.0px;top:201.2px;color:#cfcfcf">Iris</span>
<div style="left:1832.1px;top:209.5px;width:61.1px;height:169.9px;background:#2e2e2e"></div>
<span class="t r" style="right:91.1px;top:218.0px;color:#cfcfcf">Translate X</span>
<span class="t" style="left:1836.4px;top:218.0px;color:#cfcfcf">0</span>
<span class="t r" style="right:91.1px;top:235.0px;color:#cfcfcf">Translate Y</span>
<span class="t" style="left:1836.4px;top:235.0px;color:#cfcfcf">0</span>
<span class="t r" style="right:91.1px;top:251.9px;color:#cfcfcf">Translate Z</span>
<span class="t" style="left:1836.4px;top:251.9px;color:#cfcfcf">0</span>
<span class="t r" style="right:91.1px;top:268.9px;color:#cfcfcf">Rotate X</span>
<span class="t" style="left:1836.4px;top:268.9px;color:#cfcfcf">0</span>
<span class="t r" style="right:91.1px;top:285.9px;color:#cfcfcf">Rotate Y</span>
<span class="t" style="left:1836.4px;top:285.9px;color:#cfcfcf">0</span>
<span class="t r" style="right:91.1px;top:302.8px;color:#cfcfcf">Rotate Z</span>
<span class="t" style="left:1836.4px;top:302.8px;color:#cfcfcf">0</span>
<span class="t r" style="right:91.1px;top:319.8px;color:#cfcfcf">Scale X</span>
<span class="t" style="left:1836.4px;top:319.8px;color:#cfcfcf">1</span>
<span class="t r" style="right:91.1px;top:336.8px;color:#cfcfcf">Scale Y</span>
<span class="t" style="left:1836.4px;top:336.8px;color:#cfcfcf">1</span>
<span class="t r" style="right:91.1px;top:353.7px;color:#cfcfcf">Scale Z</span>
<span class="t" style="left:1836.4px;top:353.7px;color:#cfcfcf">1</span>
<span class="t r" style="right:91.1px;top:370.7px;color:#cfcfcf">Visibility</span>
<span class="t" style="left:1836.4px;top:370.7px;color:#cfcfcf">on</span>
<span class="t" style="left:1562.0px;top:387.4px;color:#cfcfcf">SHAPES</span>
<div style="left:1561.0px;top:394.9px;width:332.9px;height:18.5px;background:#3a3a3a"></div>
<span class="t" style="left:1570.5px;top:404.4px;color:#d8d8d8">IrisShape</span>
<div style="left:1832.1px;top:531.7px;width:61.1px;height:34.1px;background:#2e2e2e"></div>
<span class="t r" style="right:91.1px;top:421.7px;color:#cfcfcf">Ai Shadow Density</span>
<span class="t" style="left:1836.4px;top:421.7px;color:#cfcfcf">1</span>
<span class="t r" style="right:91.1px;top:438.6px;color:#cfcfcf">Ai Exposure</span>
<span class="t" style="left:1836.4px;top:438.6px;color:#cfcfcf">0</span>
<span class="t r" style="right:91.1px;top:455.5px;color:#cfcfcf">Ai Diffuse</span>
<span class="t" style="left:1836.4px;top:455.5px;color:#cfcfcf">1</span>
<span class="t r" style="right:91.1px;top:472.4px;color:#cfcfcf">Ai Specular</span>
<span class="t" style="left:1836.4px;top:472.4px;color:#cfcfcf">1</span>
<span class="t r" style="right:91.1px;top:489.3px;color:#cfcfcf">Ai Sss</span>
<span class="t" style="left:1836.4px;top:489.3px;color:#cfcfcf">1</span>
<span class="t r" style="right:91.1px;top:506.2px;color:#cfcfcf">Ai Indirect</span>
<span class="t" style="left:1836.4px;top:506.2px;color:#cfcfcf">1</span>
<span class="t r" style="right:91.1px;top:523.1px;color:#cfcfcf">Ai Volume</span>
<span class="t" style="left:1836.4px;top:523.1px;color:#cfcfcf">1</span>
<span class="t r" style="right:91.1px;top:539.9px;color:#cfcfcf">Ai Use Color Temperature</span>
<span class="t" style="left:1836.4px;top:539.9px;color:#cfcfcf">off</span>
<span class="t r" style="right:91.1px;top:556.8px;color:#cfcfcf">Ai Color Temperature</span>
<span class="t" style="left:1836.4px;top:556.8px;color:#cfcfcf">6500</span>
<span class="t r" style="right:91.1px;top:573.7px;color:#cfcfcf">Color R</span>
<span class="t" style="left:1836.4px;top:573.7px;color:#cfcfcf">1</span>
<span class="t r" style="right:91.1px;top:590.6px;color:#cfcfcf">Color G</span>
<span class="t" style="left:1836.4px;top:590.6px;color:#cfcfcf">1</span>
<span class="t r" style="right:91.1px;top:607.5px;color:#cfcfcf">Color B</span>
<span class="t" style="left:1836.4px;top:607.5px;color:#cfcfcf">1</span>
<span class="t r" style="right:91.1px;top:624.4px;color:#cfcfcf">Intensity</span>
<span class="t" style="left:1836.4px;top:624.4px;color:#cfcfcf">1</span>
<span class="t r" style="right:91.1px;top:641.3px;color:#cfcfcf">Emit Diffuse</span>
<span class="t" style="left:1836.4px;top:641.3px;color:#cfcfcf">on</span>
<span class="t r" style="right:91.1px;top:658.2px;color:#cfcfcf">Emit Specular</span>
<span class="t" style="left:1836.4px;top:658.2px;color:#cfcfcf">on</span>
<div style="left:1562.0px;top:683.6px;width:333.9px;height:21.5px;background:#2b2b2b"></div>
<div style="left:1562.0px;top:718.2px;width:166.5px;height:22.6px;background:#3a3a3a"></div>
<div style="left:1562.0px;top:718.2px;width:59.1px;height:22.6px;background:#5d5d5d"></div>
<span class="t" style="left:1572.0px;top:730.7px;color:#eee">Display</span>
<span class="t" style="left:1632.6px;top:730.7px;color:#aaa">Render</span>
<span class="t" style="left:1693.7px;top:730.7px;color:#aaa">Anim</span>
<div style="left:1560.5px;top:740.7px;width:335.4px;height:200.5px;border:1px solid #555;border-bottom:none"></div>
<span class="t" style="left:1572.0px;top:754.7px;color:#cfcfcf">Layers</span>
<span class="t" style="left:1617.9px;top:754.7px;color:#cfcfcf">Options</span>
<span class="t" style="left:1674.7px;top:754.7px;color:#cfcfcf">Help</span>
<svg style="left:1797.9px;top:768.8px;width:16px;height:14px" viewBox="0 0 16 14"><path d="M2 7L8 3V11Z" fill="#d8d8d8"/><rect x="8" y="5" width="4" height="4" fill="#d8d8d8"/></svg>
<svg style="left:1820.4px;top:768.8px;width:16px;height:14px" viewBox="0 0 16 14"><path d="M2 7L8 3V11Z" fill="#d8d8d8"/><rect x="8" y="5" width="4" height="4" fill="#d8d8d8"/></svg>
<svg style="left:1846.4px;top:768.8px;width:16px;height:14px" viewBox="0 0 16 14"><path d="M2 7L8 3V11Z" fill="#d8d8d8"/><rect x="8" y="5" width="4" height="4" fill="#d8d8d8"/><path d="M11 1L12 3L14 3.4L12.4 5L13 7L11 6L9 7L9.6 5L8 3.4L10 3Z" fill="#9fd8f8"/></svg>
<svg style="left:1871.9px;top:768.8px;width:16px;height:14px" viewBox="0 0 16 14"><path d="M2 7L8 3V11Z" fill="#d8d8d8"/><rect x="8" y="5" width="4" height="4" fill="#d8d8d8"/><path d="M11 1L12 3L14 3.4L12.4 5L13 7L11 6L9 7L9.6 5L8 3.4L10 3Z" fill="#9fd8f8"/></svg>
<div style="left:1566.0px;top:790.8px;width:327.9px;height:131.8px;background:#2b2b2b"></div>
<div style="left:1566.0px;top:923.6px;width:327.9px;height:14.0px;background:#3a3a3a"></div>
<div style="left:1579.1px;top:925.1px;width:277.9px;height:11.0px;background:#606060"></div>
<svg style="left:1569.0px;top:926.7px;width:6px;height:8px" viewBox="0 0 6 8"><path d="M5 1L1 4L5 7Z" fill="#ccc"/></svg>
<svg style="left:1882.5px;top:926.7px;width:6px;height:8px" viewBox="0 0 6 8"><path d="M1 1L5 4L1 7Z" fill="#ccc"/></svg>
<div style="left:1898.0px;top:116.8px;width:22.0px;height:826.9px;background:#3c3c3c"></div>
<div style="left:1899.0px;top:117.3px;width:21.0px;height:179.4px;background:#646464;border-radius:2px 0 0 2px"></div>
<span class="t" style="left:1910.0px;top:208.0px;transform-origin:50% 50%;transform:translate(-50%,-50%) rotate(90deg) scaleX(.925);color:#e8e8e8;font-size:11.5px">Channel Box / Layer Editor</span>
<div style="left:1899.0px;top:299.2px;width:21.0px;height:109.3px;background:#383838;border-radius:2px 0 0 2px"></div>
<span class="t" style="left:1910.0px;top:353.3px;transform-origin:50% 50%;transform:translate(-50%,-50%) rotate(90deg) scaleX(.925);color:#999;font-size:11.5px">Attribute Editor</span>
<div style="left:18.3px;top:945.2px;width:1626.6px;height:35.6px;background:#2b2b2b"></div>
<div style="left:79.2px;top:961.2px;width:1.5px;height:19.0px;background:#b0b0b0"></div>
<span class="t" style="left:81.4px;top:953.0px;color:#8c8c8c;font-size:9px">5</span>
<div style="left:146.5px;top:961.2px;width:1.5px;height:19.0px;background:#b0b0b0"></div>
<span class="t" style="left:150.2px;top:953.0px;color:#8c8c8c;font-size:9px">10</span>
<div style="left:213.9px;top:961.2px;width:1.5px;height:19.0px;background:#b0b0b0"></div>
<span class="t" style="left:216.0px;top:953.0px;color:#8c8c8c;font-size:9px">15</span>
<div style="left:281.2px;top:961.2px;width:1.5px;height:19.0px;background:#b0b0b0"></div>
<span class="t" style="left:283.3px;top:953.0px;color:#8c8c8c;font-size:9px">20</span>
<div style="left:348.5px;top:961.2px;width:1.5px;height:19.0px;background:#b0b0b0"></div>
<span class="t" style="left:350.6px;top:953.0px;color:#8c8c8c;font-size:9px">25</span>
<div style="left:415.8px;top:961.2px;width:1.5px;height:19.0px;background:#b0b0b0"></div>
<span class="t" style="left:417.9px;top:953.0px;color:#8c8c8c;font-size:9px">30</span>
<div style="left:483.1px;top:961.2px;width:1.5px;height:19.0px;background:#b0b0b0"></div>
<span class="t" style="left:485.2px;top:953.0px;color:#8c8c8c;font-size:9px">35</span>
<div style="left:550.4px;top:961.2px;width:1.5px;height:19.0px;background:#b0b0b0"></div>
<span class="t" style="left:552.5px;top:953.0px;color:#8c8c8c;font-size:9px">40</span>
<div style="left:617.7px;top:961.2px;width:1.5px;height:19.0px;background:#b0b0b0"></div>
<span class="t" style="left:619.9px;top:953.0px;color:#8c8c8c;font-size:9px">45</span>
<div style="left:685.0px;top:961.2px;width:1.5px;height:19.0px;background:#b0b0b0"></div>
<span class="t" style="left:687.2px;top:953.0px;color:#8c8c8c;font-size:9px">50</span>
<div style="left:752.4px;top:961.2px;width:1.5px;height:19.0px;background:#b0b0b0"></div>
<span class="t" style="left:754.5px;top:953.0px;color:#8c8c8c;font-size:9px">55</span>
<div style="left:819.7px;top:961.2px;width:1.5px;height:19.0px;background:#b0b0b0"></div>
<span class="t" style="left:821.8px;top:953.0px;color:#8c8c8c;font-size:9px">60</span>
<div style="left:887.0px;top:961.2px;width:1.5px;height:19.0px;background:#b0b0b0"></div>
<span class="t" style="left:889.1px;top:953.0px;color:#8c8c8c;font-size:9px">65</span>
<div style="left:954.3px;top:961.2px;width:1.5px;height:19.0px;background:#b0b0b0"></div>
<span class="t" style="left:956.4px;top:953.0px;color:#8c8c8c;font-size:9px">70</span>
<div style="left:1021.6px;top:961.2px;width:1.5px;height:19.0px;background:#b0b0b0"></div>
<span class="t" style="left:1023.7px;top:953.0px;color:#8c8c8c;font-size:9px">75</span>
<div style="left:1088.9px;top:961.2px;width:1.5px;height:19.0px;background:#b0b0b0"></div>
<span class="t" style="left:1091.0px;top:953.0px;color:#8c8c8c;font-size:9px">80</span>
<div style="left:1156.2px;top:961.2px;width:1.5px;height:19.0px;background:#b0b0b0"></div>
<span class="t" style="left:1158.4px;top:953.0px;color:#8c8c8c;font-size:9px">85</span>
<div style="left:1223.5px;top:961.2px;width:1.5px;height:19.0px;background:#b0b0b0"></div>
<span class="t" style="left:1225.7px;top:953.0px;color:#8c8c8c;font-size:9px">90</span>
<div style="left:1290.9px;top:961.2px;width:1.5px;height:19.0px;background:#b0b0b0"></div>
<span class="t" style="left:1293.0px;top:953.0px;color:#8c8c8c;font-size:9px">95</span>
<div style="left:1358.2px;top:961.2px;width:1.5px;height:19.0px;background:#b0b0b0"></div>
<span class="t" style="left:1360.3px;top:953.0px;color:#8c8c8c;font-size:9px">100</span>
<div style="left:1425.5px;top:961.2px;width:1.5px;height:19.0px;background:#b0b0b0"></div>
<span class="t" style="left:1427.6px;top:953.0px;color:#8c8c8c;font-size:9px">105</span>
<div style="left:1492.8px;top:961.2px;width:1.5px;height:19.0px;background:#b0b0b0"></div>
<span class="t" style="left:1494.9px;top:953.0px;color:#8c8c8c;font-size:9px">110</span>
<div style="left:1560.1px;top:961.2px;width:1.5px;height:19.0px;background:#b0b0b0"></div>
<span class="t" style="left:1562.2px;top:953.0px;color:#8c8c8c;font-size:9px">115</span>
<div style="left:1627.4px;top:961.2px;width:1.5px;height:19.0px;background:#b0b0b0"></div>
<span class="t" style="left:1629.5px;top:953.0px;color:#8c8c8c;font-size:9px">120</span>
<div style="left:134.2px;top:947.2px;width:12.5px;height:32.6px;background:#5a5a5a"></div>
<div style="left:138.4px;top:964.7px;width:4.0px;height:15.0px;background:#e0e0e0"></div>
<span class="t" style="left:135.7px;top:953.0px;color:#ddd;font-size:9px">9</span>
<div style="left:1651.7px;top:954.2px;width:67.6px;height:19.0px;background:#2b2b2b"></div>
<span class="t" style="left:1657.2px;top:963.7px;color:#ddd">9</span>
<svg style="left:1729.5px;top:953.2px;width:18px;height:18px" viewBox="0 0 16 16"><path d="M3 3V13" stroke="#e0e0e0" stroke-width="2"/><path d="M10 3L5 8L10 13Z M15 3L10 8L15 13Z" fill="#e0e0e0"/></svg>
<svg style="left:1752.5px;top:953.2px;width:18px;height:18px" viewBox="0 0 16 16"><path d="M4 3V13" stroke="#e0e0e0" stroke-width="2"/><path d="M12 3L6 8L12 13Z" fill="#e0e0e0"/></svg>
<svg style="left:1774.8px;top:953.2px;width:18px;height:18px" viewBox="0 0 16 16"><path d="M4 3V13" stroke="#d85a48" stroke-width="2"/><path d="M12 3L6 8L12 13Z" fill="#e0e0e0"/></svg>
<svg style="left:1797.1px;top:953.2px;width:18px;height:18px" viewBox="0 0 16 16"><path d="M13 2L3 8L13 14Z" fill="#e0e0e0"/></svg>
<svg style="left:1820.1px;top:953.2px;width:18px;height:18px" viewBox="0 0 16 16"><path d="M3 2L13 8L3 14Z" fill="#e0e0e0"/></svg>
<svg style="left:1843.4px;top:953.2px;width:18px;height:18px" viewBox="0 0 16 16"><path d="M12 3V13" stroke="#d85a48" stroke-width="2"/><path d="M4 3L10 8L4 13Z" fill="#e0e0e0"/></svg>
<svg style="left:1865.9px;top:953.2px;width:18px;height:18px" viewBox="0 0 16 16"><path d="M12 3V13" stroke="#e0e0e0" stroke-width="2"/><path d="M4 3L10 8L4 13Z" fill="#e0e0e0"/></svg>
<svg style="left:1889.5px;top:953.2px;width:18px;height:18px" viewBox="0 0 16 16"><path d="M13 3V13" stroke="#e0e0e0" stroke-width="2"/><path d="M1 3L6 8L1 13Z M6 3L11 8L6 13Z" fill="#e0e0e0"/></svg>
<div style="left:18.3px;top:989.3px;width:68.1px;height:22.6px;background:#2b2b2b"></div>
<span class="t" style="left:24.0px;top:1001.3px;color:#ccc">1</span>
<div style="left:94.1px;top:989.3px;width:68.1px;height:22.6px;background:#2b2b2b"></div>
<span class="t" style="left:100.1px;top:1001.3px;color:#ccc">1</span>
<div style="left:174.2px;top:989.8px;width:1268.2px;height:22.1px;background:#3a3a3a"></div>
<div style="left:175.7px;top:990.8px;width:764.5px;height:20.0px;background:#5e5e5e;border-radius:2px"></div>
<div style="left:178.2px;top:993.3px;width:11.0px;height:15.0px;background:#8a8a8a"></div>
<span class="t" style="left:195.3px;top:1001.3px;color:#ccc">1</span>
<div style="left:927.2px;top:993.3px;width:11.0px;height:15.0px;background:#8a8a8a"></div>
<span class="t r" style="right:998.8px;top:1001.3px;color:#ccc">120</span>
<div style="left:1448.9px;top:989.3px;width:75.6px;height:22.6px;background:#2b2b2b"></div>
<span class="t" style="left:1457.9px;top:1001.3px;color:#ccc">120</span>
<div style="left:1533.0px;top:989.3px;width:66.1px;height:22.6px;background:#2b2b2b"></div>
<span class="t" style="left:1539.5px;top:1001.3px;color:#ccc">200</span>
<svg style="left:1606.1px;top:995.3px;width:8px;height:6px" viewBox="0 0 8 6"><path d="M1 5L4 1L7 5" stroke="#999" stroke-width="1.4" fill="none"/></svg>
<span class="t" style="left:1627.1px;top:1001.3px;color:#cfcfcf">No Anim Layer</span>
<svg style="left:1734.5px;top:995.3px;width:8px;height:6px" viewBox="0 0 8 6"><path d="M1 5L4 1L7 5" stroke="#999" stroke-width="1.4" fill="none"/></svg>
<span class="t" style="left:1757.3px;top:1001.3px;color:#cfcfcf">No Character Set</span>
<div style="left:1854.9px;top:985.8px;width:25.0px;height:31.6px;background:#5b8cb3;border-radius:2px"></div>
<svg style="left:1857.4px;top:989.3px;width:20px;height:24px" viewBox="0 0 20 24"><path d="M3 8Q10 2 17 8M3 14Q10 8 17 14M3 19Q10 13 17 19" stroke="#d8ecfa" stroke-width="1.6" fill="none"/></svg>
<svg style="left:1889.5px;top:989.3px;width:22px;height:24px" viewBox="0 0 22 24"><circle cx="8" cy="6" r="3.2" fill="none" stroke="#e88a3a" stroke-width="2"/><path d="M4 20L12 10L18 18M8 12L16 6M10 14L4 12" stroke="#e05a3a" stroke-width="2.2" fill="none"/></svg>
<span class="t" style="left:26.5px;top:1035.9px;color:#cfcfcf">MEL</span>
<div style="left:62.6px;top:1023.4px;width:481.6px;height:24.1px;background:#2b2b2b"></div>
<div style="left:552.2px;top:1023.4px;width:1316.7px;height:24.1px;background:#2b2b2b"></div>
<div style="left:1875.4px;top:1023.9px;width:24.0px;height:23.1px;background:#5a5a5a;border-radius:1px"></div>
<svg style="left:1879.5px;top:1027.4px;width:16px;height:16px" viewBox="0 0 16 16"><rect x="2" y="2" width="12" height="12" fill="#e8e8e8"/><path d="M4 5H12M4 8H12M4 11H9" stroke="#666" stroke-width="1.2"/></svg>
<div style="left:0.0px;top:1048.9px;width:1920.0px;height:31.1px;background:#3b3b3b"></div>
<div style="left:0.0px;top:1048.7px;width:1920.0px;height:1.3px;background:#4a4a4a"></div>
<div style="left:0.0px;top:1050.9px;width:159.2px;height:25.6px;background:#6e6e6e;border-radius:0 6px 0 0;border-top:1px solid #858585"></div>
<div style="left:4.0px;top:1054.4px;width:22.5px;height:22.1px;background:#2a9c98;border:1px solid #bfe8e6"></div>
<svg style="left:9.0px;top:1060.0px;width:12px;height:12px" viewBox="0 0 12 12"><path d="M2 10V3L6 7L10 3V10" stroke="#0c5c5c" stroke-width="2" fill="none"/></svg>
<svg style="left:31.5px;top:1064.0px;width:10px;height:10px" viewBox="0 0 10 10"><path d="M2 8L8 2" stroke="#444" stroke-width="1.6"/><circle cx="3" cy="7" r="1.6" fill="#333"/></svg>
<svg style="left:58.1px;top:1058.0px;width:12px;height:12px" viewBox="0 0 12 12"><rect x="3" y="4" width="6" height="6" fill="none" stroke="#f0f0f0" stroke-width="1.8"/><path d="M5 4V2H11V8H9" stroke="#f0f0f0" stroke-width="1.4" fill="none"/></svg>
<svg style="left:84.6px;top:1058.0px;width:14px;height:12px" viewBox="0 0 14 12"><rect x="2" y="3" width="10" height="6" fill="none" stroke="#f0f0f0" stroke-width="2"/></svg>
<svg style="left:122.7px;top:1058.0px;width:12px;height:12px" viewBox="0 0 12 12"><path d="M3 3L9 9M9 3L3 9" stroke="#f4f4f4" stroke-width="2"/></svg>
<div style="left:35.5px;top:338.3px;width:391.5px;height:600.1px;background:#9a8f9b;border-radius:6px;box-shadow:0 1px 14px 3px rgba(0,0,0,.65);border:1px solid #2c282e"></div>
<div style="left:36.5px;top:339.3px;width:389.5px;height:28.6px;border-radius:5px 5px 0 0;background:linear-gradient(90deg,#b4acb6 0%,#d2ccd4 12%,#beb6c0 24%,#a298a4 45%,#948a96 70%,#9c929e 100%);border-top:1px solid #e0dbe2"></div>
<svg style="left:41.8px;top:344.8px;width:16px;height:16px" viewBox="0 0 16 16"><rect x="0" y="0" width="16" height="16" rx="3" fill="#5fe0d4"/><path d="M3 13V6A5 5 0 0 1 13 6V13Z" fill="#0f8f88"/><path d="M3 13H13V15H3Z" fill="#0b5f5c"/></svg>
<span class="t" style="left:64.1px;top:353.3px;color:#151515;font-size:12px;text-shadow:0 0 6px #fff,0 0 4px #fff">Outliner</span>
<div style="left:319.4px;top:338.8px;width:51.6px;height:18.5px;background:linear-gradient(#d9d6da,#b4b0b6);border:1px solid #6a646c;border-top:none;border-radius:0 0 0 3px"></div>
<div style="left:344.7px;top:338.8px;width:1.3px;height:18.0px;background:#6a646c"></div>
<svg style="left:326.9px;top:346.8px;width:10px;height:6px" viewBox="0 0 10 6"><rect x="1" y="2" width="8" height="3" fill="#333"/></svg>
<svg style="left:353.0px;top:343.8px;width:10px;height:8px" viewBox="0 0 10 8"><rect x="1.5" y="1.5" width="7" height="5" fill="none" stroke="#333" stroke-width="1.6"/></svg>
<div style="left:371.0px;top:338.8px;width:49.6px;height:18.5px;background:linear-gradient(#e08a78,#c8402c 50%,#b83420);border:1px solid #6a3028;border-top:none;border-radius:0 0 3px 0"></div>
<svg style="left:389.5px;top:343.3px;width:12px;height:9px" viewBox="0 0 12 9"><path d="M2 1L10 8M10 1L2 8" stroke="#fff" stroke-width="2.2"/></svg>
<div style="left:41.3px;top:368.1px;width:379.5px;height:560.8px;background:#444;border:1px solid #3a3a3a"></div>
<span class="t" style="left:52.6px;top:381.1px;color:#cfcfcf">Display</span>
<span class="t" style="left:104.9px;top:381.1px;color:#cfcfcf">Show</span>
<span class="t" style="left:147.7px;top:381.1px;color:#cfcfcf">Help</span>
<div style="left:42.6px;top:394.4px;width:377.0px;height:1.0px;background:#555"></div>
<svg style="left:48.6px;top:396.9px;width:16px;height:8px" viewBox="0 0 16 8"><path d="M1 2H4M6 2H9M11 2H14M1 6H4M6 6H9" stroke="#888" stroke-width="1.6"/></svg>
<svg style="left:48.6px;top:408.0px;width:16px;height:8px" viewBox="0 0 16 8"><path d="M1 2H4M6 2H9M11 2H14M1 6H4M6 6H9" stroke="#888" stroke-width="1.6"/></svg>
<div style="left:72.1px;top:395.7px;width:347.5px;height:20.5px;background:#2b2b2b;border-radius:1px"></div>
<div style="left:42.6px;top:421.2px;width:363.0px;height:485.1px;background:#2b2b2b"></div>
<div style="left:42.6px;top:548.0px;width:363.0px;height:42.3px;background:#3f4a55"></div>
<div style="left:42.6px;top:612.4px;width:363.0px;height:20.8px;background:#5285a6"></div>
<svg style="left:89.6px;top:425.3px;width:16px;height:14px" viewBox="0 0 16 14"><rect x="1" y="4" width="9" height="7" fill="#e0e0e0"/><path d="M10 7.5L15 4V11Z" fill="#e0e0e0"/></svg>
<span class="t" style="left:109.6px;top:432.3px;color:#6a6a6a">persp</span>
<svg style="left:89.6px;top:446.2px;width:16px;height:14px" viewBox="0 0 16 14"><rect x="1" y="4" width="9" height="7" fill="#e0e0e0"/><path d="M10 7.5L15 4V11Z" fill="#e0e0e0"/></svg>
<span class="t" style="left:109.6px;top:453.2px;color:#6a6a6a">top</span>
<svg style="left:89.6px;top:467.1px;width:16px;height:14px" viewBox="0 0 16 14"><rect x="1" y="4" width="9" height="7" fill="#e0e0e0"/><path d="M10 7.5L15 4V11Z" fill="#e0e0e0"/></svg>
<span class="t" style="left:109.6px;top:474.1px;color:#6a6a6a">front</span>
<svg style="left:89.6px;top:488.1px;width:16px;height:14px" viewBox="0 0 16 14"><rect x="1" y="4" width="9" height="7" fill="#e0e0e0"/><path d="M10 7.5L15 4V11Z" fill="#e0e0e0"/></svg>
<span class="t" style="left:109.6px;top:495.1px;color:#6a6a6a">side</span>
<svg style="left:64.6px;top:509.5px;width:13px;height:13px" viewBox="0 0 13 13"><rect x="0.8" y="0.8" width="11.4" height="11.4" fill="#2b2b2b" stroke="#d0d0d0" stroke-width="1.4"/><path d="M3 6.5H10" stroke="#e8e8e8" stroke-width="1.6"/><path d="M6.5 3V10" stroke="#e8e8e8" stroke-width="1.6"/></svg>
<svg style="left:89.1px;top:509.0px;width:16px;height:14px" viewBox="0 0 16 14"><path d="M4 1H15L12 13H1Z" fill="#f0f0f0"/><path d="M5 9L12 4" stroke="#c83030" stroke-width="2.2"/></svg>
<span class="t" style="left:109.6px;top:516.0px;color:#d8d8d8">grp_lookdev</span>
<svg style="left:64.6px;top:530.5px;width:13px;height:13px" viewBox="0 0 13 13"><rect x="0.8" y="0.8" width="11.4" height="11.4" fill="#2b2b2b" stroke="#d0d0d0" stroke-width="1.4"/><path d="M3 6.5H10" stroke="#e8e8e8" stroke-width="1.6"/><path d="M6.5 3V10" stroke="#e8e8e8" stroke-width="1.6"/></svg>
<svg style="left:89.1px;top:530.0px;width:16px;height:14px" viewBox="0 0 16 14"><path d="M4 1H15L12 13H1Z" fill="#f0f0f0"/><path d="M5 9L12 4" stroke="#c83030" stroke-width="2.2"/></svg>
<span class="t" style="left:109.6px;top:537.0px;color:#d8d8d8">lightRig</span>
<svg style="left:64.6px;top:551.4px;width:13px;height:13px" viewBox="0 0 13 13"><rect x="0.8" y="0.8" width="11.4" height="11.4" fill="#2b2b2b" stroke="#d0d0d0" stroke-width="1.4"/><path d="M3 6.5H10" stroke="#e8e8e8" stroke-width="1.6"/></svg>
<svg style="left:89.6px;top:550.9px;width:14px;height:14px" viewBox="0 0 14 14"><path d="M7 1V13M1.5 4L12.5 10M1.5 10L12.5 4" stroke="#8ab0e8" stroke-width="1.6"/></svg>
<span class="t" style="left:109.6px;top:557.9px;color:#d8d8d8">obj</span>
<div style="left:70.6px;top:564.5px;width:1.0px;height:14.4px;background:#999"></div>
<div style="left:70.6px;top:578.4px;width:13.5px;height:1.0px;background:#999"></div>
<svg style="left:84.6px;top:572.4px;width:13px;height:13px" viewBox="0 0 13 13"><rect x="0.8" y="0.8" width="11.4" height="11.4" fill="#2b2b2b" stroke="#d0d0d0" stroke-width="1.4"/><path d="M3 6.5H10" stroke="#e8e8e8" stroke-width="1.6"/></svg>
<svg style="left:108.7px;top:571.9px;width:16px;height:14px" viewBox="0 0 16 14"><path d="M4 1H15L12 13H1Z" fill="#f0f0f0"/><path d="M5 9L12 4" stroke="#c83030" stroke-width="2.2"/></svg>
<span class="t" style="left:129.2px;top:578.9px;color:#d8d8d8">eye_grp</span>
<div style="left:90.6px;top:585.4px;width:1.0px;height:35.4px;background:#999"></div>
<div style="left:90.6px;top:599.3px;width:32.5px;height:1.0px;background:#999"></div>
<div style="left:90.6px;top:620.3px;width:32.5px;height:1.0px;background:#ccc"></div>
<svg style="left:125.2px;top:592.8px;width:18px;height:14px" viewBox="0 0 18 14"><path d="M1 7L8 2L17 6L10 12Z" fill="none" stroke="#e8e8e8" stroke-width="1.6"/><path d="M5 9L12 4M5 4.5L13 9" stroke="#e8e8e8" stroke-width="1.2"/></svg>
<span class="t" style="left:148.2px;top:599.8px;color:#d8d8d8">Sclera</span>
<svg style="left:125.2px;top:613.8px;width:18px;height:14px" viewBox="0 0 18 14"><path d="M1 7L8 2L17 6L10 12Z" fill="none" stroke="#e8e8e8" stroke-width="1.6"/><path d="M5 9L12 4M5 4.5L13 9" stroke="#e8e8e8" stroke-width="1.2"/></svg>
<span class="t" style="left:148.2px;top:620.8px;color:#fff">Iris</span>
<svg style="left:89.6px;top:634.7px;width:16px;height:14px" viewBox="0 0 16 14"><rect x="1" y="4" width="9" height="7" fill="#e0e0e0"/><path d="M10 7.5L15 4V11Z" fill="#e0e0e0"/></svg>
<span class="t" style="left:109.6px;top:641.7px;color:#d8d8d8">Camera</span>
<svg style="left:64.6px;top:656.2px;width:13px;height:13px" viewBox="0 0 13 13"><rect x="0.8" y="0.8" width="11.4" height="11.4" fill="#2b2b2b" stroke="#d0d0d0" stroke-width="1.4"/><path d="M3 6.5H10" stroke="#e8e8e8" stroke-width="1.6"/><path d="M6.5 3V10" stroke="#e8e8e8" stroke-width="1.6"/></svg>
<svg style="left:89.6px;top:655.7px;width:14px;height:14px" viewBox="0 0 14 14"><circle cx="7" cy="7" r="5.5" fill="none" stroke="#e0e0e0" stroke-width="1.6"/><path d="M4 9L10 4" stroke="#e0e0e0" stroke-width="1.6"/><circle cx="4.5" cy="9" r="1.6" fill="#e0e0e0"/></svg>
<span class="t" style="left:109.6px;top:662.7px;color:#d8d8d8">defaultLightSet</span>
<svg style="left:89.6px;top:676.6px;width:14px;height:14px" viewBox="0 0 14 14"><circle cx="7" cy="7" r="5.5" fill="none" stroke="#e0e0e0" stroke-width="1.6"/><path d="M4 9L10 4" stroke="#e0e0e0" stroke-width="1.6"/><circle cx="4.5" cy="9" r="1.6" fill="#e0e0e0"/></svg>
<span class="t" style="left:109.6px;top:683.6px;color:#d8d8d8">defaultObjectSet</span>
<div style="left:405.5px;top:421.2px;width:14.0px;height:485.1px;background:#3c3c3c"></div>
<div style="left:406.5px;top:434.5px;width:12.0px;height:456.1px;background:#4a4a4a"></div>
<svg style="left:408.5px;top:424.5px;width:8px;height:6px" viewBox="0 0 8 6"><path d="M1 5L4 1L7 5Z" fill="#e0e0e0"/></svg>
<svg style="left:408.5px;top:895.6px;width:8px;height:6px" viewBox="0 0 8 6"><path d="M1 1L4 5L7 1Z" fill="#e0e0e0"/></svg>
<div style="left:42.6px;top:906.6px;width:363.0px;height:14.5px;background:#3c3c3c"></div>
<div style="left:54.1px;top:908.1px;width:336.9px;height:11.5px;background:#606060"></div>
<svg style="left:45.1px;top:909.9px;width:6px;height:8px" viewBox="0 0 6 8"><path d="M5 1L1 4L5 7Z" fill="#e0e0e0"/></svg>
<svg style="left:395.5px;top:909.9px;width:6px;height:8px" viewBox="0 0 6 8"><path d="M1 1L5 4L1 7Z" fill="#e0e0e0"/></svg>
</div></body></html>
